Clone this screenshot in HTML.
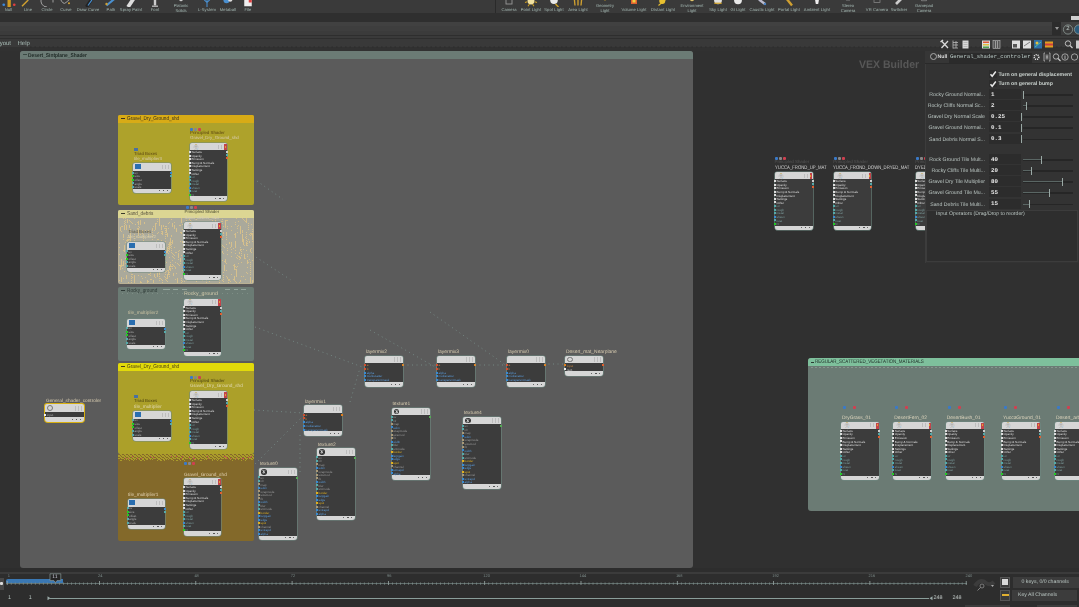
<!DOCTYPE html>
<html><head><meta charset="utf-8"><style>
html,body{margin:0;padding:0;width:1079px;height:607px;overflow:hidden;background:#303030;position:relative}
body{font-family:"Liberation Sans",sans-serif}
.t{position:absolute;white-space:nowrap;line-height:1.1;text-rendering:geometricPrecision}
.c{text-align:center}
</style></head><body>
<div id="root" style="position:absolute;left:0;top:0;width:1079px;height:607px;will-change:transform"><div style="position:absolute;left:0px;top:0px;width:1079px;height:13px;background:#3a3a3a;"></div><div style="position:absolute;left:0px;top:13px;width:1079px;height:9px;background:#2f2f2f;"></div><div style="position:absolute;left:0px;top:22px;width:1079px;height:4px;background:#414141;"></div><div style="position:absolute;left:0px;top:26px;width:1079px;height:5px;background:#3e3e3e;"></div><div style="position:absolute;left:0px;top:31px;width:1079px;height:4px;background:#3b3b3b;"></div><div style="position:absolute;left:0px;top:35px;width:1079px;height:1px;background:#2e2e2e;"></div><div style="position:absolute;left:0px;top:36px;width:1079px;height:2px;background:#3a3a3a;"></div><div style="position:absolute;left:0px;top:38px;width:1079px;height:1px;background:#2e2e2e;"></div><div style="position:absolute;left:0px;top:39px;width:1079px;height:8px;background:#393939;"></div><div style="position:absolute;left:0px;top:47px;width:1079px;height:4px;background:#313131;"></div><svg style="position:absolute;left:0;top:45.5px" width="1079" height="2"><line x1="30" y1="1" x2="1079" y2="1" stroke="#2c2c2c" stroke-width="1" stroke-dasharray="1.5 3"/></svg><svg style="position:absolute;left:1.5px;top:0" width="14" height="7" viewBox="-7 0 14 7"><g transform="translate(0,-0.5) scale(1.5)"><rect x="-1" y="-1" width="2.2" height="6.5" fill="#d09a20"/><circle cx="-3.5" cy="3.5" r="0.9" fill="#3a8ae0"/><circle cx="3.5" cy="3.5" r="0.9" fill="#e04040"/></g></svg><div class="t c" style="left:-21.5px;top:7px;width:60px;font-size:4.1px;line-height:5px;color:#a6bab4;letter-spacing:0.1px">Null</div><svg style="position:absolute;left:21px;top:0" width="14" height="7" viewBox="-7 0 14 7"><g transform="translate(0,-0.5) scale(1.5)"><path d="M-4 4.5 L0 0.5" stroke="#d0a030" stroke-width="1"/><path d="M0 0.5 L3 -1" stroke="#999" stroke-width="0.6"/></g></svg><div class="t c" style="left:-2px;top:7px;width:60px;font-size:4.1px;line-height:5px;color:#a6bab4;letter-spacing:0.1px">Line</div><svg style="position:absolute;left:40px;top:0" width="14" height="7" viewBox="-7 0 14 7"><g transform="translate(0,-0.5) scale(1.5)"><path d="M-3.5 -1 A4 4 0 0 0 0 5" stroke="#aaa" stroke-width="0.6" fill="none"/><path d="M4 -1 L4 2" stroke="#aaa" stroke-width="0.6"/></g></svg><div class="t c" style="left:17px;top:7px;width:60px;font-size:4.1px;line-height:5px;color:#a6bab4;letter-spacing:0.1px">Circle</div><svg style="position:absolute;left:59px;top:0" width="14" height="7" viewBox="-7 0 14 7"><g transform="translate(0,-0.5) scale(1.5)"><path d="M-4 -1 Q-2 4 0 2 T4 -1" stroke="#aaa" stroke-width="0.6" fill="none"/><circle cx="2" cy="2.5" r="0.7" fill="#d0a030"/></g></svg><div class="t c" style="left:36px;top:7px;width:60px;font-size:4.1px;line-height:5px;color:#a6bab4;letter-spacing:0.1px">Curve</div><svg style="position:absolute;left:81px;top:0" width="14" height="7" viewBox="-7 0 14 7"><g transform="translate(0,-0.5) scale(1.5)"><path d="M-1 5 L3 -1" stroke="#222" stroke-width="2.2"/><path d="M0 4 L3.5 -1" stroke="#4a90d0" stroke-width="0.8"/></g></svg><div class="t c" style="left:58px;top:7px;width:60px;font-size:4.1px;line-height:5px;color:#a6bab4;letter-spacing:0.1px">Draw Curve</div><svg style="position:absolute;left:104px;top:0" width="14" height="7" viewBox="-7 0 14 7"><g transform="translate(0,-0.5) scale(1.5)"><path d="M-3 4 L3 -1" stroke="#4a90d0" stroke-width="1.4"/><circle cx="-3" cy="3" r="0.8" fill="#d0a030"/></g></svg><div class="t c" style="left:81px;top:7px;width:60px;font-size:4.1px;line-height:5px;color:#a6bab4;letter-spacing:0.1px">Path</div><svg style="position:absolute;left:124px;top:0" width="14" height="7" viewBox="-7 0 14 7"><g transform="translate(0,-0.5) scale(1.5)"><path d="M-2 5 L2 -1" stroke="#ddd" stroke-width="2.5"/></g></svg><div class="t c" style="left:101px;top:7px;width:60px;font-size:4.1px;line-height:5px;color:#a6bab4;letter-spacing:0.1px">Spray Paint</div><svg style="position:absolute;left:148px;top:0" width="14" height="7" viewBox="-7 0 14 7"><g transform="translate(0,-0.5) scale(1.5)"><rect x="-0.8" y="-1" width="1.6" height="5" fill="#ccc"/><rect x="-2" y="4" width="4" height="1" fill="#aaa"/></g></svg><div class="t c" style="left:125px;top:7px;width:60px;font-size:4.1px;line-height:5px;color:#a6bab4;letter-spacing:0.1px">Font</div><svg style="position:absolute;left:174px;top:0" width="14" height="7" viewBox="-7 0 14 7"><g transform="translate(0,-0.5) scale(0.9)"><circle cx="0" cy="0" r="2" fill="#ccc"/></g></svg><div class="t c" style="left:151px;top:4.1px;width:60px;font-size:4.1px;line-height:4.4px;color:#a6bab4">Platonic<br>Solids</div><svg style="position:absolute;left:200px;top:0" width="14" height="7" viewBox="-7 0 14 7"><g transform="translate(0,-0.5) scale(1.5)"><path d="M0 5 L0 0 M-3 -1 L0 2 L3 -1" stroke="#4a90d0" stroke-width="0.7" fill="none"/></g></svg><div class="t c" style="left:177px;top:7px;width:60px;font-size:4.1px;line-height:5px;color:#a6bab4;letter-spacing:0.1px">L-System</div><svg style="position:absolute;left:221px;top:0" width="14" height="7" viewBox="-7 0 14 7"><g transform="translate(0,-0.5) scale(1.5)"><circle cx="-1" cy="0.5" r="2" fill="#4a90d0"/><circle cx="1.5" cy="0" r="1.5" fill="#ddd"/></g></svg><div class="t c" style="left:198px;top:7px;width:60px;font-size:4.1px;line-height:5px;color:#a6bab4;letter-spacing:0.1px">Metaball</div><svg style="position:absolute;left:241px;top:0" width="14" height="7" viewBox="-7 0 14 7"><g transform="translate(0,-0.5) scale(1.5)"><rect x="-2.5" y="-1" width="5" height="5.5" fill="#eee"/><rect x="0.5" y="-1" width="2" height="3" fill="#e04040"/></g></svg><div class="t c" style="left:218px;top:7px;width:60px;font-size:4.1px;line-height:5px;color:#a6bab4;letter-spacing:0.1px">File</div><svg style="position:absolute;left:502px;top:0" width="14" height="7" viewBox="-7 0 14 7"><g transform="translate(0,-0.5) scale(1.5)"><rect x="-2" y="-1" width="4" height="4" fill="none" stroke="#999" stroke-width="0.6"/></g></svg><div class="t c" style="left:479px;top:7px;width:60px;font-size:4.1px;line-height:5px;color:#a6bab4;letter-spacing:0.1px">Camera</div><svg style="position:absolute;left:524px;top:0" width="14" height="7" viewBox="-7 0 14 7"><g transform="translate(0,-0.5) scale(1.5)"><circle cx="0" cy="1" r="2.3" fill="#f0e0a0"/><path d="M-4 2 L-2.5 1.5 M4 2 L2.5 1.5 M-2 4.5 L-1 3 M2 4.5 L1 3" stroke="#d0a020" stroke-width="0.7"/></g></svg><div class="t c" style="left:501px;top:7px;width:60px;font-size:4.1px;line-height:5px;color:#a6bab4;letter-spacing:0.1px">Point Light</div><svg style="position:absolute;left:547px;top:0" width="14" height="7" viewBox="-7 0 14 7"><g transform="translate(0,-0.5) scale(1.5)"><circle cx="0" cy="0.5" r="2.5" fill="#e8e8e8"/><path d="M1 3 L3 5" stroke="#d0a020" stroke-width="0.9"/></g></svg><div class="t c" style="left:524px;top:7px;width:60px;font-size:4.1px;line-height:5px;color:#a6bab4;letter-spacing:0.1px">Spot Light</div><svg style="position:absolute;left:571px;top:0" width="14" height="7" viewBox="-7 0 14 7"><g transform="translate(0,-0.5) scale(1.5)"><path d="M-2.5 -1 L-2 4 M0 -1 L0 4 M2.5 -1 L2 4" stroke="#d0a030" stroke-width="0.9"/></g></svg><div class="t c" style="left:548px;top:7px;width:60px;font-size:4.1px;line-height:5px;color:#a6bab4;letter-spacing:0.1px">Area Light</div><svg style="position:absolute;left:598px;top:0" width="14" height="7" viewBox="-7 0 14 7"><g transform="translate(0,-0.5) scale(0.9)"><circle cx="0" cy="-0.5" r="1.5" fill="#e8b020"/></g></svg><div class="t c" style="left:575px;top:4.1px;width:60px;font-size:4.1px;line-height:4.4px;color:#a6bab4">Geometry<br>Light</div><svg style="position:absolute;left:627px;top:0" width="14" height="7" viewBox="-7 0 14 7"><g transform="translate(0,-0.5) scale(1.5)"><rect x="-2" y="-1" width="4" height="4" fill="#e06030"/><rect x="-1" y="0" width="2" height="2" fill="#f0d040"/></g></svg><div class="t c" style="left:604px;top:7px;width:60px;font-size:4.1px;line-height:5px;color:#a6bab4;letter-spacing:0.1px">Volume Light</div><svg style="position:absolute;left:656px;top:0" width="14" height="7" viewBox="-7 0 14 7"><g transform="translate(0,-0.5) scale(1.5)"><circle cx="-0.5" cy="1" r="2" fill="#e8c030"/><path d="M-3 4 L3 -1" stroke="#e8c030" stroke-width="0.7"/></g></svg><div class="t c" style="left:633px;top:7px;width:60px;font-size:4.1px;line-height:5px;color:#a6bab4;letter-spacing:0.1px">Distant Light</div><svg style="position:absolute;left:685px;top:0" width="14" height="7" viewBox="-7 0 14 7"><g transform="translate(0,-0.5) scale(0.9)"><circle cx="0" cy="-0.5" r="2.2" fill="#f0e0a0" stroke="#d0a020" stroke-width="0.5"/></g></svg><div class="t c" style="left:662px;top:4.1px;width:60px;font-size:4.1px;line-height:4.4px;color:#a6bab4">Environment<br>Light</div><svg style="position:absolute;left:711px;top:0" width="14" height="7" viewBox="-7 0 14 7"><g transform="translate(0,-0.5) scale(1.5)"><circle cx="0" cy="0.5" r="2.6" fill="#e0e0e0"/><path d="M-2.5 2.5 L2.5 2.5" stroke="#d0a020" stroke-width="0.8"/></g></svg><div class="t c" style="left:688px;top:7px;width:60px;font-size:4.1px;line-height:5px;color:#a6bab4;letter-spacing:0.1px">Sky Light</div><svg style="position:absolute;left:731px;top:0" width="14" height="7" viewBox="-7 0 14 7"><g transform="translate(0,-0.5) scale(1.5)"><circle cx="0" cy="0.5" r="2.6" fill="#e8e8e8"/></g></svg><div class="t c" style="left:708px;top:7px;width:60px;font-size:4.1px;line-height:5px;color:#a6bab4;letter-spacing:0.1px">GI Light</div><svg style="position:absolute;left:755px;top:0" width="14" height="7" viewBox="-7 0 14 7"><g transform="translate(0,-0.5) scale(1.5)"><path d="M-2 0 L2 3" stroke="#bbc" stroke-width="1.6"/><circle cx="2" cy="3" r="0.8" fill="#4a80c0"/></g></svg><div class="t c" style="left:732px;top:7px;width:60px;font-size:4.1px;line-height:5px;color:#a6bab4;letter-spacing:0.1px">Caustic Light</div><svg style="position:absolute;left:782px;top:0" width="14" height="7" viewBox="-7 0 14 7"><g transform="translate(0,-0.5) scale(1.5)"><path d="M-2 -1 L2 4" stroke="#d0a030" stroke-width="1.6"/></g></svg><div class="t c" style="left:759px;top:7px;width:60px;font-size:4.1px;line-height:5px;color:#a6bab4;letter-spacing:0.1px">Portal Light</div><svg style="position:absolute;left:810px;top:0" width="14" height="7" viewBox="-7 0 14 7"><g transform="translate(0,-0.5) scale(1.5)"><path d="M-1.5 -1 L1.5 -1 L0.8 3 L-0.8 3 Z" fill="#eee"/></g></svg><div class="t c" style="left:787px;top:7px;width:60px;font-size:4.1px;line-height:5px;color:#a6bab4;letter-spacing:0.1px">Ambient Light</div><svg style="position:absolute;left:841px;top:0" width="14" height="7" viewBox="-7 0 14 7"><g transform="translate(0,-0.5) scale(0.9)"><rect x="-2" y="-1" width="4" height="2" fill="none" stroke="#888" stroke-width="0.5"/></g></svg><div class="t c" style="left:818px;top:4.1px;width:60px;font-size:4.1px;line-height:4.4px;color:#a6bab4">Stereo<br>Camera</div><svg style="position:absolute;left:870px;top:0" width="14" height="7" viewBox="-7 0 14 7"><g transform="translate(0,-0.5) scale(1.5)"><rect x="-2" y="-1" width="4" height="3" fill="none" stroke="#888" stroke-width="0.5"/></g></svg><div class="t c" style="left:847px;top:7px;width:60px;font-size:4.1px;line-height:5px;color:#a6bab4;letter-spacing:0.1px">VR Camera</div><svg style="position:absolute;left:892px;top:0" width="14" height="7" viewBox="-7 0 14 7"><g transform="translate(0,-0.5) scale(1.5)"><path d="M-2 3 L2 -1" stroke="#ccc" stroke-width="1.8"/></g></svg><div class="t c" style="left:869px;top:7px;width:60px;font-size:4.1px;line-height:5px;color:#a6bab4;letter-spacing:0.1px">Switcher</div><svg style="position:absolute;left:917px;top:0" width="14" height="7" viewBox="-7 0 14 7"><g transform="translate(0,-0.5) scale(0.9)"><rect x="-2.5" y="-1" width="5" height="2.5" fill="none" stroke="#aaa" stroke-width="0.6"/></g></svg><div class="t c" style="left:894px;top:4.1px;width:60px;font-size:4.1px;line-height:4.4px;color:#a6bab4">Gamepad<br>Camera</div><div style="position:absolute;left:495px;top:0px;width:1px;height:13px;background:#2a2a2a;"></div><div style="position:absolute;left:1052px;top:22px;width:9px;height:13px;background:#2c2c2c;"></div><div style="position:absolute;left:1055px;top:27px;width:0;height:0;border-left:2px solid transparent;border-right:2px solid transparent;border-top:3px solid #999"></div><div class="t" style="left:1066.3px;top:26.2px;font-size:6px;color:#b8c4c0;">2</div><div style="position:absolute;left:1071px;top:16px;width:8px;height:4px;background:#cfcfcf;"></div><div class="t" style="left:-7px;top:40.5px;font-size:6px;color:#a9bdb7;">Layout</div><div class="t" style="left:17.5px;top:40.5px;font-size:6px;color:#a9bdb7;">Help</div><div style="position:absolute;left:0px;top:51px;width:1079px;height:517px;background:#303030;"></div><div style="position:absolute;left:20px;top:51px;width:673px;height:517px;background:#5b5b5b;border-radius:3px"></div><div style="position:absolute;left:20px;top:51px;width:673px;height:8px;background:#6b7b75;border-radius:3px 3px 0 0"></div><div style="position:absolute;left:22.5px;top:54.3px;width:4px;height:1px;background:#3a4a44;"></div><div class="t" style="left:28px;top:52.9px;font-size:5.6px;color:#1f2a26;transform:scaleX(0.87);transform-origin:0 0;font-weight:bold">Desert_Sintplane_Shader</div><div style="position:absolute;left:118px;top:115px;width:136.3px;height:90.3px;background:#aea22b;border-radius:2px;"></div><div style="position:absolute;left:118px;top:115px;width:136.3px;height:8px;background:#d8ab16;border-radius:2px 2px 0 0"></div><div style="position:absolute;left:120.5px;top:118.3px;width:4px;height:1px;background:#3a3020;"></div><div class="t" style="left:127px;top:116.2px;font-size:5.6px;color:#3a3020;transform:scaleX(0.84);transform-origin:0 0">Gravel_Dry_Ground_shd</div><div style="position:absolute;left:118px;top:210px;width:136.2px;height:74px;background:#b8b094;border-radius:2px"></div><svg style="position:absolute;left:119px;top:217px" width="134" height="66" shape-rendering="crispEdges"><rect width="134" height="66" fill="#aaa99b"/><rect x="115" y="59" width="1" height="4" fill="#d6c08c"/><rect x="130" y="24" width="1" height="2" fill="#d6c08c"/><rect x="131" y="60" width="1" height="6" fill="#d6c08c"/><rect x="47" y="12" width="1" height="4" fill="#d6c08c"/><rect x="77" y="18" width="1" height="1" fill="#d6c08c"/><rect x="10" y="50" width="1" height="4" fill="#d6c08c"/><rect x="40" y="1" width="1" height="8" fill="#d6c08c"/><rect x="16" y="7" width="1" height="1" fill="#d6c08c"/><rect x="48" y="30" width="1" height="5" fill="#d6c08c"/><rect x="7" y="59" width="1" height="3" fill="#d6c08c"/><rect x="112" y="25" width="1" height="5" fill="#d6c08c"/><rect x="59" y="37" width="1" height="4" fill="#d6c08c"/><rect x="1" y="10" width="1" height="4" fill="#d6c08c"/><rect x="71" y="52" width="1" height="5" fill="#d6c08c"/><rect x="21" y="32" width="1" height="3" fill="#d6c08c"/><rect x="58" y="65" width="1" height="3" fill="#d6c08c"/><rect x="7" y="8" width="1" height="5" fill="#d6c08c"/><rect x="27" y="51" width="1" height="1" fill="#d6c08c"/><rect x="74" y="49" width="1" height="1" fill="#d6c08c"/><rect x="4" y="0" width="1" height="2" fill="#d6c08c"/><rect x="53" y="6" width="1" height="4" fill="#d6c08c"/><rect x="96" y="50" width="1" height="4" fill="#d6c08c"/><rect x="18" y="25" width="1" height="8" fill="#d6c08c"/><rect x="69" y="43" width="1" height="1" fill="#d6c08c"/><rect x="79" y="42" width="1" height="1" fill="#d6c08c"/><rect x="104" y="15" width="1" height="2" fill="#d6c08c"/><rect x="63" y="12" width="1" height="1" fill="#d6c08c"/><rect x="15" y="59" width="1" height="8" fill="#d6c08c"/><rect x="124" y="22" width="1" height="6" fill="#d6c08c"/><rect x="48" y="57" width="1" height="5" fill="#d6c08c"/><rect x="48" y="16" width="1" height="4" fill="#d6c08c"/><rect x="98" y="14" width="1" height="4" fill="#d6c08c"/><rect x="107" y="27" width="1" height="1" fill="#d6c08c"/><rect x="69" y="38" width="1" height="1" fill="#d6c08c"/><rect x="53" y="23" width="1" height="4" fill="#d6c08c"/><rect x="25" y="5" width="1" height="2" fill="#d6c08c"/><rect x="54" y="56" width="1" height="3" fill="#d6c08c"/><rect x="2" y="42" width="1" height="8" fill="#d6c08c"/><rect x="75" y="49" width="1" height="1" fill="#d6c08c"/><rect x="19" y="11" width="1" height="2" fill="#d6c08c"/><rect x="62" y="1" width="1" height="5" fill="#d6c08c"/><rect x="94" y="47" width="1" height="5" fill="#d6c08c"/><rect x="116" y="16" width="1" height="5" fill="#d6c08c"/><rect x="123" y="17" width="1" height="8" fill="#d6c08c"/><rect x="98" y="23" width="1" height="6" fill="#d6c08c"/><rect x="39" y="39" width="1" height="2" fill="#d6c08c"/><rect x="63" y="24" width="1" height="2" fill="#d6c08c"/><rect x="50" y="49" width="1" height="4" fill="#d6c08c"/><rect x="20" y="53" width="1" height="1" fill="#d6c08c"/><rect x="26" y="13" width="1" height="1" fill="#d6c08c"/><rect x="131" y="32" width="1" height="2" fill="#d6c08c"/><rect x="100" y="32" width="1" height="4" fill="#d6c08c"/><rect x="125" y="37" width="1" height="5" fill="#d6c08c"/><rect x="44" y="8" width="1" height="2" fill="#d6c08c"/><rect x="58" y="61" width="1" height="5" fill="#d6c08c"/><rect x="18" y="35" width="1" height="2" fill="#d6c08c"/><rect x="52" y="2" width="1" height="1" fill="#d6c08c"/><rect x="68" y="52" width="1" height="4" fill="#d6c08c"/><rect x="63" y="7" width="1" height="1" fill="#d6c08c"/><rect x="45" y="36" width="1" height="3" fill="#d6c08c"/><rect x="33" y="11" width="1" height="3" fill="#d6c08c"/><rect x="35" y="57" width="1" height="3" fill="#d6c08c"/><rect x="133" y="17" width="1" height="5" fill="#d6c08c"/><rect x="8" y="2" width="1" height="4" fill="#d6c08c"/><rect x="91" y="39" width="1" height="1" fill="#d6c08c"/><rect x="5" y="9" width="1" height="4" fill="#d6c08c"/><rect x="17" y="39" width="1" height="3" fill="#d6c08c"/><rect x="34" y="9" width="1" height="1" fill="#d6c08c"/><rect x="115" y="47" width="1" height="6" fill="#d6c08c"/><rect x="11" y="16" width="1" height="8" fill="#d6c08c"/><rect x="87" y="45" width="1" height="1" fill="#d6c08c"/><rect x="121" y="9" width="1" height="8" fill="#d6c08c"/><rect x="106" y="3" width="1" height="8" fill="#d6c08c"/><rect x="127" y="1" width="1" height="5" fill="#d6c08c"/><rect x="97" y="48" width="1" height="5" fill="#d6c08c"/><rect x="3" y="9" width="1" height="1" fill="#d6c08c"/><rect x="23" y="14" width="1" height="3" fill="#d6c08c"/><rect x="106" y="42" width="1" height="4" fill="#d6c08c"/><rect x="117" y="56" width="1" height="4" fill="#d6c08c"/><rect x="21" y="65" width="1" height="1" fill="#d6c08c"/><rect x="79" y="11" width="1" height="4" fill="#d6c08c"/><rect x="5" y="29" width="1" height="6" fill="#d6c08c"/><rect x="28" y="63" width="1" height="8" fill="#d6c08c"/><rect x="124" y="32" width="1" height="1" fill="#d6c08c"/><rect x="94" y="38" width="1" height="2" fill="#d6c08c"/><rect x="51" y="21" width="1" height="8" fill="#d6c08c"/><rect x="87" y="56" width="1" height="4" fill="#d6c08c"/><rect x="61" y="41" width="1" height="4" fill="#d6c08c"/><rect x="64" y="25" width="1" height="6" fill="#d6c08c"/><rect x="110" y="25" width="1" height="2" fill="#d6c08c"/><rect x="98" y="28" width="1" height="5" fill="#d6c08c"/><rect x="81" y="26" width="1" height="2" fill="#d6c08c"/><rect x="34" y="63" width="1" height="3" fill="#d6c08c"/><rect x="10" y="8" width="1" height="3" fill="#d6c08c"/><rect x="43" y="14" width="1" height="4" fill="#d6c08c"/><rect x="120" y="35" width="1" height="2" fill="#d6c08c"/><rect x="105" y="48" width="1" height="6" fill="#d6c08c"/><rect x="133" y="63" width="1" height="6" fill="#d6c08c"/><rect x="80" y="57" width="1" height="3" fill="#d6c08c"/><rect x="19" y="4" width="1" height="3" fill="#d6c08c"/><rect x="10" y="35" width="1" height="5" fill="#d6c08c"/><rect x="90" y="39" width="1" height="6" fill="#d6c08c"/><rect x="4" y="17" width="1" height="4" fill="#d6c08c"/><rect x="116" y="24" width="1" height="1" fill="#d6c08c"/><rect x="68" y="30" width="1" height="8" fill="#d6c08c"/><rect x="36" y="6" width="1" height="6" fill="#d6c08c"/><rect x="29" y="57" width="1" height="1" fill="#d6c08c"/><rect x="94" y="9" width="1" height="6" fill="#d6c08c"/><rect x="50" y="25" width="1" height="8" fill="#d6c08c"/><rect x="121" y="32" width="1" height="2" fill="#d6c08c"/><rect x="2" y="60" width="1" height="5" fill="#d6c08c"/><rect x="9" y="22" width="1" height="2" fill="#d6c08c"/><rect x="69" y="44" width="1" height="5" fill="#d6c08c"/><rect x="133" y="64" width="1" height="5" fill="#d6c08c"/><rect x="40" y="50" width="1" height="8" fill="#d6c08c"/><rect x="57" y="11" width="1" height="4" fill="#d6c08c"/><rect x="99" y="16" width="1" height="4" fill="#d6c08c"/><rect x="116" y="25" width="1" height="6" fill="#d6c08c"/><rect x="1" y="48" width="1" height="5" fill="#d6c08c"/><rect x="128" y="43" width="1" height="4" fill="#d6c08c"/><rect x="83" y="26" width="1" height="1" fill="#d6c08c"/><rect x="31" y="27" width="1" height="2" fill="#d6c08c"/><rect x="99" y="11" width="1" height="3" fill="#d6c08c"/><rect x="82" y="33" width="1" height="6" fill="#d6c08c"/><rect x="4" y="44" width="1" height="5" fill="#d6c08c"/><rect x="21" y="4" width="1" height="4" fill="#d6c08c"/><rect x="87" y="53" width="1" height="8" fill="#d6c08c"/><rect x="70" y="62" width="1" height="1" fill="#d6c08c"/><rect x="55" y="8" width="1" height="4" fill="#d6c08c"/><rect x="8" y="22" width="1" height="5" fill="#d6c08c"/><rect x="85" y="17" width="1" height="4" fill="#d6c08c"/><rect x="38" y="56" width="1" height="4" fill="#d6c08c"/><rect x="22" y="28" width="1" height="4" fill="#d6c08c"/><rect x="74" y="21" width="1" height="5" fill="#d6c08c"/><rect x="131" y="32" width="1" height="3" fill="#d6c08c"/><rect x="97" y="26" width="1" height="3" fill="#d6c08c"/><rect x="36" y="34" width="1" height="5" fill="#d6c08c"/><rect x="127" y="25" width="1" height="4" fill="#d6c08c"/><rect x="29" y="64" width="1" height="1" fill="#d6c08c"/><rect x="96" y="3" width="1" height="5" fill="#d6c08c"/><rect x="11" y="51" width="1" height="5" fill="#d6c08c"/><rect x="31" y="62" width="1" height="1" fill="#d6c08c"/><rect x="42" y="8" width="1" height="5" fill="#d6c08c"/><rect x="117" y="52" width="1" height="8" fill="#d6c08c"/><rect x="103" y="34" width="1" height="2" fill="#d6c08c"/><rect x="121" y="63" width="1" height="2" fill="#d6c08c"/><rect x="86" y="55" width="1" height="8" fill="#d6c08c"/><rect x="121" y="40" width="1" height="1" fill="#d6c08c"/><rect x="49" y="53" width="1" height="5" fill="#d6c08c"/><rect x="7" y="33" width="1" height="2" fill="#d6c08c"/><rect x="5" y="4" width="1" height="1" fill="#d6c08c"/><rect x="5" y="6" width="1" height="1" fill="#d6c08c"/><rect x="5" y="8" width="1" height="1" fill="#d6c08c"/><rect x="5" y="10" width="1" height="1" fill="#d6c08c"/><rect x="39" y="29" width="1" height="1" fill="#d6c08c"/><rect x="39" y="31" width="1" height="1" fill="#d6c08c"/><rect x="39" y="33" width="1" height="1" fill="#d6c08c"/><rect x="72" y="41" width="1" height="1" fill="#d6c08c"/><rect x="72" y="43" width="1" height="1" fill="#d6c08c"/><rect x="72" y="45" width="1" height="1" fill="#d6c08c"/><rect x="72" y="47" width="1" height="1" fill="#d6c08c"/><rect x="72" y="49" width="1" height="1" fill="#d6c08c"/><rect x="62" y="63" width="1" height="1" fill="#d6c08c"/><rect x="62" y="65" width="1" height="1" fill="#d6c08c"/><rect x="62" y="67" width="1" height="1" fill="#d6c08c"/><rect x="127" y="15" width="1" height="1" fill="#d6c08c"/><rect x="127" y="17" width="1" height="1" fill="#d6c08c"/><rect x="127" y="19" width="1" height="1" fill="#d6c08c"/><rect x="127" y="21" width="1" height="1" fill="#d6c08c"/><rect x="127" y="23" width="1" height="1" fill="#d6c08c"/><rect x="50" y="55" width="1" height="1" fill="#d6c08c"/><rect x="50" y="57" width="1" height="1" fill="#d6c08c"/><rect x="50" y="59" width="1" height="1" fill="#d6c08c"/><rect x="96" y="52" width="1" height="1" fill="#d6c08c"/><rect x="96" y="54" width="1" height="1" fill="#d6c08c"/><rect x="96" y="56" width="1" height="1" fill="#d6c08c"/><rect x="96" y="58" width="1" height="1" fill="#d6c08c"/><rect x="52" y="27" width="1" height="1" fill="#d6c08c"/><rect x="52" y="29" width="1" height="1" fill="#d6c08c"/><rect x="52" y="31" width="1" height="1" fill="#d6c08c"/><rect x="52" y="33" width="1" height="1" fill="#d6c08c"/><rect x="34" y="29" width="1" height="1" fill="#d6c08c"/><rect x="34" y="31" width="1" height="1" fill="#d6c08c"/><rect x="34" y="33" width="1" height="1" fill="#d6c08c"/><rect x="34" y="35" width="1" height="1" fill="#d6c08c"/><rect x="34" y="37" width="1" height="1" fill="#d6c08c"/><rect x="46" y="40" width="1" height="1" fill="#d6c08c"/><rect x="46" y="42" width="1" height="1" fill="#d6c08c"/><rect x="46" y="44" width="1" height="1" fill="#d6c08c"/><rect x="46" y="46" width="1" height="1" fill="#d6c08c"/><rect x="46" y="48" width="1" height="1" fill="#d6c08c"/><rect x="49" y="27" width="1" height="1" fill="#d6c08c"/><rect x="49" y="29" width="1" height="1" fill="#d6c08c"/><rect x="49" y="31" width="1" height="1" fill="#d6c08c"/><rect x="49" y="33" width="1" height="1" fill="#d6c08c"/><rect x="24" y="17" width="1" height="1" fill="#d6c08c"/><rect x="24" y="19" width="1" height="1" fill="#d6c08c"/><rect x="24" y="21" width="1" height="1" fill="#d6c08c"/><rect x="24" y="23" width="1" height="1" fill="#d6c08c"/><rect x="33" y="11" width="1" height="1" fill="#d6c08c"/><rect x="33" y="13" width="1" height="1" fill="#d6c08c"/><rect x="33" y="15" width="1" height="1" fill="#d6c08c"/><rect x="33" y="17" width="1" height="1" fill="#d6c08c"/><rect x="33" y="19" width="1" height="1" fill="#d6c08c"/><rect x="99" y="12" width="1" height="1" fill="#d6c08c"/><rect x="99" y="14" width="1" height="1" fill="#d6c08c"/><rect x="99" y="16" width="1" height="1" fill="#d6c08c"/><rect x="99" y="18" width="1" height="1" fill="#d6c08c"/><rect x="99" y="20" width="1" height="1" fill="#d6c08c"/><rect x="99" y="22" width="1" height="1" fill="#d6c08c"/><rect x="99" y="24" width="1" height="1" fill="#d6c08c"/><rect x="107" y="16" width="1" height="1" fill="#d6c08c"/><rect x="107" y="18" width="1" height="1" fill="#d6c08c"/><rect x="107" y="20" width="1" height="1" fill="#d6c08c"/><rect x="107" y="22" width="1" height="1" fill="#d6c08c"/><rect x="103" y="2" width="1" height="1" fill="#d6c08c"/><rect x="103" y="4" width="1" height="1" fill="#d6c08c"/><rect x="103" y="6" width="1" height="1" fill="#d6c08c"/><rect x="51" y="45" width="1" height="1" fill="#d6c08c"/><rect x="51" y="47" width="1" height="1" fill="#d6c08c"/><rect x="51" y="49" width="1" height="1" fill="#d6c08c"/><rect x="51" y="51" width="1" height="1" fill="#d6c08c"/><rect x="51" y="53" width="1" height="1" fill="#d6c08c"/><rect x="29" y="64" width="1" height="1" fill="#d6c08c"/><rect x="29" y="66" width="1" height="1" fill="#d6c08c"/><rect x="29" y="68" width="1" height="1" fill="#d6c08c"/><rect x="29" y="70" width="1" height="1" fill="#d6c08c"/><rect x="29" y="72" width="1" height="1" fill="#d6c08c"/><rect x="128" y="24" width="1" height="1" fill="#d6c08c"/><rect x="128" y="26" width="1" height="1" fill="#d6c08c"/><rect x="128" y="28" width="1" height="1" fill="#d6c08c"/><rect x="123" y="13" width="1" height="1" fill="#d6c08c"/><rect x="123" y="15" width="1" height="1" fill="#d6c08c"/><rect x="123" y="17" width="1" height="1" fill="#d6c08c"/><rect x="9" y="65" width="1" height="1" fill="#d6c08c"/><rect x="9" y="67" width="1" height="1" fill="#d6c08c"/><rect x="9" y="69" width="1" height="1" fill="#d6c08c"/><rect x="9" y="71" width="1" height="1" fill="#d6c08c"/><rect x="9" y="73" width="1" height="1" fill="#d6c08c"/><rect x="9" y="75" width="1" height="1" fill="#d6c08c"/><rect x="9" y="77" width="1" height="1" fill="#d6c08c"/><rect x="37" y="24" width="1" height="1" fill="#d6c08c"/><rect x="37" y="26" width="1" height="1" fill="#d6c08c"/><rect x="37" y="28" width="1" height="1" fill="#d6c08c"/><rect x="37" y="30" width="1" height="1" fill="#d6c08c"/><rect x="29" y="26" width="1" height="1" fill="#d6c08c"/><rect x="29" y="28" width="1" height="1" fill="#d6c08c"/><rect x="29" y="30" width="1" height="1" fill="#d6c08c"/><rect x="29" y="32" width="1" height="1" fill="#d6c08c"/><rect x="40" y="36" width="1" height="1" fill="#d6c08c"/><rect x="40" y="38" width="1" height="1" fill="#d6c08c"/><rect x="40" y="40" width="1" height="1" fill="#d6c08c"/><rect x="15" y="17" width="1" height="1" fill="#d6c08c"/><rect x="15" y="19" width="1" height="1" fill="#d6c08c"/><rect x="15" y="21" width="1" height="1" fill="#d6c08c"/><rect x="15" y="23" width="1" height="1" fill="#d6c08c"/><rect x="15" y="25" width="1" height="1" fill="#d6c08c"/><rect x="15" y="27" width="1" height="1" fill="#d6c08c"/><rect x="15" y="29" width="1" height="1" fill="#d6c08c"/><rect x="19" y="12" width="1" height="1" fill="#d6c08c"/><rect x="19" y="14" width="1" height="1" fill="#d6c08c"/><rect x="19" y="16" width="1" height="1" fill="#d6c08c"/><rect x="19" y="18" width="1" height="1" fill="#d6c08c"/><rect x="19" y="20" width="1" height="1" fill="#d6c08c"/><rect x="100" y="59" width="1" height="1" fill="#d6c08c"/><rect x="100" y="61" width="1" height="1" fill="#d6c08c"/><rect x="100" y="63" width="1" height="1" fill="#d6c08c"/><rect x="100" y="65" width="1" height="1" fill="#d6c08c"/><rect x="100" y="67" width="1" height="1" fill="#d6c08c"/><rect x="100" y="69" width="1" height="1" fill="#d6c08c"/><rect x="100" y="71" width="1" height="1" fill="#d6c08c"/><rect x="131" y="45" width="1" height="1" fill="#d6c08c"/><rect x="131" y="47" width="1" height="1" fill="#d6c08c"/><rect x="131" y="49" width="1" height="1" fill="#d6c08c"/><rect x="131" y="51" width="1" height="1" fill="#d6c08c"/><rect x="131" y="53" width="1" height="1" fill="#d6c08c"/><rect x="131" y="55" width="1" height="1" fill="#d6c08c"/><rect x="131" y="57" width="1" height="1" fill="#d6c08c"/><rect x="53" y="47" width="1" height="1" fill="#d6c08c"/><rect x="53" y="49" width="1" height="1" fill="#d6c08c"/><rect x="53" y="51" width="1" height="1" fill="#d6c08c"/><rect x="10" y="25" width="1" height="1" fill="#d6c08c"/><rect x="10" y="27" width="1" height="1" fill="#d6c08c"/><rect x="10" y="29" width="1" height="1" fill="#d6c08c"/><rect x="10" y="31" width="1" height="1" fill="#d6c08c"/><rect x="104" y="58" width="1" height="1" fill="#d6c08c"/><rect x="104" y="60" width="1" height="1" fill="#d6c08c"/><rect x="104" y="62" width="1" height="1" fill="#d6c08c"/><rect x="104" y="64" width="1" height="1" fill="#d6c08c"/><rect x="104" y="66" width="1" height="1" fill="#d6c08c"/><rect x="94" y="51" width="1" height="1" fill="#d6c08c"/><rect x="94" y="53" width="1" height="1" fill="#d6c08c"/><rect x="94" y="55" width="1" height="1" fill="#d6c08c"/><rect x="94" y="57" width="1" height="1" fill="#d6c08c"/><rect x="42" y="12" width="1" height="1" fill="#d6c08c"/><rect x="42" y="14" width="1" height="1" fill="#d6c08c"/><rect x="42" y="16" width="1" height="1" fill="#d6c08c"/><rect x="82" y="10" width="1" height="1" fill="#d6c08c"/><rect x="82" y="12" width="1" height="1" fill="#d6c08c"/><rect x="82" y="14" width="1" height="1" fill="#d6c08c"/><rect x="82" y="16" width="1" height="1" fill="#d6c08c"/><rect x="82" y="18" width="1" height="1" fill="#d6c08c"/><rect x="82" y="20" width="1" height="1" fill="#d6c08c"/><rect x="82" y="22" width="1" height="1" fill="#d6c08c"/><rect x="48" y="64" width="1" height="1" fill="#d6c08c"/><rect x="48" y="66" width="1" height="1" fill="#d6c08c"/><rect x="48" y="68" width="1" height="1" fill="#d6c08c"/><rect x="48" y="70" width="1" height="1" fill="#d6c08c"/><rect x="48" y="72" width="1" height="1" fill="#d6c08c"/><rect x="66" y="35" width="1" height="1" fill="#d6c08c"/><rect x="66" y="37" width="1" height="1" fill="#d6c08c"/><rect x="66" y="39" width="1" height="1" fill="#d6c08c"/><rect x="40" y="51" width="1" height="1" fill="#d6c08c"/><rect x="40" y="53" width="1" height="1" fill="#d6c08c"/><rect x="40" y="55" width="1" height="1" fill="#d6c08c"/><rect x="40" y="57" width="1" height="1" fill="#d6c08c"/><rect x="84" y="47" width="1" height="1" fill="#d6c08c"/><rect x="84" y="49" width="1" height="1" fill="#d6c08c"/><rect x="84" y="51" width="1" height="1" fill="#d6c08c"/><rect x="84" y="53" width="1" height="1" fill="#d6c08c"/><rect x="84" y="55" width="1" height="1" fill="#d6c08c"/><rect x="84" y="57" width="1" height="1" fill="#d6c08c"/><rect x="84" y="59" width="1" height="1" fill="#d6c08c"/><rect x="46" y="51" width="1" height="1" fill="#d6c08c"/><rect x="46" y="53" width="1" height="1" fill="#d6c08c"/><rect x="46" y="55" width="1" height="1" fill="#d6c08c"/><rect x="46" y="57" width="1" height="1" fill="#d6c08c"/><rect x="47" y="9" width="1" height="1" fill="#d6c08c"/><rect x="47" y="11" width="1" height="1" fill="#d6c08c"/><rect x="47" y="13" width="1" height="1" fill="#d6c08c"/><rect x="47" y="15" width="1" height="1" fill="#d6c08c"/><rect x="47" y="17" width="1" height="1" fill="#d6c08c"/><rect x="77" y="60" width="1" height="1" fill="#d6c08c"/><rect x="77" y="62" width="1" height="1" fill="#d6c08c"/><rect x="77" y="64" width="1" height="1" fill="#d6c08c"/><rect x="2" y="45" width="1" height="1" fill="#d6c08c"/><rect x="2" y="47" width="1" height="1" fill="#d6c08c"/><rect x="2" y="49" width="1" height="1" fill="#d6c08c"/><rect x="59" y="34" width="1" height="1" fill="#d6c08c"/><rect x="59" y="36" width="1" height="1" fill="#d6c08c"/><rect x="59" y="38" width="1" height="1" fill="#d6c08c"/><rect x="59" y="40" width="1" height="1" fill="#d6c08c"/><rect x="59" y="42" width="1" height="1" fill="#d6c08c"/><rect x="86" y="27" width="1" height="1" fill="#d6c08c"/><rect x="86" y="29" width="1" height="1" fill="#d6c08c"/><rect x="86" y="31" width="1" height="1" fill="#d6c08c"/><rect x="86" y="33" width="1" height="1" fill="#d6c08c"/><rect x="86" y="35" width="1" height="1" fill="#d6c08c"/><rect x="86" y="37" width="1" height="1" fill="#d6c08c"/><rect x="86" y="39" width="1" height="1" fill="#d6c08c"/><rect x="46" y="9" width="1" height="1" fill="#d6c08c"/><rect x="46" y="11" width="1" height="1" fill="#d6c08c"/><rect x="46" y="13" width="1" height="1" fill="#d6c08c"/><rect x="46" y="15" width="1" height="1" fill="#d6c08c"/><rect x="46" y="17" width="1" height="1" fill="#d6c08c"/><rect x="46" y="19" width="1" height="1" fill="#d6c08c"/><rect x="46" y="21" width="1" height="1" fill="#d6c08c"/><rect x="131" y="63" width="1" height="1" fill="#d6c08c"/><rect x="131" y="65" width="1" height="1" fill="#d6c08c"/><rect x="131" y="67" width="1" height="1" fill="#d6c08c"/><rect x="131" y="69" width="1" height="1" fill="#d6c08c"/><rect x="30" y="50" width="1" height="1" fill="#d6c08c"/><rect x="30" y="52" width="1" height="1" fill="#d6c08c"/><rect x="30" y="54" width="1" height="1" fill="#d6c08c"/><rect x="29" y="13" width="1" height="1" fill="#d6c08c"/><rect x="29" y="15" width="1" height="1" fill="#d6c08c"/><rect x="29" y="17" width="1" height="1" fill="#d6c08c"/><rect x="29" y="19" width="1" height="1" fill="#d6c08c"/><rect x="65" y="56" width="1" height="1" fill="#d6c08c"/><rect x="65" y="58" width="1" height="1" fill="#d6c08c"/><rect x="65" y="60" width="1" height="1" fill="#d6c08c"/><rect x="65" y="62" width="1" height="1" fill="#d6c08c"/><rect x="65" y="64" width="1" height="1" fill="#d6c08c"/><rect x="65" y="66" width="1" height="1" fill="#d6c08c"/><rect x="65" y="68" width="1" height="1" fill="#d6c08c"/><rect x="129" y="6" width="1" height="1" fill="#d6c08c"/><rect x="129" y="8" width="1" height="1" fill="#d6c08c"/><rect x="129" y="10" width="1" height="1" fill="#d6c08c"/><rect x="129" y="12" width="1" height="1" fill="#d6c08c"/><rect x="96" y="1" width="1" height="1" fill="#d6c08c"/><rect x="96" y="3" width="1" height="1" fill="#d6c08c"/><rect x="96" y="5" width="1" height="1" fill="#d6c08c"/><rect x="66" y="32" width="1" height="1" fill="#d6c08c"/><rect x="66" y="34" width="1" height="1" fill="#d6c08c"/><rect x="66" y="36" width="1" height="1" fill="#d6c08c"/><rect x="66" y="38" width="1" height="1" fill="#d6c08c"/><rect x="66" y="40" width="1" height="1" fill="#d6c08c"/><rect x="87" y="65" width="1" height="1" fill="#d6c08c"/><rect x="87" y="67" width="1" height="1" fill="#d6c08c"/><rect x="87" y="69" width="1" height="1" fill="#d6c08c"/><rect x="87" y="71" width="1" height="1" fill="#d6c08c"/><rect x="87" y="73" width="1" height="1" fill="#d6c08c"/><rect x="87" y="75" width="1" height="1" fill="#d6c08c"/><rect x="87" y="77" width="1" height="1" fill="#d6c08c"/><rect x="133" y="12" width="1" height="1" fill="#d6c08c"/><rect x="133" y="14" width="1" height="1" fill="#d6c08c"/><rect x="133" y="16" width="1" height="1" fill="#d6c08c"/><rect x="133" y="18" width="1" height="1" fill="#d6c08c"/><rect x="133" y="20" width="1" height="1" fill="#d6c08c"/><rect x="133" y="22" width="1" height="1" fill="#d6c08c"/><rect x="133" y="24" width="1" height="1" fill="#d6c08c"/><rect x="19" y="5" width="1" height="1" fill="#d6c08c"/><rect x="19" y="7" width="1" height="1" fill="#d6c08c"/><rect x="19" y="9" width="1" height="1" fill="#d6c08c"/><rect x="19" y="11" width="1" height="1" fill="#d6c08c"/><rect x="19" y="13" width="1" height="1" fill="#d6c08c"/><rect x="19" y="15" width="1" height="1" fill="#d6c08c"/><rect x="19" y="17" width="1" height="1" fill="#d6c08c"/><rect x="40" y="49" width="1" height="1" fill="#d6c08c"/><rect x="40" y="51" width="1" height="1" fill="#d6c08c"/><rect x="40" y="53" width="1" height="1" fill="#d6c08c"/><rect x="40" y="55" width="1" height="1" fill="#d6c08c"/><rect x="40" y="57" width="1" height="1" fill="#d6c08c"/><rect x="40" y="59" width="1" height="1" fill="#d6c08c"/><rect x="40" y="61" width="1" height="1" fill="#d6c08c"/><rect x="43" y="63" width="1" height="1" fill="#d6c08c"/><rect x="43" y="65" width="1" height="1" fill="#d6c08c"/><rect x="43" y="67" width="1" height="1" fill="#d6c08c"/><rect x="109" y="63" width="1" height="1" fill="#d6c08c"/><rect x="109" y="65" width="1" height="1" fill="#d6c08c"/><rect x="109" y="67" width="1" height="1" fill="#d6c08c"/><rect x="109" y="69" width="1" height="1" fill="#d6c08c"/><rect x="109" y="71" width="1" height="1" fill="#d6c08c"/><rect x="109" y="73" width="1" height="1" fill="#d6c08c"/><rect x="109" y="75" width="1" height="1" fill="#d6c08c"/><rect x="72" y="51" width="1" height="1" fill="#d6c08c"/><rect x="72" y="53" width="1" height="1" fill="#d6c08c"/><rect x="72" y="55" width="1" height="1" fill="#d6c08c"/><rect x="72" y="57" width="1" height="1" fill="#d6c08c"/><rect x="72" y="59" width="1" height="1" fill="#d6c08c"/><rect x="93" y="36" width="1" height="1" fill="#d6c08c"/><rect x="93" y="38" width="1" height="1" fill="#d6c08c"/><rect x="93" y="40" width="1" height="1" fill="#d6c08c"/><rect x="93" y="42" width="1" height="1" fill="#d6c08c"/><rect x="93" y="44" width="1" height="1" fill="#d6c08c"/><rect x="93" y="46" width="1" height="1" fill="#d6c08c"/><rect x="93" y="48" width="1" height="1" fill="#d6c08c"/><rect x="69" y="36" width="1" height="1" fill="#d6c08c"/><rect x="69" y="38" width="1" height="1" fill="#d6c08c"/><rect x="69" y="40" width="1" height="1" fill="#d6c08c"/><rect x="69" y="42" width="1" height="1" fill="#d6c08c"/><rect x="69" y="44" width="1" height="1" fill="#d6c08c"/><rect x="6" y="1" width="1" height="1" fill="#d6c08c"/><rect x="6" y="3" width="1" height="1" fill="#d6c08c"/><rect x="6" y="5" width="1" height="1" fill="#d6c08c"/><rect x="6" y="7" width="1" height="1" fill="#d6c08c"/><rect x="10" y="20" width="1" height="1" fill="#d6c08c"/><rect x="10" y="22" width="1" height="1" fill="#d6c08c"/><rect x="10" y="24" width="1" height="1" fill="#d6c08c"/><rect x="10" y="26" width="1" height="1" fill="#d6c08c"/><rect x="10" y="28" width="1" height="1" fill="#d6c08c"/><rect x="10" y="30" width="1" height="1" fill="#d6c08c"/><rect x="10" y="32" width="1" height="1" fill="#d6c08c"/><rect x="99" y="6" width="1" height="1" fill="#d6c08c"/><rect x="99" y="8" width="1" height="1" fill="#d6c08c"/><rect x="99" y="10" width="1" height="1" fill="#d6c08c"/><rect x="99" y="12" width="1" height="1" fill="#d6c08c"/><rect x="99" y="14" width="1" height="1" fill="#d6c08c"/><rect x="101" y="6" width="1" height="1" fill="#d6c08c"/><rect x="101" y="8" width="1" height="1" fill="#d6c08c"/><rect x="101" y="10" width="1" height="1" fill="#d6c08c"/><rect x="101" y="12" width="1" height="1" fill="#d6c08c"/><rect x="101" y="14" width="1" height="1" fill="#d6c08c"/><rect x="18" y="28" width="1" height="1" fill="#d6c08c"/><rect x="18" y="30" width="1" height="1" fill="#d6c08c"/><rect x="18" y="32" width="1" height="1" fill="#d6c08c"/><rect x="18" y="34" width="1" height="1" fill="#d6c08c"/><rect x="18" y="36" width="1" height="1" fill="#d6c08c"/><rect x="18" y="38" width="1" height="1" fill="#d6c08c"/><rect x="18" y="40" width="1" height="1" fill="#d6c08c"/><rect x="122" y="32" width="1" height="1" fill="#d6c08c"/><rect x="122" y="34" width="1" height="1" fill="#d6c08c"/><rect x="122" y="36" width="1" height="1" fill="#d6c08c"/><rect x="122" y="38" width="1" height="1" fill="#d6c08c"/><rect x="11" y="12" width="1" height="1" fill="#d6c08c"/><rect x="11" y="14" width="1" height="1" fill="#d6c08c"/><rect x="11" y="16" width="1" height="1" fill="#d6c08c"/><rect x="11" y="18" width="1" height="1" fill="#d6c08c"/><rect x="11" y="20" width="1" height="1" fill="#d6c08c"/><rect x="11" y="22" width="1" height="1" fill="#d6c08c"/><rect x="11" y="24" width="1" height="1" fill="#d6c08c"/><rect x="36" y="31" width="1" height="1" fill="#d6c08c"/><rect x="36" y="33" width="1" height="1" fill="#d6c08c"/><rect x="36" y="35" width="1" height="1" fill="#d6c08c"/><rect x="12" y="53" width="1" height="1" fill="#d6c08c"/><rect x="12" y="55" width="1" height="1" fill="#d6c08c"/><rect x="12" y="57" width="1" height="1" fill="#d6c08c"/><rect x="12" y="59" width="1" height="1" fill="#d6c08c"/><rect x="12" y="61" width="1" height="1" fill="#d6c08c"/><rect x="12" y="63" width="1" height="1" fill="#d6c08c"/><rect x="12" y="65" width="1" height="1" fill="#d6c08c"/><rect x="30" y="26" width="1" height="1" fill="#d4be8a"/><rect x="13" y="45" width="1" height="1" fill="#d4be8a"/><rect x="39" y="15" width="1" height="1" fill="#d4be8a"/><rect x="93" y="56" width="1" height="1" fill="#d4be8a"/><rect x="35" y="53" width="1" height="1" fill="#d4be8a"/><rect x="116" y="33" width="1" height="1" fill="#d4be8a"/><rect x="107" y="46" width="1" height="1" fill="#d4be8a"/><rect x="35" y="37" width="1" height="1" fill="#d4be8a"/><rect x="32" y="30" width="1" height="1" fill="#d4be8a"/><rect x="123" y="14" width="1" height="1" fill="#d4be8a"/><rect x="128" y="39" width="1" height="1" fill="#d4be8a"/><rect x="129" y="45" width="1" height="1" fill="#d4be8a"/><rect x="70" y="34" width="1" height="1" fill="#d4be8a"/><rect x="48" y="35" width="1" height="1" fill="#d4be8a"/><rect x="61" y="24" width="1" height="1" fill="#d4be8a"/><rect x="63" y="64" width="1" height="1" fill="#d4be8a"/><rect x="50" y="5" width="1" height="1" fill="#d4be8a"/><rect x="15" y="1" width="1" height="1" fill="#d4be8a"/><rect x="69" y="33" width="1" height="1" fill="#d4be8a"/><rect x="108" y="3" width="1" height="1" fill="#d4be8a"/><rect x="9" y="13" width="1" height="1" fill="#d4be8a"/><rect x="56" y="35" width="1" height="1" fill="#d4be8a"/><rect x="18" y="11" width="1" height="1" fill="#d4be8a"/><rect x="41" y="30" width="1" height="1" fill="#d4be8a"/><rect x="95" y="61" width="1" height="1" fill="#d4be8a"/><rect x="122" y="45" width="1" height="1" fill="#d4be8a"/><rect x="53" y="43" width="1" height="1" fill="#d4be8a"/><rect x="87" y="63" width="1" height="1" fill="#d4be8a"/><rect x="34" y="9" width="1" height="1" fill="#d4be8a"/><rect x="30" y="57" width="1" height="1" fill="#d4be8a"/><rect x="54" y="56" width="1" height="1" fill="#d4be8a"/><rect x="108" y="33" width="1" height="1" fill="#d4be8a"/><rect x="99" y="19" width="1" height="1" fill="#d4be8a"/><rect x="94" y="19" width="1" height="1" fill="#d4be8a"/><rect x="83" y="37" width="1" height="1" fill="#d4be8a"/><rect x="47" y="54" width="1" height="1" fill="#d4be8a"/><rect x="94" y="12" width="1" height="1" fill="#d4be8a"/><rect x="118" y="41" width="1" height="1" fill="#d4be8a"/><rect x="20" y="10" width="1" height="1" fill="#d4be8a"/><rect x="110" y="62" width="1" height="1" fill="#d4be8a"/><rect x="118" y="38" width="1" height="1" fill="#d4be8a"/><rect x="2" y="9" width="1" height="1" fill="#d4be8a"/><rect x="79" y="27" width="1" height="1" fill="#d4be8a"/><rect x="20" y="38" width="1" height="1" fill="#d4be8a"/><rect x="126" y="41" width="1" height="1" fill="#d4be8a"/><rect x="72" y="18" width="1" height="1" fill="#d4be8a"/><rect x="56" y="45" width="1" height="1" fill="#d4be8a"/><rect x="83" y="46" width="1" height="1" fill="#d4be8a"/><rect x="30" y="41" width="1" height="1" fill="#d4be8a"/><rect x="112" y="35" width="1" height="1" fill="#d4be8a"/><rect x="112" y="39" width="1" height="1" fill="#d4be8a"/><rect x="117" y="40" width="1" height="1" fill="#d4be8a"/><rect x="56" y="51" width="1" height="1" fill="#d4be8a"/><rect x="132" y="31" width="1" height="1" fill="#d4be8a"/><rect x="21" y="46" width="1" height="1" fill="#d4be8a"/><rect x="93" y="3" width="1" height="1" fill="#d4be8a"/><rect x="93" y="50" width="1" height="1" fill="#d4be8a"/><rect x="99" y="24" width="1" height="1" fill="#d4be8a"/><rect x="94" y="49" width="1" height="1" fill="#d4be8a"/><rect x="39" y="22" width="1" height="1" fill="#d4be8a"/><rect x="45" y="11" width="1" height="1" fill="#d4be8a"/><rect x="116" y="36" width="1" height="1" fill="#d4be8a"/><rect x="5" y="28" width="1" height="1" fill="#d4be8a"/><rect x="132" y="7" width="1" height="1" fill="#d4be8a"/><rect x="40" y="37" width="1" height="1" fill="#d4be8a"/><rect x="5" y="54" width="1" height="1" fill="#d4be8a"/><rect x="16" y="39" width="1" height="1" fill="#d4be8a"/><rect x="21" y="42" width="1" height="1" fill="#d4be8a"/><rect x="20" y="35" width="1" height="1" fill="#d4be8a"/><rect x="26" y="40" width="1" height="1" fill="#d4be8a"/><rect x="21" y="3" width="1" height="1" fill="#d4be8a"/><rect x="36" y="12" width="1" height="1" fill="#d4be8a"/><rect x="108" y="31" width="1" height="1" fill="#d4be8a"/><rect x="56" y="62" width="1" height="1" fill="#d4be8a"/><rect x="133" y="43" width="1" height="1" fill="#d4be8a"/><rect x="117" y="50" width="1" height="1" fill="#d4be8a"/><rect x="89" y="43" width="1" height="1" fill="#d4be8a"/><rect x="85" y="17" width="1" height="1" fill="#d4be8a"/><rect x="126" y="62" width="1" height="1" fill="#d4be8a"/><rect x="18" y="5" width="1" height="1" fill="#d4be8a"/><rect x="105" y="44" width="1" height="1" fill="#d4be8a"/><rect x="0" y="48" width="1" height="1" fill="#d4be8a"/><rect x="22" y="59" width="1" height="1" fill="#d4be8a"/><rect x="6" y="46" width="1" height="1" fill="#d4be8a"/><rect x="2" y="14" width="1" height="1" fill="#d4be8a"/><rect x="107" y="53" width="1" height="1" fill="#d4be8a"/><rect x="37" y="31" width="1" height="1" fill="#d4be8a"/><rect x="41" y="48" width="1" height="1" fill="#d4be8a"/><rect x="42" y="41" width="1" height="1" fill="#d4be8a"/><rect x="52" y="49" width="1" height="1" fill="#d4be8a"/><rect x="108" y="37" width="1" height="1" fill="#d4be8a"/><rect x="70" y="7" width="1" height="1" fill="#d4be8a"/><rect x="120" y="39" width="1" height="1" fill="#d4be8a"/><rect x="29" y="38" width="1" height="1" fill="#d4be8a"/><rect x="39" y="22" width="1" height="1" fill="#d4be8a"/><rect x="15" y="58" width="1" height="1" fill="#d4be8a"/><rect x="4" y="61" width="1" height="1" fill="#d4be8a"/><rect x="9" y="40" width="1" height="1" fill="#d4be8a"/><rect x="27" y="25" width="1" height="1" fill="#d4be8a"/><rect x="47" y="45" width="1" height="1" fill="#d4be8a"/><rect x="55" y="30" width="1" height="1" fill="#d4be8a"/><rect x="120" y="65" width="1" height="1" fill="#d4be8a"/><rect x="57" y="56" width="1" height="1" fill="#d4be8a"/><rect x="47" y="35" width="1" height="1" fill="#d4be8a"/><rect x="103" y="22" width="1" height="1" fill="#d4be8a"/><rect x="79" y="61" width="1" height="1" fill="#d4be8a"/><rect x="66" y="62" width="1" height="1" fill="#d4be8a"/><rect x="103" y="43" width="1" height="1" fill="#d4be8a"/><rect x="23" y="61" width="1" height="1" fill="#d4be8a"/><rect x="56" y="51" width="1" height="1" fill="#d4be8a"/><rect x="12" y="27" width="1" height="1" fill="#d4be8a"/><rect x="34" y="49" width="1" height="1" fill="#d4be8a"/><rect x="132" y="35" width="1" height="1" fill="#d4be8a"/><rect x="14" y="30" width="1" height="1" fill="#d4be8a"/><rect x="2" y="60" width="1" height="1" fill="#d4be8a"/><rect x="95" y="57" width="1" height="1" fill="#d4be8a"/><rect x="63" y="53" width="1" height="1" fill="#d4be8a"/><rect x="40" y="53" width="1" height="1" fill="#d4be8a"/><rect x="40" y="41" width="1" height="1" fill="#d4be8a"/><rect x="37" y="33" width="1" height="1" fill="#d4be8a"/><rect x="132" y="16" width="1" height="1" fill="#d4be8a"/><rect x="68" y="6" width="1" height="1" fill="#d4be8a"/><rect x="38" y="22" width="1" height="1" fill="#d4be8a"/><rect x="0" y="26" width="1" height="1" fill="#d4be8a"/><rect x="38" y="16" width="1" height="1" fill="#d4be8a"/><rect x="21" y="45" width="1" height="1" fill="#d4be8a"/><rect x="69" y="12" width="1" height="1" fill="#d4be8a"/><rect x="122" y="59" width="1" height="1" fill="#d4be8a"/><rect x="21" y="64" width="1" height="1" fill="#d4be8a"/><rect x="77" y="2" width="1" height="1" fill="#d4be8a"/><rect x="48" y="53" width="1" height="1" fill="#d4be8a"/><rect x="49" y="11" width="1" height="1" fill="#d4be8a"/><rect x="112" y="26" width="1" height="1" fill="#d4be8a"/><rect x="9" y="52" width="1" height="1" fill="#d4be8a"/><rect x="126" y="20" width="1" height="1" fill="#d4be8a"/><rect x="79" y="40" width="1" height="1" fill="#d4be8a"/><rect x="79" y="51" width="1" height="1" fill="#d4be8a"/><rect x="19" y="39" width="1" height="1" fill="#d4be8a"/><rect x="119" y="8" width="1" height="1" fill="#d4be8a"/><rect x="92" y="9" width="1" height="1" fill="#d4be8a"/><rect x="35" y="13" width="1" height="1" fill="#d4be8a"/><rect x="100" y="59" width="1" height="1" fill="#d4be8a"/><rect x="31" y="56" width="1" height="1" fill="#d4be8a"/><rect x="3" y="48" width="1" height="1" fill="#d4be8a"/><rect x="121" y="30" width="1" height="1" fill="#d4be8a"/><rect x="75" y="14" width="1" height="1" fill="#d4be8a"/><rect x="117" y="1" width="1" height="1" fill="#d4be8a"/><rect x="52" y="19" width="1" height="1" fill="#d4be8a"/><rect x="74" y="48" width="1" height="1" fill="#d4be8a"/><rect x="76" y="43" width="1" height="1" fill="#d4be8a"/><rect x="100" y="11" width="1" height="1" fill="#d4be8a"/><rect x="65" y="24" width="1" height="1" fill="#d4be8a"/><rect x="51" y="48" width="1" height="1" fill="#d4be8a"/><rect x="28" y="42" width="1" height="1" fill="#d4be8a"/><rect x="79" y="35" width="1" height="1" fill="#d4be8a"/><rect x="120" y="42" width="1" height="1" fill="#d4be8a"/><rect x="114" y="48" width="1" height="1" fill="#d4be8a"/><rect x="23" y="13" width="1" height="1" fill="#d4be8a"/><rect x="36" y="12" width="1" height="1" fill="#d4be8a"/><rect x="33" y="22" width="1" height="1" fill="#d4be8a"/><rect x="46" y="24" width="1" height="1" fill="#d4be8a"/><rect x="102" y="4" width="1" height="1" fill="#d4be8a"/><rect x="118" y="11" width="1" height="1" fill="#d4be8a"/><rect x="25" y="29" width="1" height="1" fill="#d4be8a"/><rect x="8" y="20" width="1" height="1" fill="#d4be8a"/><rect x="31" y="55" width="1" height="1" fill="#d4be8a"/><rect x="104" y="9" width="1" height="1" fill="#d4be8a"/><rect x="87" y="54" width="1" height="1" fill="#d4be8a"/><rect x="130" y="17" width="1" height="1" fill="#d4be8a"/><rect x="52" y="18" width="1" height="1" fill="#d4be8a"/><rect x="98" y="61" width="1" height="1" fill="#d4be8a"/><rect x="84" y="52" width="1" height="1" fill="#d4be8a"/><rect x="3" y="51" width="1" height="1" fill="#d4be8a"/><rect x="81" y="31" width="1" height="1" fill="#d4be8a"/><rect x="4" y="33" width="1" height="1" fill="#d4be8a"/><rect x="84" y="24" width="1" height="1" fill="#d4be8a"/><rect x="87" y="39" width="1" height="1" fill="#d4be8a"/><rect x="112" y="13" width="1" height="1" fill="#d4be8a"/><rect x="96" y="26" width="1" height="1" fill="#d4be8a"/><rect x="130" y="42" width="1" height="1" fill="#d4be8a"/><rect x="75" y="13" width="1" height="1" fill="#d4be8a"/><rect x="40" y="32" width="1" height="1" fill="#d4be8a"/><rect x="76" y="29" width="1" height="1" fill="#d4be8a"/><rect x="90" y="64" width="1" height="1" fill="#d4be8a"/><rect x="131" y="18" width="1" height="1" fill="#d4be8a"/><rect x="50" y="25" width="1" height="1" fill="#d4be8a"/><rect x="6" y="25" width="1" height="1" fill="#d4be8a"/><rect x="21" y="17" width="1" height="1" fill="#d4be8a"/><rect x="62" y="61" width="1" height="1" fill="#d4be8a"/><rect x="106" y="42" width="1" height="1" fill="#d4be8a"/><rect x="84" y="11" width="1" height="1" fill="#d4be8a"/><rect x="92" y="34" width="1" height="1" fill="#d4be8a"/><rect x="118" y="15" width="1" height="1" fill="#d4be8a"/><rect x="115" y="17" width="1" height="1" fill="#d4be8a"/><rect x="61" y="8" width="1" height="1" fill="#d4be8a"/><rect x="67" y="21" width="1" height="1" fill="#d4be8a"/><rect x="85" y="18" width="1" height="1" fill="#d4be8a"/><rect x="31" y="0" width="1" height="1" fill="#d4be8a"/><rect x="73" y="46" width="1" height="1" fill="#d4be8a"/><rect x="61" y="46" width="1" height="1" fill="#d4be8a"/><rect x="42" y="23" width="1" height="1" fill="#d4be8a"/><rect x="19" y="58" width="1" height="1" fill="#d4be8a"/><rect x="8" y="51" width="1" height="1" fill="#d4be8a"/><rect x="46" y="17" width="1" height="1" fill="#d4be8a"/><rect x="78" y="48" width="1" height="1" fill="#d4be8a"/><rect x="4" y="20" width="1" height="1" fill="#d4be8a"/><rect x="51" y="52" width="1" height="1" fill="#d4be8a"/><rect x="119" y="4" width="1" height="1" fill="#d4be8a"/><rect x="36" y="49" width="1" height="1" fill="#d4be8a"/><rect x="30" y="51" width="1" height="1" fill="#d4be8a"/><rect x="44" y="43" width="1" height="1" fill="#d4be8a"/><rect x="133" y="16" width="1" height="1" fill="#d4be8a"/><rect x="67" y="31" width="1" height="1" fill="#d4be8a"/><rect x="85" y="6" width="1" height="1" fill="#d4be8a"/><rect x="9" y="18" width="1" height="1" fill="#d4be8a"/><rect x="103" y="63" width="1" height="1" fill="#d4be8a"/><rect x="26" y="60" width="1" height="1" fill="#d4be8a"/><rect x="88" y="52" width="1" height="1" fill="#d4be8a"/><rect x="104" y="36" width="1" height="1" fill="#d4be8a"/><rect x="124" y="59" width="1" height="1" fill="#d4be8a"/><rect x="104" y="55" width="1" height="1" fill="#d4be8a"/><rect x="30" y="14" width="1" height="1" fill="#d4be8a"/><rect x="84" y="55" width="1" height="1" fill="#d4be8a"/><rect x="107" y="3" width="1" height="1" fill="#d4be8a"/><rect x="82" y="6" width="1" height="1" fill="#d4be8a"/><rect x="75" y="55" width="1" height="1" fill="#d4be8a"/><rect x="96" y="41" width="1" height="1" fill="#d4be8a"/><rect x="78" y="8" width="1" height="1" fill="#d4be8a"/><rect x="62" y="15" width="1" height="1" fill="#d4be8a"/><rect x="114" y="31" width="1" height="1" fill="#d4be8a"/><rect x="128" y="50" width="1" height="1" fill="#d4be8a"/><rect x="13" y="60" width="1" height="1" fill="#d4be8a"/><rect x="26" y="30" width="1" height="1" fill="#d4be8a"/><rect x="78" y="50" width="1" height="1" fill="#d4be8a"/><rect x="60" y="8" width="1" height="1" fill="#d4be8a"/><rect x="94" y="53" width="1" height="1" fill="#d4be8a"/><rect x="42" y="28" width="1" height="1" fill="#d4be8a"/><rect x="107" y="15" width="1" height="1" fill="#d4be8a"/><rect x="18" y="12" width="1" height="1" fill="#d4be8a"/><rect x="133" y="16" width="1" height="1" fill="#d4be8a"/><rect x="31" y="58" width="1" height="1" fill="#d4be8a"/><rect x="0" y="37" width="1" height="1" fill="#d4be8a"/><rect x="62" y="38" width="1" height="1" fill="#d4be8a"/><rect x="6" y="41" width="1" height="1" fill="#d4be8a"/><rect x="44" y="8" width="1" height="1" fill="#d4be8a"/><rect x="112" y="57" width="1" height="1" fill="#d4be8a"/><rect x="101" y="18" width="1" height="1" fill="#d4be8a"/><rect x="91" y="29" width="1" height="1" fill="#d4be8a"/><rect x="11" y="39" width="1" height="1" fill="#d4be8a"/><rect x="7" y="58" width="1" height="1" fill="#d4be8a"/><rect x="80" y="39" width="1" height="1" fill="#d4be8a"/><rect x="83" y="63" width="1" height="1" fill="#d4be8a"/><rect x="36" y="60" width="1" height="1" fill="#d4be8a"/><rect x="52" y="25" width="1" height="1" fill="#d4be8a"/><rect x="75" y="7" width="1" height="1" fill="#d4be8a"/><rect x="50" y="40" width="1" height="1" fill="#d4be8a"/><rect x="90" y="60" width="1" height="1" fill="#d4be8a"/><rect x="4" y="22" width="1" height="1" fill="#d4be8a"/><rect x="51" y="30" width="1" height="1" fill="#d4be8a"/><rect x="49" y="6" width="1" height="1" fill="#d4be8a"/><rect x="27" y="39" width="1" height="1" fill="#d4be8a"/><rect x="80" y="35" width="1" height="1" fill="#d4be8a"/><rect x="107" y="17" width="1" height="1" fill="#d4be8a"/><rect x="85" y="56" width="1" height="1" fill="#d4be8a"/><rect x="106" y="10" width="1" height="1" fill="#d4be8a"/><rect x="43" y="28" width="1" height="1" fill="#d4be8a"/><rect x="78" y="15" width="1" height="1" fill="#d4be8a"/><rect x="50" y="34" width="1" height="1" fill="#d4be8a"/><rect x="46" y="30" width="1" height="1" fill="#d4be8a"/><rect x="128" y="37" width="1" height="1" fill="#d4be8a"/><rect x="69" y="47" width="1" height="1" fill="#d4be8a"/><rect x="29" y="29" width="1" height="1" fill="#d4be8a"/><rect x="77" y="23" width="1" height="1" fill="#d4be8a"/><rect x="57" y="35" width="1" height="1" fill="#d4be8a"/><rect x="33" y="11" width="1" height="1" fill="#d4be8a"/><rect x="118" y="9" width="1" height="1" fill="#d4be8a"/><rect x="112" y="9" width="1" height="1" fill="#d4be8a"/><rect x="11" y="0" width="1" height="1" fill="#d4be8a"/><rect x="72" y="32" width="1" height="1" fill="#d4be8a"/><rect x="108" y="11" width="1" height="1" fill="#d4be8a"/><rect x="42" y="36" width="1" height="1" fill="#d4be8a"/><rect x="48" y="31" width="1" height="1" fill="#d4be8a"/><rect x="45" y="35" width="1" height="1" fill="#d4be8a"/><rect x="7" y="23" width="1" height="1" fill="#d4be8a"/><rect x="38" y="4" width="1" height="1" fill="#d4be8a"/><rect x="118" y="49" width="1" height="1" fill="#d4be8a"/><rect x="0" y="63" width="1" height="1" fill="#d4be8a"/><rect x="15" y="23" width="1" height="1" fill="#d4be8a"/><rect x="16" y="46" width="1" height="1" fill="#d4be8a"/><rect x="82" y="61" width="1" height="1" fill="#d4be8a"/><rect x="8" y="37" width="1" height="1" fill="#d4be8a"/><rect x="129" y="22" width="1" height="1" fill="#d4be8a"/><rect x="42" y="14" width="1" height="1" fill="#d4be8a"/><rect x="111" y="30" width="1" height="1" fill="#d4be8a"/><rect x="112" y="32" width="1" height="1" fill="#d4be8a"/><rect x="60" y="33" width="1" height="1" fill="#d4be8a"/><rect x="125" y="28" width="1" height="1" fill="#d4be8a"/><rect x="127" y="33" width="1" height="1" fill="#d4be8a"/><rect x="9" y="25" width="1" height="1" fill="#d4be8a"/><rect x="13" y="57" width="1" height="1" fill="#d4be8a"/><rect x="46" y="41" width="1" height="1" fill="#d4be8a"/><rect x="38" y="2" width="1" height="1" fill="#d4be8a"/><rect x="127" y="55" width="1" height="1" fill="#d4be8a"/><rect x="128" y="56" width="1" height="1" fill="#d4be8a"/><rect x="67" y="3" width="1" height="1" fill="#d4be8a"/><rect x="18" y="14" width="1" height="1" fill="#d4be8a"/><rect x="45" y="30" width="1" height="1" fill="#d4be8a"/><rect x="37" y="6" width="1" height="1" fill="#d4be8a"/><rect x="79" y="54" width="1" height="1" fill="#d4be8a"/><rect x="10" y="40" width="1" height="1" fill="#d4be8a"/><rect x="67" y="63" width="1" height="1" fill="#d4be8a"/><rect x="22" y="65" width="1" height="1" fill="#d4be8a"/><rect x="43" y="48" width="1" height="1" fill="#d4be8a"/><rect x="65" y="31" width="1" height="1" fill="#d4be8a"/><rect x="40" y="63" width="1" height="1" fill="#d4be8a"/><rect x="116" y="7" width="1" height="1" fill="#d4be8a"/><rect x="80" y="52" width="1" height="1" fill="#d4be8a"/><rect x="119" y="46" width="1" height="1" fill="#d4be8a"/><rect x="55" y="5" width="1" height="1" fill="#d4be8a"/><rect x="32" y="62" width="1" height="1" fill="#d4be8a"/><rect x="34" y="18" width="1" height="1" fill="#d4be8a"/><rect x="116" y="5" width="1" height="1" fill="#d4be8a"/><rect x="0" y="30" width="1" height="1" fill="#d4be8a"/><rect x="104" y="18" width="1" height="1" fill="#d4be8a"/><rect x="23" y="50" width="1" height="1" fill="#d4be8a"/><rect x="76" y="60" width="1" height="1" fill="#d4be8a"/><rect x="108" y="9" width="1" height="1" fill="#d4be8a"/><rect x="8" y="29" width="1" height="1" fill="#d4be8a"/><rect x="75" y="32" width="1" height="1" fill="#d4be8a"/><rect x="30" y="30" width="1" height="1" fill="#d4be8a"/><rect x="107" y="59" width="1" height="1" fill="#d4be8a"/><rect x="108" y="60" width="1" height="1" fill="#d4be8a"/><rect x="58" y="46" width="1" height="1" fill="#d4be8a"/><rect x="59" y="47" width="1" height="1" fill="#d4be8a"/><rect x="60" y="48" width="1" height="1" fill="#d4be8a"/><rect x="86" y="27" width="1" height="1" fill="#d4be8a"/><rect x="87" y="28" width="1" height="1" fill="#d4be8a"/><rect x="41" y="51" width="1" height="1" fill="#d4be8a"/><rect x="42" y="52" width="1" height="1" fill="#d4be8a"/><rect x="43" y="53" width="1" height="1" fill="#d4be8a"/><rect x="44" y="54" width="1" height="1" fill="#d4be8a"/><rect x="14" y="43" width="1" height="1" fill="#d4be8a"/><rect x="15" y="44" width="1" height="1" fill="#d4be8a"/><rect x="16" y="45" width="1" height="1" fill="#d4be8a"/><rect x="17" y="46" width="1" height="1" fill="#d4be8a"/><rect x="45" y="59" width="1" height="1" fill="#d4be8a"/><rect x="46" y="60" width="1" height="1" fill="#d4be8a"/><rect x="47" y="61" width="1" height="1" fill="#d4be8a"/><rect x="54" y="48" width="1" height="1" fill="#d4be8a"/><rect x="55" y="49" width="1" height="1" fill="#d4be8a"/><rect x="56" y="50" width="1" height="1" fill="#d4be8a"/><rect x="12" y="27" width="1" height="1" fill="#d4be8a"/><rect x="13" y="28" width="1" height="1" fill="#d4be8a"/><rect x="14" y="29" width="1" height="1" fill="#d4be8a"/><rect x="88" y="31" width="1" height="1" fill="#d4be8a"/><rect x="89" y="32" width="1" height="1" fill="#d4be8a"/><rect x="41" y="61" width="1" height="1" fill="#d4be8a"/><rect x="42" y="62" width="1" height="1" fill="#d4be8a"/><rect x="102" y="27" width="1" height="1" fill="#d4be8a"/><rect x="103" y="28" width="1" height="1" fill="#d4be8a"/><rect x="104" y="29" width="1" height="1" fill="#d4be8a"/><rect x="105" y="30" width="1" height="1" fill="#d4be8a"/><rect x="119" y="39" width="1" height="1" fill="#d4be8a"/><rect x="120" y="40" width="1" height="1" fill="#d4be8a"/><rect x="121" y="41" width="1" height="1" fill="#d4be8a"/><rect x="114" y="62" width="1" height="1" fill="#d4be8a"/><rect x="115" y="63" width="1" height="1" fill="#d4be8a"/><rect x="116" y="64" width="1" height="1" fill="#d4be8a"/><rect x="117" y="65" width="1" height="1" fill="#d4be8a"/><rect x="46" y="62" width="1" height="1" fill="#d4be8a"/><rect x="47" y="63" width="1" height="1" fill="#d4be8a"/><rect x="98" y="53" width="1" height="1" fill="#d4be8a"/><rect x="99" y="54" width="1" height="1" fill="#d4be8a"/><rect x="12" y="35" width="1" height="1" fill="#d4be8a"/><rect x="13" y="36" width="1" height="1" fill="#d4be8a"/><rect x="14" y="37" width="1" height="1" fill="#d4be8a"/><rect x="70" y="2" width="1" height="1" fill="#d4be8a"/><rect x="71" y="3" width="1" height="1" fill="#d4be8a"/><rect x="72" y="4" width="1" height="1" fill="#d4be8a"/><rect x="73" y="5" width="1" height="1" fill="#d4be8a"/><rect x="46" y="33" width="1" height="1" fill="#d4be8a"/><rect x="47" y="34" width="1" height="1" fill="#d4be8a"/><rect x="48" y="35" width="1" height="1" fill="#d4be8a"/><rect x="49" y="36" width="1" height="1" fill="#d4be8a"/><rect x="100" y="27" width="1" height="1" fill="#d4be8a"/><rect x="101" y="28" width="1" height="1" fill="#d4be8a"/><rect x="102" y="29" width="1" height="1" fill="#d4be8a"/><rect x="26" y="46" width="1" height="1" fill="#d4be8a"/><rect x="27" y="47" width="1" height="1" fill="#d4be8a"/><rect x="39" y="46" width="1" height="1" fill="#d4be8a"/><rect x="40" y="47" width="1" height="1" fill="#d4be8a"/><rect x="61" y="15" width="1" height="1" fill="#d4be8a"/><rect x="62" y="16" width="1" height="1" fill="#d4be8a"/><rect x="82" y="49" width="1" height="1" fill="#d4be8a"/><rect x="83" y="50" width="1" height="1" fill="#d4be8a"/><rect x="84" y="51" width="1" height="1" fill="#d4be8a"/><rect x="21" y="48" width="1" height="1" fill="#d4be8a"/><rect x="22" y="49" width="1" height="1" fill="#d4be8a"/><rect x="23" y="50" width="1" height="1" fill="#d4be8a"/><rect x="65" y="7" width="1" height="1" fill="#d4be8a"/><rect x="66" y="8" width="1" height="1" fill="#d4be8a"/><rect x="67" y="9" width="1" height="1" fill="#d4be8a"/><rect x="100" y="30" width="1" height="1" fill="#d4be8a"/><rect x="101" y="31" width="1" height="1" fill="#d4be8a"/><rect x="102" y="32" width="1" height="1" fill="#d4be8a"/><rect x="10" y="24" width="1" height="1" fill="#d4be8a"/><rect x="11" y="25" width="1" height="1" fill="#d4be8a"/><rect x="131" y="16" width="1" height="1" fill="#d4be8a"/><rect x="132" y="17" width="1" height="1" fill="#d4be8a"/><rect x="53" y="39" width="1" height="1" fill="#d4be8a"/><rect x="54" y="40" width="1" height="1" fill="#d4be8a"/><rect x="55" y="41" width="1" height="1" fill="#d4be8a"/><rect x="108" y="61" width="1" height="1" fill="#d4be8a"/><rect x="109" y="62" width="1" height="1" fill="#d4be8a"/><rect x="110" y="63" width="1" height="1" fill="#d4be8a"/><rect x="111" y="64" width="1" height="1" fill="#d4be8a"/><rect x="34" y="33" width="1" height="1" fill="#d4be8a"/><rect x="35" y="34" width="1" height="1" fill="#d4be8a"/><rect x="36" y="35" width="1" height="1" fill="#d4be8a"/><rect x="115" y="48" width="1" height="1" fill="#d4be8a"/><rect x="116" y="49" width="1" height="1" fill="#d4be8a"/><rect x="52" y="35" width="1" height="1" fill="#d4be8a"/><rect x="53" y="36" width="1" height="1" fill="#d4be8a"/><rect x="54" y="37" width="1" height="1" fill="#d4be8a"/><rect x="55" y="38" width="1" height="1" fill="#d4be8a"/><rect x="115" y="51" width="1" height="1" fill="#d4be8a"/><rect x="116" y="52" width="1" height="1" fill="#d4be8a"/><rect x="98" y="45" width="1" height="1" fill="#d4be8a"/><rect x="99" y="46" width="1" height="1" fill="#d4be8a"/><rect x="26" y="37" width="1" height="1" fill="#d4be8a"/><rect x="27" y="38" width="1" height="1" fill="#d4be8a"/><rect x="28" y="39" width="1" height="1" fill="#d4be8a"/><rect x="88" y="27" width="1" height="1" fill="#d4be8a"/><rect x="89" y="28" width="1" height="1" fill="#d4be8a"/><rect x="10" y="3" width="1" height="1" fill="#d4be8a"/><rect x="11" y="4" width="1" height="1" fill="#d4be8a"/><rect x="12" y="5" width="1" height="1" fill="#d4be8a"/><rect x="13" y="6" width="1" height="1" fill="#d4be8a"/><rect x="123" y="1" width="1" height="1" fill="#d4be8a"/><rect x="124" y="2" width="1" height="1" fill="#d4be8a"/><rect x="125" y="3" width="1" height="1" fill="#d4be8a"/><rect x="126" y="4" width="1" height="1" fill="#d4be8a"/><rect x="76" y="8" width="1" height="1" fill="#d4be8a"/><rect x="77" y="9" width="1" height="1" fill="#d4be8a"/></svg><div style="position:absolute;left:118px;top:210px;width:136px;height:7.5px;background:#dcd693;border-radius:2px 2px 0 0"></div><div style="position:absolute;left:120.5px;top:213.3px;width:4px;height:1px;background:#3a3a2a;"></div><div class="t" style="left:127px;top:211.2px;font-size:5.6px;color:#5a5440;transform:scaleX(0.84);transform-origin:0 0">Sand_debris</div><div style="position:absolute;left:118px;top:286.7px;width:136.2px;height:74px;background:#6b7b74;border-radius:2px"></div><div style="position:absolute;left:163px;top:289.3px;width:7px;height:0.9px;background:#94a49c;"></div><div style="position:absolute;left:173px;top:289.3px;width:5px;height:0.9px;background:#94a49c;"></div><div style="position:absolute;left:182px;top:289.3px;width:5px;height:0.9px;background:#94a49c;"></div><div style="position:absolute;left:225px;top:289.3px;width:5px;height:0.9px;background:#94a49c;"></div><div style="position:absolute;left:234px;top:289.3px;width:4px;height:0.9px;background:#94a49c;"></div><div style="position:absolute;left:241px;top:289.3px;width:5px;height:0.9px;background:#94a49c;"></div><div style="position:absolute;left:122px;top:293px;width:1px;height:1px;background:#7e8e86;"></div><div style="position:absolute;left:127px;top:293px;width:1px;height:1px;background:#7e8e86;"></div><div style="position:absolute;left:132px;top:293px;width:1px;height:1px;background:#7e8e86;"></div><div style="position:absolute;left:137px;top:293px;width:1px;height:1px;background:#7e8e86;"></div><div style="position:absolute;left:142px;top:293px;width:1px;height:1px;background:#7e8e86;"></div><div style="position:absolute;left:147px;top:293px;width:1px;height:1px;background:#7e8e86;"></div><div style="position:absolute;left:152px;top:293px;width:1px;height:1px;background:#7e8e86;"></div><div style="position:absolute;left:157px;top:293px;width:1px;height:1px;background:#7e8e86;"></div><div style="position:absolute;left:162px;top:293px;width:1px;height:1px;background:#7e8e86;"></div><div style="position:absolute;left:167px;top:293px;width:1px;height:1px;background:#7e8e86;"></div><div style="position:absolute;left:172px;top:293px;width:1px;height:1px;background:#7e8e86;"></div><div style="position:absolute;left:177px;top:293px;width:1px;height:1px;background:#7e8e86;"></div><div style="position:absolute;left:182px;top:293px;width:1px;height:1px;background:#7e8e86;"></div><div style="position:absolute;left:187px;top:293px;width:1px;height:1px;background:#7e8e86;"></div><div style="position:absolute;left:192px;top:293px;width:1px;height:1px;background:#7e8e86;"></div><div style="position:absolute;left:197px;top:293px;width:1px;height:1px;background:#7e8e86;"></div><div style="position:absolute;left:202px;top:293px;width:1px;height:1px;background:#7e8e86;"></div><div style="position:absolute;left:207px;top:293px;width:1px;height:1px;background:#7e8e86;"></div><div style="position:absolute;left:212px;top:293px;width:1px;height:1px;background:#7e8e86;"></div><div style="position:absolute;left:217px;top:293px;width:1px;height:1px;background:#7e8e86;"></div><div style="position:absolute;left:222px;top:293px;width:1px;height:1px;background:#7e8e86;"></div><div style="position:absolute;left:227px;top:293px;width:1px;height:1px;background:#7e8e86;"></div><div style="position:absolute;left:232px;top:293px;width:1px;height:1px;background:#7e8e86;"></div><div style="position:absolute;left:237px;top:293px;width:1px;height:1px;background:#7e8e86;"></div><div style="position:absolute;left:242px;top:293px;width:1px;height:1px;background:#7e8e86;"></div><div style="position:absolute;left:247px;top:293px;width:1px;height:1px;background:#7e8e86;"></div><div class="t" style="left:127px;top:287.9px;font-size:5.6px;color:#2f3a36;transform:scaleX(0.84);transform-origin:0 0">Rocky_ground</div><div style="position:absolute;left:120.5px;top:290px;width:4px;height:1px;background:#2f3a36;"></div><div style="position:absolute;left:118px;top:363px;width:136.2px;height:91px;background:#aca029;border-radius:2px;"></div><div style="position:absolute;left:118px;top:363px;width:136.2px;height:8px;background:#e2da0a;border-radius:2px 2px 0 0"></div><div style="position:absolute;left:120.5px;top:366.3px;width:4px;height:1px;background:#4a3e14;"></div><div class="t" style="left:127px;top:364.2px;font-size:5.6px;color:#4a3e14;transform:scaleX(0.84);transform-origin:0 0">Gravel_Dry_Ground_shd</div><div style="position:absolute;left:118px;top:454px;width:136px;height:87px;background:#83692a;border-radius:0 0 2px 2px"></div><svg style="position:absolute;left:118px;top:453.5px" width="136" height="7" shape-rendering="crispEdges"><rect width="136" height="7" fill="#aa9c2a"/><rect x="0" y="0" width="1" height="1" fill="#84692a"/><rect x="0" y="3" width="1" height="1" fill="#84692a"/><rect x="0" y="5" width="1" height="1" fill="#84692a"/><rect x="0" y="6" width="1" height="1" fill="#84692a"/><rect x="1" y="0" width="1" height="1" fill="#84692a"/><rect x="1" y="3" width="1" height="1" fill="#84692a"/><rect x="1" y="5" width="1" height="1" fill="#84692a"/><rect x="1" y="6" width="1" height="1" fill="#84692a"/><rect x="2" y="1" width="1" height="1" fill="#84692a"/><rect x="2" y="4" width="1" height="1" fill="#84692a"/><rect x="2" y="5" width="1" height="1" fill="#84692a"/><rect x="3" y="2" width="1" height="1" fill="#84692a"/><rect x="3" y="5" width="1" height="1" fill="#84692a"/><rect x="4" y="0" width="1" height="1" fill="#84692a"/><rect x="4" y="3" width="1" height="1" fill="#84692a"/><rect x="4" y="5" width="1" height="1" fill="#84692a"/><rect x="4" y="6" width="1" height="1" fill="#84692a"/><rect x="5" y="0" width="1" height="1" fill="#84692a"/><rect x="5" y="3" width="1" height="1" fill="#84692a"/><rect x="5" y="5" width="1" height="1" fill="#84692a"/><rect x="5" y="6" width="1" height="1" fill="#84692a"/><rect x="6" y="1" width="1" height="1" fill="#84692a"/><rect x="6" y="4" width="1" height="1" fill="#84692a"/><rect x="6" y="6" width="1" height="1" fill="#84692a"/><rect x="7" y="2" width="1" height="1" fill="#84692a"/><rect x="7" y="5" width="1" height="1" fill="#84692a"/><rect x="7" y="6" width="1" height="1" fill="#84692a"/><rect x="8" y="0" width="1" height="1" fill="#84692a"/><rect x="8" y="3" width="1" height="1" fill="#84692a"/><rect x="8" y="6" width="1" height="1" fill="#84692a"/><rect x="9" y="0" width="1" height="1" fill="#84692a"/><rect x="9" y="3" width="1" height="1" fill="#84692a"/><rect x="9" y="5" width="1" height="1" fill="#84692a"/><rect x="9" y="6" width="1" height="1" fill="#84692a"/><rect x="10" y="1" width="1" height="1" fill="#84692a"/><rect x="10" y="4" width="1" height="1" fill="#84692a"/><rect x="10" y="6" width="1" height="1" fill="#84692a"/><rect x="11" y="2" width="1" height="1" fill="#84692a"/><rect x="11" y="5" width="1" height="1" fill="#84692a"/><rect x="12" y="0" width="1" height="1" fill="#84692a"/><rect x="12" y="3" width="1" height="1" fill="#84692a"/><rect x="12" y="5" width="1" height="1" fill="#84692a"/><rect x="12" y="6" width="1" height="1" fill="#84692a"/><rect x="13" y="0" width="1" height="1" fill="#84692a"/><rect x="13" y="3" width="1" height="1" fill="#84692a"/><rect x="13" y="6" width="1" height="1" fill="#84692a"/><rect x="14" y="1" width="1" height="1" fill="#84692a"/><rect x="14" y="4" width="1" height="1" fill="#84692a"/><rect x="14" y="6" width="1" height="1" fill="#84692a"/><rect x="15" y="2" width="1" height="1" fill="#84692a"/><rect x="15" y="5" width="1" height="1" fill="#84692a"/><rect x="16" y="0" width="1" height="1" fill="#84692a"/><rect x="16" y="3" width="1" height="1" fill="#84692a"/><rect x="16" y="6" width="1" height="1" fill="#84692a"/><rect x="17" y="0" width="1" height="1" fill="#84692a"/><rect x="17" y="3" width="1" height="1" fill="#84692a"/><rect x="17" y="5" width="1" height="1" fill="#84692a"/><rect x="17" y="6" width="1" height="1" fill="#84692a"/><rect x="18" y="1" width="1" height="1" fill="#84692a"/><rect x="18" y="4" width="1" height="1" fill="#84692a"/><rect x="18" y="6" width="1" height="1" fill="#84692a"/><rect x="19" y="2" width="1" height="1" fill="#84692a"/><rect x="19" y="5" width="1" height="1" fill="#84692a"/><rect x="19" y="6" width="1" height="1" fill="#84692a"/><rect x="20" y="0" width="1" height="1" fill="#84692a"/><rect x="20" y="3" width="1" height="1" fill="#84692a"/><rect x="20" y="5" width="1" height="1" fill="#84692a"/><rect x="20" y="6" width="1" height="1" fill="#84692a"/><rect x="21" y="0" width="1" height="1" fill="#84692a"/><rect x="21" y="3" width="1" height="1" fill="#84692a"/><rect x="21" y="6" width="1" height="1" fill="#84692a"/><rect x="22" y="1" width="1" height="1" fill="#84692a"/><rect x="22" y="4" width="1" height="1" fill="#84692a"/><rect x="22" y="5" width="1" height="1" fill="#84692a"/><rect x="23" y="2" width="1" height="1" fill="#84692a"/><rect x="23" y="5" width="1" height="1" fill="#84692a"/><rect x="24" y="0" width="1" height="1" fill="#84692a"/><rect x="24" y="3" width="1" height="1" fill="#84692a"/><rect x="24" y="6" width="1" height="1" fill="#84692a"/><rect x="25" y="0" width="1" height="1" fill="#84692a"/><rect x="25" y="3" width="1" height="1" fill="#84692a"/><rect x="25" y="6" width="1" height="1" fill="#84692a"/><rect x="26" y="1" width="1" height="1" fill="#84692a"/><rect x="26" y="4" width="1" height="1" fill="#84692a"/><rect x="26" y="5" width="1" height="1" fill="#84692a"/><rect x="27" y="2" width="1" height="1" fill="#84692a"/><rect x="27" y="5" width="1" height="1" fill="#84692a"/><rect x="27" y="6" width="1" height="1" fill="#84692a"/><rect x="28" y="0" width="1" height="1" fill="#84692a"/><rect x="28" y="3" width="1" height="1" fill="#84692a"/><rect x="28" y="6" width="1" height="1" fill="#84692a"/><rect x="29" y="0" width="1" height="1" fill="#84692a"/><rect x="29" y="3" width="1" height="1" fill="#84692a"/><rect x="29" y="6" width="1" height="1" fill="#84692a"/><rect x="30" y="1" width="1" height="1" fill="#84692a"/><rect x="30" y="4" width="1" height="1" fill="#84692a"/><rect x="30" y="5" width="1" height="1" fill="#84692a"/><rect x="30" y="6" width="1" height="1" fill="#84692a"/><rect x="31" y="2" width="1" height="1" fill="#84692a"/><rect x="31" y="5" width="1" height="1" fill="#84692a"/><rect x="31" y="6" width="1" height="1" fill="#84692a"/><rect x="32" y="0" width="1" height="1" fill="#84692a"/><rect x="32" y="3" width="1" height="1" fill="#84692a"/><rect x="32" y="6" width="1" height="1" fill="#84692a"/><rect x="33" y="0" width="1" height="1" fill="#84692a"/><rect x="33" y="3" width="1" height="1" fill="#84692a"/><rect x="33" y="5" width="1" height="1" fill="#84692a"/><rect x="33" y="6" width="1" height="1" fill="#84692a"/><rect x="34" y="1" width="1" height="1" fill="#84692a"/><rect x="34" y="4" width="1" height="1" fill="#84692a"/><rect x="34" y="6" width="1" height="1" fill="#84692a"/><rect x="35" y="2" width="1" height="1" fill="#84692a"/><rect x="35" y="5" width="1" height="1" fill="#84692a"/><rect x="35" y="6" width="1" height="1" fill="#84692a"/><rect x="36" y="0" width="1" height="1" fill="#84692a"/><rect x="36" y="3" width="1" height="1" fill="#84692a"/><rect x="36" y="5" width="1" height="1" fill="#84692a"/><rect x="36" y="6" width="1" height="1" fill="#84692a"/><rect x="37" y="0" width="1" height="1" fill="#84692a"/><rect x="37" y="3" width="1" height="1" fill="#84692a"/><rect x="37" y="5" width="1" height="1" fill="#84692a"/><rect x="37" y="6" width="1" height="1" fill="#84692a"/><rect x="38" y="1" width="1" height="1" fill="#84692a"/><rect x="38" y="4" width="1" height="1" fill="#84692a"/><rect x="38" y="5" width="1" height="1" fill="#84692a"/><rect x="38" y="6" width="1" height="1" fill="#84692a"/><rect x="39" y="2" width="1" height="1" fill="#84692a"/><rect x="39" y="5" width="1" height="1" fill="#84692a"/><rect x="40" y="0" width="1" height="1" fill="#84692a"/><rect x="40" y="3" width="1" height="1" fill="#84692a"/><rect x="40" y="6" width="1" height="1" fill="#84692a"/><rect x="41" y="0" width="1" height="1" fill="#84692a"/><rect x="41" y="3" width="1" height="1" fill="#84692a"/><rect x="41" y="6" width="1" height="1" fill="#84692a"/><rect x="42" y="1" width="1" height="1" fill="#84692a"/><rect x="42" y="4" width="1" height="1" fill="#84692a"/><rect x="43" y="2" width="1" height="1" fill="#84692a"/><rect x="43" y="5" width="1" height="1" fill="#84692a"/><rect x="44" y="0" width="1" height="1" fill="#84692a"/><rect x="44" y="3" width="1" height="1" fill="#84692a"/><rect x="44" y="5" width="1" height="1" fill="#84692a"/><rect x="44" y="6" width="1" height="1" fill="#84692a"/><rect x="45" y="0" width="1" height="1" fill="#84692a"/><rect x="45" y="3" width="1" height="1" fill="#84692a"/><rect x="45" y="6" width="1" height="1" fill="#84692a"/><rect x="46" y="1" width="1" height="1" fill="#84692a"/><rect x="46" y="4" width="1" height="1" fill="#84692a"/><rect x="47" y="2" width="1" height="1" fill="#84692a"/><rect x="47" y="5" width="1" height="1" fill="#84692a"/><rect x="47" y="6" width="1" height="1" fill="#84692a"/><rect x="48" y="0" width="1" height="1" fill="#84692a"/><rect x="48" y="3" width="1" height="1" fill="#84692a"/><rect x="48" y="6" width="1" height="1" fill="#84692a"/><rect x="49" y="0" width="1" height="1" fill="#84692a"/><rect x="49" y="3" width="1" height="1" fill="#84692a"/><rect x="49" y="5" width="1" height="1" fill="#84692a"/><rect x="49" y="6" width="1" height="1" fill="#84692a"/><rect x="50" y="1" width="1" height="1" fill="#84692a"/><rect x="50" y="4" width="1" height="1" fill="#84692a"/><rect x="50" y="6" width="1" height="1" fill="#84692a"/><rect x="51" y="2" width="1" height="1" fill="#84692a"/><rect x="51" y="5" width="1" height="1" fill="#84692a"/><rect x="51" y="6" width="1" height="1" fill="#84692a"/><rect x="52" y="0" width="1" height="1" fill="#84692a"/><rect x="52" y="3" width="1" height="1" fill="#84692a"/><rect x="52" y="5" width="1" height="1" fill="#84692a"/><rect x="52" y="6" width="1" height="1" fill="#84692a"/><rect x="53" y="0" width="1" height="1" fill="#84692a"/><rect x="53" y="3" width="1" height="1" fill="#84692a"/><rect x="53" y="6" width="1" height="1" fill="#84692a"/><rect x="54" y="1" width="1" height="1" fill="#84692a"/><rect x="54" y="4" width="1" height="1" fill="#84692a"/><rect x="54" y="6" width="1" height="1" fill="#84692a"/><rect x="55" y="2" width="1" height="1" fill="#84692a"/><rect x="55" y="5" width="1" height="1" fill="#84692a"/><rect x="56" y="0" width="1" height="1" fill="#84692a"/><rect x="56" y="3" width="1" height="1" fill="#84692a"/><rect x="56" y="5" width="1" height="1" fill="#84692a"/><rect x="56" y="6" width="1" height="1" fill="#84692a"/><rect x="57" y="0" width="1" height="1" fill="#84692a"/><rect x="57" y="3" width="1" height="1" fill="#84692a"/><rect x="57" y="5" width="1" height="1" fill="#84692a"/><rect x="57" y="6" width="1" height="1" fill="#84692a"/><rect x="58" y="1" width="1" height="1" fill="#84692a"/><rect x="58" y="4" width="1" height="1" fill="#84692a"/><rect x="58" y="5" width="1" height="1" fill="#84692a"/><rect x="59" y="2" width="1" height="1" fill="#84692a"/><rect x="59" y="5" width="1" height="1" fill="#84692a"/><rect x="60" y="0" width="1" height="1" fill="#84692a"/><rect x="60" y="3" width="1" height="1" fill="#84692a"/><rect x="60" y="5" width="1" height="1" fill="#84692a"/><rect x="60" y="6" width="1" height="1" fill="#84692a"/><rect x="61" y="0" width="1" height="1" fill="#84692a"/><rect x="61" y="3" width="1" height="1" fill="#84692a"/><rect x="61" y="6" width="1" height="1" fill="#84692a"/><rect x="62" y="1" width="1" height="1" fill="#84692a"/><rect x="62" y="4" width="1" height="1" fill="#84692a"/><rect x="62" y="5" width="1" height="1" fill="#84692a"/><rect x="63" y="2" width="1" height="1" fill="#84692a"/><rect x="63" y="5" width="1" height="1" fill="#84692a"/><rect x="63" y="6" width="1" height="1" fill="#84692a"/><rect x="64" y="0" width="1" height="1" fill="#84692a"/><rect x="64" y="3" width="1" height="1" fill="#84692a"/><rect x="64" y="6" width="1" height="1" fill="#84692a"/><rect x="65" y="0" width="1" height="1" fill="#84692a"/><rect x="65" y="3" width="1" height="1" fill="#84692a"/><rect x="65" y="6" width="1" height="1" fill="#84692a"/><rect x="66" y="1" width="1" height="1" fill="#84692a"/><rect x="66" y="4" width="1" height="1" fill="#84692a"/><rect x="66" y="5" width="1" height="1" fill="#84692a"/><rect x="67" y="2" width="1" height="1" fill="#84692a"/><rect x="67" y="5" width="1" height="1" fill="#84692a"/><rect x="67" y="6" width="1" height="1" fill="#84692a"/><rect x="68" y="0" width="1" height="1" fill="#84692a"/><rect x="68" y="3" width="1" height="1" fill="#84692a"/><rect x="68" y="5" width="1" height="1" fill="#84692a"/><rect x="68" y="6" width="1" height="1" fill="#84692a"/><rect x="69" y="0" width="1" height="1" fill="#84692a"/><rect x="69" y="3" width="1" height="1" fill="#84692a"/><rect x="69" y="5" width="1" height="1" fill="#84692a"/><rect x="69" y="6" width="1" height="1" fill="#84692a"/><rect x="70" y="1" width="1" height="1" fill="#84692a"/><rect x="70" y="4" width="1" height="1" fill="#84692a"/><rect x="70" y="5" width="1" height="1" fill="#84692a"/><rect x="70" y="6" width="1" height="1" fill="#84692a"/><rect x="71" y="2" width="1" height="1" fill="#84692a"/><rect x="71" y="5" width="1" height="1" fill="#84692a"/><rect x="71" y="6" width="1" height="1" fill="#84692a"/><rect x="72" y="0" width="1" height="1" fill="#84692a"/><rect x="72" y="3" width="1" height="1" fill="#84692a"/><rect x="72" y="6" width="1" height="1" fill="#84692a"/><rect x="73" y="0" width="1" height="1" fill="#84692a"/><rect x="73" y="3" width="1" height="1" fill="#84692a"/><rect x="73" y="5" width="1" height="1" fill="#84692a"/><rect x="73" y="6" width="1" height="1" fill="#84692a"/><rect x="74" y="1" width="1" height="1" fill="#84692a"/><rect x="74" y="4" width="1" height="1" fill="#84692a"/><rect x="74" y="5" width="1" height="1" fill="#84692a"/><rect x="75" y="2" width="1" height="1" fill="#84692a"/><rect x="75" y="5" width="1" height="1" fill="#84692a"/><rect x="75" y="6" width="1" height="1" fill="#84692a"/><rect x="76" y="0" width="1" height="1" fill="#84692a"/><rect x="76" y="3" width="1" height="1" fill="#84692a"/><rect x="76" y="6" width="1" height="1" fill="#84692a"/><rect x="77" y="0" width="1" height="1" fill="#84692a"/><rect x="77" y="3" width="1" height="1" fill="#84692a"/><rect x="77" y="6" width="1" height="1" fill="#84692a"/><rect x="78" y="1" width="1" height="1" fill="#84692a"/><rect x="78" y="4" width="1" height="1" fill="#84692a"/><rect x="78" y="5" width="1" height="1" fill="#84692a"/><rect x="78" y="6" width="1" height="1" fill="#84692a"/><rect x="79" y="2" width="1" height="1" fill="#84692a"/><rect x="79" y="5" width="1" height="1" fill="#84692a"/><rect x="79" y="6" width="1" height="1" fill="#84692a"/><rect x="80" y="0" width="1" height="1" fill="#84692a"/><rect x="80" y="3" width="1" height="1" fill="#84692a"/><rect x="80" y="6" width="1" height="1" fill="#84692a"/><rect x="81" y="0" width="1" height="1" fill="#84692a"/><rect x="81" y="3" width="1" height="1" fill="#84692a"/><rect x="81" y="5" width="1" height="1" fill="#84692a"/><rect x="81" y="6" width="1" height="1" fill="#84692a"/><rect x="82" y="1" width="1" height="1" fill="#84692a"/><rect x="82" y="4" width="1" height="1" fill="#84692a"/><rect x="82" y="5" width="1" height="1" fill="#84692a"/><rect x="83" y="2" width="1" height="1" fill="#84692a"/><rect x="83" y="5" width="1" height="1" fill="#84692a"/><rect x="84" y="0" width="1" height="1" fill="#84692a"/><rect x="84" y="3" width="1" height="1" fill="#84692a"/><rect x="84" y="5" width="1" height="1" fill="#84692a"/><rect x="84" y="6" width="1" height="1" fill="#84692a"/><rect x="85" y="0" width="1" height="1" fill="#84692a"/><rect x="85" y="3" width="1" height="1" fill="#84692a"/><rect x="85" y="5" width="1" height="1" fill="#84692a"/><rect x="85" y="6" width="1" height="1" fill="#84692a"/><rect x="86" y="1" width="1" height="1" fill="#84692a"/><rect x="86" y="4" width="1" height="1" fill="#84692a"/><rect x="86" y="6" width="1" height="1" fill="#84692a"/><rect x="87" y="2" width="1" height="1" fill="#84692a"/><rect x="87" y="5" width="1" height="1" fill="#84692a"/><rect x="87" y="6" width="1" height="1" fill="#84692a"/><rect x="88" y="0" width="1" height="1" fill="#84692a"/><rect x="88" y="3" width="1" height="1" fill="#84692a"/><rect x="88" y="6" width="1" height="1" fill="#84692a"/><rect x="89" y="0" width="1" height="1" fill="#84692a"/><rect x="89" y="3" width="1" height="1" fill="#84692a"/><rect x="89" y="5" width="1" height="1" fill="#84692a"/><rect x="89" y="6" width="1" height="1" fill="#84692a"/><rect x="90" y="1" width="1" height="1" fill="#84692a"/><rect x="90" y="4" width="1" height="1" fill="#84692a"/><rect x="90" y="5" width="1" height="1" fill="#84692a"/><rect x="90" y="6" width="1" height="1" fill="#84692a"/><rect x="91" y="2" width="1" height="1" fill="#84692a"/><rect x="91" y="5" width="1" height="1" fill="#84692a"/><rect x="91" y="6" width="1" height="1" fill="#84692a"/><rect x="92" y="0" width="1" height="1" fill="#84692a"/><rect x="92" y="3" width="1" height="1" fill="#84692a"/><rect x="92" y="5" width="1" height="1" fill="#84692a"/><rect x="92" y="6" width="1" height="1" fill="#84692a"/><rect x="93" y="0" width="1" height="1" fill="#84692a"/><rect x="93" y="3" width="1" height="1" fill="#84692a"/><rect x="93" y="5" width="1" height="1" fill="#84692a"/><rect x="93" y="6" width="1" height="1" fill="#84692a"/><rect x="94" y="1" width="1" height="1" fill="#84692a"/><rect x="94" y="4" width="1" height="1" fill="#84692a"/><rect x="95" y="2" width="1" height="1" fill="#84692a"/><rect x="95" y="5" width="1" height="1" fill="#84692a"/><rect x="95" y="6" width="1" height="1" fill="#84692a"/><rect x="96" y="0" width="1" height="1" fill="#84692a"/><rect x="96" y="3" width="1" height="1" fill="#84692a"/><rect x="96" y="6" width="1" height="1" fill="#84692a"/><rect x="97" y="0" width="1" height="1" fill="#84692a"/><rect x="97" y="3" width="1" height="1" fill="#84692a"/><rect x="97" y="5" width="1" height="1" fill="#84692a"/><rect x="97" y="6" width="1" height="1" fill="#84692a"/><rect x="98" y="1" width="1" height="1" fill="#84692a"/><rect x="98" y="4" width="1" height="1" fill="#84692a"/><rect x="98" y="6" width="1" height="1" fill="#84692a"/><rect x="99" y="2" width="1" height="1" fill="#84692a"/><rect x="99" y="5" width="1" height="1" fill="#84692a"/><rect x="100" y="0" width="1" height="1" fill="#84692a"/><rect x="100" y="3" width="1" height="1" fill="#84692a"/><rect x="100" y="6" width="1" height="1" fill="#84692a"/><rect x="101" y="0" width="1" height="1" fill="#84692a"/><rect x="101" y="3" width="1" height="1" fill="#84692a"/><rect x="101" y="5" width="1" height="1" fill="#84692a"/><rect x="101" y="6" width="1" height="1" fill="#84692a"/><rect x="102" y="1" width="1" height="1" fill="#84692a"/><rect x="102" y="4" width="1" height="1" fill="#84692a"/><rect x="102" y="5" width="1" height="1" fill="#84692a"/><rect x="103" y="2" width="1" height="1" fill="#84692a"/><rect x="103" y="5" width="1" height="1" fill="#84692a"/><rect x="104" y="0" width="1" height="1" fill="#84692a"/><rect x="104" y="3" width="1" height="1" fill="#84692a"/><rect x="104" y="5" width="1" height="1" fill="#84692a"/><rect x="104" y="6" width="1" height="1" fill="#84692a"/><rect x="105" y="0" width="1" height="1" fill="#84692a"/><rect x="105" y="3" width="1" height="1" fill="#84692a"/><rect x="105" y="5" width="1" height="1" fill="#84692a"/><rect x="105" y="6" width="1" height="1" fill="#84692a"/><rect x="106" y="1" width="1" height="1" fill="#84692a"/><rect x="106" y="4" width="1" height="1" fill="#84692a"/><rect x="106" y="5" width="1" height="1" fill="#84692a"/><rect x="106" y="6" width="1" height="1" fill="#84692a"/><rect x="107" y="2" width="1" height="1" fill="#84692a"/><rect x="107" y="5" width="1" height="1" fill="#84692a"/><rect x="107" y="6" width="1" height="1" fill="#84692a"/><rect x="108" y="0" width="1" height="1" fill="#84692a"/><rect x="108" y="3" width="1" height="1" fill="#84692a"/><rect x="108" y="5" width="1" height="1" fill="#84692a"/><rect x="108" y="6" width="1" height="1" fill="#84692a"/><rect x="109" y="0" width="1" height="1" fill="#84692a"/><rect x="109" y="3" width="1" height="1" fill="#84692a"/><rect x="109" y="5" width="1" height="1" fill="#84692a"/><rect x="109" y="6" width="1" height="1" fill="#84692a"/><rect x="110" y="1" width="1" height="1" fill="#84692a"/><rect x="110" y="4" width="1" height="1" fill="#84692a"/><rect x="110" y="5" width="1" height="1" fill="#84692a"/><rect x="110" y="6" width="1" height="1" fill="#84692a"/><rect x="111" y="2" width="1" height="1" fill="#84692a"/><rect x="111" y="5" width="1" height="1" fill="#84692a"/><rect x="111" y="6" width="1" height="1" fill="#84692a"/><rect x="112" y="0" width="1" height="1" fill="#84692a"/><rect x="112" y="3" width="1" height="1" fill="#84692a"/><rect x="112" y="6" width="1" height="1" fill="#84692a"/><rect x="113" y="0" width="1" height="1" fill="#84692a"/><rect x="113" y="3" width="1" height="1" fill="#84692a"/><rect x="113" y="5" width="1" height="1" fill="#84692a"/><rect x="113" y="6" width="1" height="1" fill="#84692a"/><rect x="114" y="1" width="1" height="1" fill="#84692a"/><rect x="114" y="4" width="1" height="1" fill="#84692a"/><rect x="114" y="5" width="1" height="1" fill="#84692a"/><rect x="115" y="2" width="1" height="1" fill="#84692a"/><rect x="115" y="5" width="1" height="1" fill="#84692a"/><rect x="115" y="6" width="1" height="1" fill="#84692a"/><rect x="116" y="0" width="1" height="1" fill="#84692a"/><rect x="116" y="3" width="1" height="1" fill="#84692a"/><rect x="116" y="5" width="1" height="1" fill="#84692a"/><rect x="116" y="6" width="1" height="1" fill="#84692a"/><rect x="117" y="0" width="1" height="1" fill="#84692a"/><rect x="117" y="3" width="1" height="1" fill="#84692a"/><rect x="117" y="6" width="1" height="1" fill="#84692a"/><rect x="118" y="1" width="1" height="1" fill="#84692a"/><rect x="118" y="4" width="1" height="1" fill="#84692a"/><rect x="118" y="5" width="1" height="1" fill="#84692a"/><rect x="118" y="6" width="1" height="1" fill="#84692a"/><rect x="119" y="2" width="1" height="1" fill="#84692a"/><rect x="119" y="5" width="1" height="1" fill="#84692a"/><rect x="119" y="6" width="1" height="1" fill="#84692a"/><rect x="120" y="0" width="1" height="1" fill="#84692a"/><rect x="120" y="3" width="1" height="1" fill="#84692a"/><rect x="120" y="6" width="1" height="1" fill="#84692a"/><rect x="121" y="0" width="1" height="1" fill="#84692a"/><rect x="121" y="3" width="1" height="1" fill="#84692a"/><rect x="121" y="5" width="1" height="1" fill="#84692a"/><rect x="121" y="6" width="1" height="1" fill="#84692a"/><rect x="122" y="1" width="1" height="1" fill="#84692a"/><rect x="122" y="4" width="1" height="1" fill="#84692a"/><rect x="122" y="5" width="1" height="1" fill="#84692a"/><rect x="122" y="6" width="1" height="1" fill="#84692a"/><rect x="123" y="2" width="1" height="1" fill="#84692a"/><rect x="123" y="5" width="1" height="1" fill="#84692a"/><rect x="124" y="0" width="1" height="1" fill="#84692a"/><rect x="124" y="3" width="1" height="1" fill="#84692a"/><rect x="124" y="5" width="1" height="1" fill="#84692a"/><rect x="124" y="6" width="1" height="1" fill="#84692a"/><rect x="125" y="0" width="1" height="1" fill="#84692a"/><rect x="125" y="3" width="1" height="1" fill="#84692a"/><rect x="125" y="6" width="1" height="1" fill="#84692a"/><rect x="126" y="1" width="1" height="1" fill="#84692a"/><rect x="126" y="4" width="1" height="1" fill="#84692a"/><rect x="126" y="5" width="1" height="1" fill="#84692a"/><rect x="126" y="6" width="1" height="1" fill="#84692a"/><rect x="127" y="2" width="1" height="1" fill="#84692a"/><rect x="127" y="5" width="1" height="1" fill="#84692a"/><rect x="128" y="0" width="1" height="1" fill="#84692a"/><rect x="128" y="3" width="1" height="1" fill="#84692a"/><rect x="128" y="6" width="1" height="1" fill="#84692a"/><rect x="129" y="0" width="1" height="1" fill="#84692a"/><rect x="129" y="3" width="1" height="1" fill="#84692a"/><rect x="129" y="5" width="1" height="1" fill="#84692a"/><rect x="129" y="6" width="1" height="1" fill="#84692a"/><rect x="130" y="1" width="1" height="1" fill="#84692a"/><rect x="130" y="4" width="1" height="1" fill="#84692a"/><rect x="130" y="5" width="1" height="1" fill="#84692a"/><rect x="130" y="6" width="1" height="1" fill="#84692a"/><rect x="131" y="2" width="1" height="1" fill="#84692a"/><rect x="131" y="5" width="1" height="1" fill="#84692a"/><rect x="131" y="6" width="1" height="1" fill="#84692a"/><rect x="132" y="0" width="1" height="1" fill="#84692a"/><rect x="132" y="3" width="1" height="1" fill="#84692a"/><rect x="132" y="5" width="1" height="1" fill="#84692a"/><rect x="132" y="6" width="1" height="1" fill="#84692a"/><rect x="133" y="0" width="1" height="1" fill="#84692a"/><rect x="133" y="3" width="1" height="1" fill="#84692a"/><rect x="133" y="6" width="1" height="1" fill="#84692a"/><rect x="134" y="1" width="1" height="1" fill="#84692a"/><rect x="134" y="4" width="1" height="1" fill="#84692a"/><rect x="134" y="6" width="1" height="1" fill="#84692a"/><rect x="135" y="2" width="1" height="1" fill="#84692a"/><rect x="135" y="5" width="1" height="1" fill="#84692a"/><rect x="135" y="6" width="1" height="1" fill="#84692a"/><rect x="23" y="4" width="1" height="1" fill="#c04858"/><rect x="90" y="4" width="1" height="1" fill="#c04858"/><rect x="35" y="3" width="1" height="1" fill="#c04858"/><rect x="76" y="4" width="1" height="1" fill="#c04858"/><rect x="71" y="3" width="1" height="1" fill="#c04858"/><rect x="90" y="4" width="1" height="1" fill="#c04858"/><rect x="108" y="3" width="1" height="1" fill="#c04858"/><rect x="109" y="4" width="1" height="1" fill="#c04858"/><rect x="106" y="2" width="1" height="1" fill="#c04858"/><rect x="107" y="2" width="1" height="1" fill="#c04858"/><rect x="53" y="2" width="1" height="1" fill="#c04858"/><rect x="124" y="4" width="1" height="1" fill="#c04858"/><rect x="132" y="3" width="1" height="1" fill="#c04858"/><rect x="58" y="2" width="1" height="1" fill="#c04858"/><rect x="118" y="4" width="1" height="1" fill="#c04858"/><rect x="75" y="4" width="1" height="1" fill="#c04858"/><rect x="89" y="2" width="1" height="1" fill="#c04858"/><rect x="19" y="4" width="1" height="1" fill="#c04858"/><rect x="75" y="2" width="1" height="1" fill="#c04858"/><rect x="64" y="2" width="1" height="1" fill="#c04858"/><rect x="10" y="4" width="1" height="1" fill="#c04858"/><rect x="133" y="2" width="1" height="1" fill="#c04858"/><rect x="112" y="4" width="1" height="1" fill="#c04858"/><rect x="14" y="2" width="1" height="1" fill="#c04858"/><rect x="125" y="4" width="1" height="1" fill="#c04858"/><rect x="32" y="2" width="1" height="1" fill="#c04858"/><rect x="130" y="3" width="1" height="1" fill="#c04858"/><rect x="63" y="4" width="1" height="1" fill="#c04858"/><rect x="7" y="4" width="1" height="1" fill="#c04858"/><rect x="107" y="2" width="1" height="1" fill="#c04858"/></svg><div style="position:absolute;left:133px;top:163.2px;width:37.5px;height:30px;background:#d6d6d6;border-radius:2px 2px 3px 3px;box-shadow:0 0 0 0.6px #6f8a82;"></div><div style="position:absolute;left:133px;top:170.7px;width:37.5px;height:18.0px;background:#3c3c3c;"></div><div style="position:absolute;left:161.5px;top:164.7px;width:0.8px;height:4.5px;background:#bdbdbd;"></div><div style="position:absolute;left:164.5px;top:164.7px;width:0.8px;height:4.5px;background:#bdbdbd;"></div><div style="position:absolute;left:167.5px;top:164.7px;width:0.8px;height:4.5px;background:#bdbdbd;"></div><div style="position:absolute;left:134.5px;top:164.39999999999998px;width:6px;height:5.1px;background:#2a6eb0;"></div><div style="position:absolute;left:158.5px;top:190.39999999999998px;width:1px;height:1px;background:#666;"></div><div style="position:absolute;left:162.5px;top:190.39999999999998px;width:1.5px;height:1px;background:#555;"></div><div style="position:absolute;left:166.5px;top:190.39999999999998px;width:1px;height:1px;background:#666;"></div><div style="position:absolute;left:132px;top:172px;width:2px;height:2px;background:#5aa"></div><div class="t" style="left:134.5px;top:171.50px;font-size:3px;line-height:3.6px;color:#aaa">uv</div><div style="position:absolute;left:132px;top:175px;width:2px;height:2px;background:#2c2"></div><div class="t" style="left:134.5px;top:174.50px;font-size:3px;line-height:3.6px;color:#aaa">size</div><div style="position:absolute;left:132px;top:179px;width:2px;height:2px;background:#2c2"></div><div class="t" style="left:134.5px;top:178.50px;font-size:3px;line-height:3.6px;color:#aaa">offset</div><div style="position:absolute;left:132px;top:182px;width:2px;height:2px;background:#5aa"></div><div class="t" style="left:134.5px;top:182.50px;font-size:3px;line-height:3.6px;color:#aaa">angle</div><div style="position:absolute;left:132px;top:186px;width:2px;height:2px;background:#5aa"></div><div class="t" style="left:134.5px;top:185.50px;font-size:3px;line-height:3.6px;color:#aaa">scale</div><div style="position:absolute;left:169.5px;top:171.7px;width:2px;height:2px;background:#3a8ad0;"></div><div style="position:absolute;left:169.5px;top:174.7px;width:2px;height:2px;background:#5aa;"></div><div style="position:absolute;left:190px;top:143px;width:37px;height:57.5px;background:#d6d6d6;border-radius:2px 2px 3px 3px;box-shadow:0 0 0 0.6px #6f8a82;"></div><div style="position:absolute;left:190px;top:150.2px;width:37px;height:46.3px;background:#3c3c3c;"></div><div style="position:absolute;left:218px;top:144.5px;width:0.8px;height:4.2px;background:#bdbdbd;"></div><div style="position:absolute;left:221px;top:144.5px;width:0.8px;height:4.2px;background:#bdbdbd;"></div><div style="position:absolute;left:224.2px;top:143.8px;width:2.8px;height:6.4px;background:#c4434a;"></div><div style="position:absolute;left:224.8px;top:145.5px;width:1px;height:2px;background:#e0a030;"></div><svg style="position:absolute;left:192px;top:143.5px" width="8" height="6.2" viewBox="0 0 8 7"><circle cx="4" cy="1.6" r="1.1" fill="none" stroke="#a8a8a8" stroke-width="0.6"/><path d="M1 3.5 L4 3 L7 3.5 M4 3 V5 L2 7 M4 5 L6 7" stroke="#a8a8a8" stroke-width="0.6" fill="none"/><circle cx="4" cy="0.6" r="0.6" fill="#e0b030"/><circle cx="6" cy="5.5" r="0.7" fill="#9cc8e0"/></svg><div style="position:absolute;left:215px;top:197.7px;width:1px;height:1px;background:#666;"></div><div style="position:absolute;left:219px;top:197.7px;width:1.5px;height:1px;background:#555;"></div><div style="position:absolute;left:223px;top:197.7px;width:1px;height:1px;background:#666;"></div><div style="position:absolute;left:189px;top:151px;width:2px;height:2px;background:#ddd"></div><div class="t" style="left:191.5px;top:150.50px;font-size:3px;line-height:3.5615384615384613px;color:#ddd">Surface</div><div style="position:absolute;left:189px;top:155px;width:2px;height:2px;background:#ddd"></div><div class="t" style="left:191.5px;top:154.50px;font-size:3px;line-height:3.5615384615384613px;color:#ddd">Opacity</div><div style="position:absolute;left:189px;top:158px;width:2px;height:2px;background:#ddd"></div><div class="t" style="left:191.5px;top:157.50px;font-size:3px;line-height:3.5615384615384613px;color:#ddd">Emission</div><div style="position:absolute;left:189px;top:162px;width:2px;height:2px;background:#ddd"></div><div class="t" style="left:191.5px;top:161.50px;font-size:3px;line-height:3.5615384615384613px;color:#ddd">Bump &amp; Normals</div><div style="position:absolute;left:189px;top:165px;width:2px;height:2px;background:#ddd"></div><div class="t" style="left:191.5px;top:164.50px;font-size:3px;line-height:3.5615384615384613px;color:#ddd">Displacement</div><div style="position:absolute;left:189px;top:169px;width:2px;height:2px;background:#ddd"></div><div class="t" style="left:191.5px;top:168.50px;font-size:3px;line-height:3.5615384615384613px;color:#ddd">Settings</div><div style="position:absolute;left:189px;top:172px;width:2px;height:2px;background:#ddd"></div><div class="t" style="left:191.5px;top:172.50px;font-size:3px;line-height:3.5615384615384613px;color:#ddd">Other</div><div style="position:absolute;left:189px;top:176px;width:2px;height:2px;background:#5aa"></div><div class="t" style="left:191.5px;top:175.50px;font-size:3px;line-height:3.5615384615384613px;color:#7a9a9a">ior</div><div style="position:absolute;left:189px;top:179px;width:2px;height:2px;background:#5aa"></div><div class="t" style="left:191.5px;top:179.50px;font-size:3px;line-height:3.5615384615384613px;color:#7a9a9a">rough</div><div style="position:absolute;left:189px;top:183px;width:2px;height:2px;background:#5aa"></div><div class="t" style="left:191.5px;top:182.50px;font-size:3px;line-height:3.5615384615384613px;color:#7a9a9a">metal</div><div style="position:absolute;left:189px;top:187px;width:2px;height:2px;background:#3a8ad0"></div><div class="t" style="left:191.5px;top:186.50px;font-size:3px;line-height:3.5615384615384613px;color:#7a9a9a">sheen</div><div style="position:absolute;left:189px;top:190px;width:2px;height:2px;background:#5aa"></div><div class="t" style="left:191.5px;top:189.50px;font-size:3px;line-height:3.5615384615384613px;color:#7a9a9a">coat</div><div style="position:absolute;left:189px;top:194px;width:2px;height:2px;background:#2c2"></div><div class="t" style="left:191.5px;top:193.50px;font-size:3px;line-height:3.5615384615384613px;color:#7a9a9a">N</div><div style="position:absolute;left:226px;top:151.2px;width:2px;height:2px;background:#ccc;"></div><div style="position:absolute;left:226px;top:154.2px;width:2px;height:2px;background:#5aa;"></div><div style="position:absolute;left:226px;top:157.2px;width:2px;height:2px;background:#e06030;"></div><div style="position:absolute;left:190px;top:127.5px;width:3px;height:3px;background:#3a7ac8;border-radius:1px"></div><div style="position:absolute;left:194px;top:127.5px;width:3px;height:3px;background:#888;border-radius:1px"></div><div style="position:absolute;left:198px;top:127.5px;width:3px;height:3px;background:#d04050;border-radius:1px"></div><div class="t" style="left:190px;top:130.9px;font-size:4.4px;color:#5a4410;">Principled Shader</div><div class="t" style="left:190px;top:135.9px;font-size:4.4px;color:#d8ccb0;">Gravel_Dry_Ground_shd</div><div style="position:absolute;left:134px;top:148px;width:4px;height:3px;background:#4a70a0;"></div><div class="t" style="left:134px;top:151.9px;font-size:4.4px;color:#5a4410;">Triad Boxes</div><div class="t" style="left:134px;top:156.9px;font-size:4.4px;color:#d8ccb0;">tile_multiplier3</div><div style="position:absolute;left:127px;top:242px;width:37.5px;height:30px;background:#d6d6d6;border-radius:2px 2px 3px 3px;box-shadow:0 0 0 0.6px #6f8a82;"></div><div style="position:absolute;left:127px;top:249.5px;width:37.5px;height:18.0px;background:#3c3c3c;"></div><div style="position:absolute;left:155.5px;top:243.5px;width:0.8px;height:4.5px;background:#bdbdbd;"></div><div style="position:absolute;left:158.5px;top:243.5px;width:0.8px;height:4.5px;background:#bdbdbd;"></div><div style="position:absolute;left:161.5px;top:243.5px;width:0.8px;height:4.5px;background:#bdbdbd;"></div><div style="position:absolute;left:128.5px;top:243.2px;width:6px;height:5.1px;background:#2a6eb0;"></div><div style="position:absolute;left:152.5px;top:269.2px;width:1px;height:1px;background:#666;"></div><div style="position:absolute;left:156.5px;top:269.2px;width:1.5px;height:1px;background:#555;"></div><div style="position:absolute;left:160.5px;top:269.2px;width:1px;height:1px;background:#666;"></div><div style="position:absolute;left:126px;top:250px;width:2px;height:2px;background:#5aa"></div><div class="t" style="left:128.5px;top:250.50px;font-size:3px;line-height:3.6px;color:#aaa">uv</div><div style="position:absolute;left:126px;top:254px;width:2px;height:2px;background:#2c2"></div><div class="t" style="left:128.5px;top:253.50px;font-size:3px;line-height:3.6px;color:#aaa">size</div><div style="position:absolute;left:126px;top:258px;width:2px;height:2px;background:#2c2"></div><div class="t" style="left:128.5px;top:257.50px;font-size:3px;line-height:3.6px;color:#aaa">offset</div><div style="position:absolute;left:126px;top:261px;width:2px;height:2px;background:#5aa"></div><div class="t" style="left:128.5px;top:260.50px;font-size:3px;line-height:3.6px;color:#aaa">angle</div><div style="position:absolute;left:126px;top:265px;width:2px;height:2px;background:#5aa"></div><div class="t" style="left:128.5px;top:264.50px;font-size:3px;line-height:3.6px;color:#aaa">scale</div><div style="position:absolute;left:163.5px;top:250.5px;width:2px;height:2px;background:#3a8ad0;"></div><div style="position:absolute;left:163.5px;top:253.5px;width:2px;height:2px;background:#5aa;"></div><div style="position:absolute;left:184px;top:222px;width:37px;height:57.5px;background:#d6d6d6;border-radius:2px 2px 3px 3px;box-shadow:0 0 0 0.6px #6f8a82;"></div><div style="position:absolute;left:184px;top:229.2px;width:37px;height:46.3px;background:#3c3c3c;"></div><div style="position:absolute;left:212px;top:223.5px;width:0.8px;height:4.2px;background:#bdbdbd;"></div><div style="position:absolute;left:215px;top:223.5px;width:0.8px;height:4.2px;background:#bdbdbd;"></div><div style="position:absolute;left:218.2px;top:222.8px;width:2.8px;height:6.4px;background:#c4434a;"></div><div style="position:absolute;left:218.8px;top:224.5px;width:1px;height:2px;background:#e0a030;"></div><svg style="position:absolute;left:186px;top:222.5px" width="8" height="6.2" viewBox="0 0 8 7"><circle cx="4" cy="1.6" r="1.1" fill="none" stroke="#a8a8a8" stroke-width="0.6"/><path d="M1 3.5 L4 3 L7 3.5 M4 3 V5 L2 7 M4 5 L6 7" stroke="#a8a8a8" stroke-width="0.6" fill="none"/><circle cx="4" cy="0.6" r="0.6" fill="#e0b030"/><circle cx="6" cy="5.5" r="0.7" fill="#9cc8e0"/></svg><div style="position:absolute;left:209px;top:276.7px;width:1px;height:1px;background:#666;"></div><div style="position:absolute;left:213px;top:276.7px;width:1.5px;height:1px;background:#555;"></div><div style="position:absolute;left:217px;top:276.7px;width:1px;height:1px;background:#666;"></div><div style="position:absolute;left:183px;top:230px;width:2px;height:2px;background:#ddd"></div><div class="t" style="left:185.5px;top:229.50px;font-size:3px;line-height:3.5615384615384613px;color:#ddd">Surface</div><div style="position:absolute;left:183px;top:234px;width:2px;height:2px;background:#ddd"></div><div class="t" style="left:185.5px;top:233.50px;font-size:3px;line-height:3.5615384615384613px;color:#ddd">Opacity</div><div style="position:absolute;left:183px;top:237px;width:2px;height:2px;background:#ddd"></div><div class="t" style="left:185.5px;top:236.50px;font-size:3px;line-height:3.5615384615384613px;color:#ddd">Emission</div><div style="position:absolute;left:183px;top:241px;width:2px;height:2px;background:#ddd"></div><div class="t" style="left:185.5px;top:240.50px;font-size:3px;line-height:3.5615384615384613px;color:#ddd">Bump &amp; Normals</div><div style="position:absolute;left:183px;top:244px;width:2px;height:2px;background:#ddd"></div><div class="t" style="left:185.5px;top:243.50px;font-size:3px;line-height:3.5615384615384613px;color:#ddd">Displacement</div><div style="position:absolute;left:183px;top:248px;width:2px;height:2px;background:#ddd"></div><div class="t" style="left:185.5px;top:247.50px;font-size:3px;line-height:3.5615384615384613px;color:#ddd">Settings</div><div style="position:absolute;left:183px;top:251px;width:2px;height:2px;background:#ddd"></div><div class="t" style="left:185.5px;top:251.50px;font-size:3px;line-height:3.5615384615384613px;color:#ddd">Other</div><div style="position:absolute;left:183px;top:255px;width:2px;height:2px;background:#5aa"></div><div class="t" style="left:185.5px;top:254.50px;font-size:3px;line-height:3.5615384615384613px;color:#7a9a9a">ior</div><div style="position:absolute;left:183px;top:258px;width:2px;height:2px;background:#5aa"></div><div class="t" style="left:185.5px;top:258.50px;font-size:3px;line-height:3.5615384615384613px;color:#7a9a9a">rough</div><div style="position:absolute;left:183px;top:262px;width:2px;height:2px;background:#5aa"></div><div class="t" style="left:185.5px;top:261.50px;font-size:3px;line-height:3.5615384615384613px;color:#7a9a9a">metal</div><div style="position:absolute;left:183px;top:266px;width:2px;height:2px;background:#3a8ad0"></div><div class="t" style="left:185.5px;top:265.50px;font-size:3px;line-height:3.5615384615384613px;color:#7a9a9a">sheen</div><div style="position:absolute;left:183px;top:269px;width:2px;height:2px;background:#5aa"></div><div class="t" style="left:185.5px;top:268.50px;font-size:3px;line-height:3.5615384615384613px;color:#7a9a9a">coat</div><div style="position:absolute;left:183px;top:273px;width:2px;height:2px;background:#2c2"></div><div class="t" style="left:185.5px;top:272.50px;font-size:3px;line-height:3.5615384615384613px;color:#7a9a9a">N</div><div style="position:absolute;left:220px;top:230.2px;width:2px;height:2px;background:#ccc;"></div><div style="position:absolute;left:220px;top:233.2px;width:2px;height:2px;background:#5aa;"></div><div style="position:absolute;left:220px;top:236.2px;width:2px;height:2px;background:#e06030;"></div><div style="position:absolute;left:185.5px;top:205.5px;width:3px;height:3px;background:#3a7ac8;border-radius:1px"></div><div style="position:absolute;left:189.5px;top:205.5px;width:3px;height:3px;background:#888;border-radius:1px"></div><div style="position:absolute;left:193.5px;top:205.5px;width:3px;height:3px;background:#d04050;border-radius:1px"></div><div class="t" style="left:184.5px;top:209.70000000000002px;font-size:4.4px;color:#4a4a30;">Principled Shader</div><div class="t" style="left:184.5px;top:215.9px;font-size:4.4px;color:#d8d0b8;">Sand_debris_shd</div><div class="t" style="left:128px;top:229.9px;font-size:4.4px;color:#5a5440;">Triad Boxes</div><div class="t" style="left:128px;top:234.9px;font-size:4.4px;color:#ddd3b0;">tile_multiplier2</div><div style="position:absolute;left:127px;top:319px;width:37.5px;height:30px;background:#d6d6d6;border-radius:2px 2px 3px 3px;box-shadow:0 0 0 0.6px #6f8a82;"></div><div style="position:absolute;left:127px;top:326.5px;width:37.5px;height:18.0px;background:#3c3c3c;"></div><div style="position:absolute;left:155.5px;top:320.5px;width:0.8px;height:4.5px;background:#bdbdbd;"></div><div style="position:absolute;left:158.5px;top:320.5px;width:0.8px;height:4.5px;background:#bdbdbd;"></div><div style="position:absolute;left:161.5px;top:320.5px;width:0.8px;height:4.5px;background:#bdbdbd;"></div><div style="position:absolute;left:128.5px;top:320.2px;width:6px;height:5.1px;background:#2a6eb0;"></div><div style="position:absolute;left:152.5px;top:346.2px;width:1px;height:1px;background:#666;"></div><div style="position:absolute;left:156.5px;top:346.2px;width:1.5px;height:1px;background:#555;"></div><div style="position:absolute;left:160.5px;top:346.2px;width:1px;height:1px;background:#666;"></div><div style="position:absolute;left:126px;top:327px;width:2px;height:2px;background:#5aa"></div><div class="t" style="left:128.5px;top:326.50px;font-size:3px;line-height:3.6px;color:#aaa">uv</div><div style="position:absolute;left:126px;top:331px;width:2px;height:2px;background:#2c2"></div><div class="t" style="left:128.5px;top:330.50px;font-size:3px;line-height:3.6px;color:#aaa">size</div><div style="position:absolute;left:126px;top:334px;width:2px;height:2px;background:#2c2"></div><div class="t" style="left:128.5px;top:334.50px;font-size:3px;line-height:3.6px;color:#aaa">offset</div><div style="position:absolute;left:126px;top:338px;width:2px;height:2px;background:#5aa"></div><div class="t" style="left:128.5px;top:337.50px;font-size:3px;line-height:3.6px;color:#aaa">angle</div><div style="position:absolute;left:126px;top:342px;width:2px;height:2px;background:#5aa"></div><div class="t" style="left:128.5px;top:341.50px;font-size:3px;line-height:3.6px;color:#aaa">scale</div><div style="position:absolute;left:163.5px;top:327.5px;width:2px;height:2px;background:#3a8ad0;"></div><div style="position:absolute;left:163.5px;top:330.5px;width:2px;height:2px;background:#5aa;"></div><div style="position:absolute;left:184px;top:298.5px;width:37px;height:57.5px;background:#d6d6d6;border-radius:2px 2px 3px 3px;box-shadow:0 0 0 0.6px #6f8a82;"></div><div style="position:absolute;left:184px;top:305.7px;width:37px;height:46.3px;background:#3c3c3c;"></div><div style="position:absolute;left:212px;top:300.0px;width:0.8px;height:4.2px;background:#bdbdbd;"></div><div style="position:absolute;left:215px;top:300.0px;width:0.8px;height:4.2px;background:#bdbdbd;"></div><div style="position:absolute;left:218.2px;top:299.3px;width:2.8px;height:6.4px;background:#c4434a;"></div><div style="position:absolute;left:218.8px;top:301.0px;width:1px;height:2px;background:#e0a030;"></div><svg style="position:absolute;left:186px;top:299.0px" width="8" height="6.2" viewBox="0 0 8 7"><circle cx="4" cy="1.6" r="1.1" fill="none" stroke="#a8a8a8" stroke-width="0.6"/><path d="M1 3.5 L4 3 L7 3.5 M4 3 V5 L2 7 M4 5 L6 7" stroke="#a8a8a8" stroke-width="0.6" fill="none"/><circle cx="4" cy="0.6" r="0.6" fill="#e0b030"/><circle cx="6" cy="5.5" r="0.7" fill="#9cc8e0"/></svg><div style="position:absolute;left:209px;top:353.2px;width:1px;height:1px;background:#666;"></div><div style="position:absolute;left:213px;top:353.2px;width:1.5px;height:1px;background:#555;"></div><div style="position:absolute;left:217px;top:353.2px;width:1px;height:1px;background:#666;"></div><div style="position:absolute;left:183px;top:306px;width:2px;height:2px;background:#ddd"></div><div class="t" style="left:185.5px;top:306.50px;font-size:3px;line-height:3.5615384615384613px;color:#ddd">Surface</div><div style="position:absolute;left:183px;top:310px;width:2px;height:2px;background:#ddd"></div><div class="t" style="left:185.5px;top:309.50px;font-size:3px;line-height:3.5615384615384613px;color:#ddd">Opacity</div><div style="position:absolute;left:183px;top:314px;width:2px;height:2px;background:#ddd"></div><div class="t" style="left:185.5px;top:313.50px;font-size:3px;line-height:3.5615384615384613px;color:#ddd">Emission</div><div style="position:absolute;left:183px;top:317px;width:2px;height:2px;background:#ddd"></div><div class="t" style="left:185.5px;top:316.50px;font-size:3px;line-height:3.5615384615384613px;color:#ddd">Bump &amp; Normals</div><div style="position:absolute;left:183px;top:321px;width:2px;height:2px;background:#ddd"></div><div class="t" style="left:185.5px;top:320.50px;font-size:3px;line-height:3.5615384615384613px;color:#ddd">Displacement</div><div style="position:absolute;left:183px;top:324px;width:2px;height:2px;background:#ddd"></div><div class="t" style="left:185.5px;top:324.50px;font-size:3px;line-height:3.5615384615384613px;color:#ddd">Settings</div><div style="position:absolute;left:183px;top:328px;width:2px;height:2px;background:#ddd"></div><div class="t" style="left:185.5px;top:327.50px;font-size:3px;line-height:3.5615384615384613px;color:#ddd">Other</div><div style="position:absolute;left:183px;top:331px;width:2px;height:2px;background:#5aa"></div><div class="t" style="left:185.5px;top:331.50px;font-size:3px;line-height:3.5615384615384613px;color:#7a9a9a">ior</div><div style="position:absolute;left:183px;top:335px;width:2px;height:2px;background:#5aa"></div><div class="t" style="left:185.5px;top:334.50px;font-size:3px;line-height:3.5615384615384613px;color:#7a9a9a">rough</div><div style="position:absolute;left:183px;top:339px;width:2px;height:2px;background:#5aa"></div><div class="t" style="left:185.5px;top:338.50px;font-size:3px;line-height:3.5615384615384613px;color:#7a9a9a">metal</div><div style="position:absolute;left:183px;top:342px;width:2px;height:2px;background:#3a8ad0"></div><div class="t" style="left:185.5px;top:341.50px;font-size:3px;line-height:3.5615384615384613px;color:#7a9a9a">sheen</div><div style="position:absolute;left:183px;top:346px;width:2px;height:2px;background:#5aa"></div><div class="t" style="left:185.5px;top:345.50px;font-size:3px;line-height:3.5615384615384613px;color:#7a9a9a">coat</div><div style="position:absolute;left:183px;top:349px;width:2px;height:2px;background:#2c2"></div><div class="t" style="left:185.5px;top:348.50px;font-size:3px;line-height:3.5615384615384613px;color:#7a9a9a">N</div><div style="position:absolute;left:220px;top:306.7px;width:2px;height:2px;background:#ccc;"></div><div style="position:absolute;left:220px;top:309.7px;width:2px;height:2px;background:#5aa;"></div><div style="position:absolute;left:220px;top:312.7px;width:2px;height:2px;background:#e06030;"></div><div class="t" style="left:184px;top:291.9px;font-size:5.28px;color:#cfc7a8;">Rocky_ground</div><div class="t" style="left:128px;top:311.4px;font-size:4.752000000000001px;color:#c8c0a0;">tile_multiplier2</div><div style="position:absolute;left:133px;top:411px;width:37.5px;height:30px;background:#d6d6d6;border-radius:2px 2px 3px 3px;box-shadow:0 0 0 0.6px #6f8a82;"></div><div style="position:absolute;left:133px;top:418.5px;width:37.5px;height:18.0px;background:#3c3c3c;"></div><div style="position:absolute;left:161.5px;top:412.5px;width:0.8px;height:4.5px;background:#bdbdbd;"></div><div style="position:absolute;left:164.5px;top:412.5px;width:0.8px;height:4.5px;background:#bdbdbd;"></div><div style="position:absolute;left:167.5px;top:412.5px;width:0.8px;height:4.5px;background:#bdbdbd;"></div><div style="position:absolute;left:134.5px;top:412.2px;width:6px;height:5.1px;background:#2a6eb0;"></div><div style="position:absolute;left:158.5px;top:438.2px;width:1px;height:1px;background:#666;"></div><div style="position:absolute;left:162.5px;top:438.2px;width:1.5px;height:1px;background:#555;"></div><div style="position:absolute;left:166.5px;top:438.2px;width:1px;height:1px;background:#666;"></div><div style="position:absolute;left:132px;top:419px;width:2px;height:2px;background:#5aa"></div><div class="t" style="left:134.5px;top:418.50px;font-size:3px;line-height:3.6px;color:#aaa">uv</div><div style="position:absolute;left:132px;top:423px;width:2px;height:2px;background:#2c2"></div><div class="t" style="left:134.5px;top:422.50px;font-size:3px;line-height:3.6px;color:#aaa">size</div><div style="position:absolute;left:132px;top:426px;width:2px;height:2px;background:#2c2"></div><div class="t" style="left:134.5px;top:426.50px;font-size:3px;line-height:3.6px;color:#aaa">offset</div><div style="position:absolute;left:132px;top:430px;width:2px;height:2px;background:#5aa"></div><div class="t" style="left:134.5px;top:429.50px;font-size:3px;line-height:3.6px;color:#aaa">angle</div><div style="position:absolute;left:132px;top:434px;width:2px;height:2px;background:#5aa"></div><div class="t" style="left:134.5px;top:433.50px;font-size:3px;line-height:3.6px;color:#aaa">scale</div><div style="position:absolute;left:169.5px;top:419.5px;width:2px;height:2px;background:#3a8ad0;"></div><div style="position:absolute;left:169.5px;top:422.5px;width:2px;height:2px;background:#5aa;"></div><div style="position:absolute;left:190px;top:391px;width:37px;height:57.5px;background:#d6d6d6;border-radius:2px 2px 3px 3px;box-shadow:0 0 0 0.6px #6f8a82;"></div><div style="position:absolute;left:190px;top:398.2px;width:37px;height:46.3px;background:#3c3c3c;"></div><div style="position:absolute;left:218px;top:392.5px;width:0.8px;height:4.2px;background:#bdbdbd;"></div><div style="position:absolute;left:221px;top:392.5px;width:0.8px;height:4.2px;background:#bdbdbd;"></div><div style="position:absolute;left:224.2px;top:391.8px;width:2.8px;height:6.4px;background:#c4434a;"></div><div style="position:absolute;left:224.8px;top:393.5px;width:1px;height:2px;background:#e0a030;"></div><svg style="position:absolute;left:192px;top:391.5px" width="8" height="6.2" viewBox="0 0 8 7"><circle cx="4" cy="1.6" r="1.1" fill="none" stroke="#a8a8a8" stroke-width="0.6"/><path d="M1 3.5 L4 3 L7 3.5 M4 3 V5 L2 7 M4 5 L6 7" stroke="#a8a8a8" stroke-width="0.6" fill="none"/><circle cx="4" cy="0.6" r="0.6" fill="#e0b030"/><circle cx="6" cy="5.5" r="0.7" fill="#9cc8e0"/></svg><div style="position:absolute;left:215px;top:445.7px;width:1px;height:1px;background:#666;"></div><div style="position:absolute;left:219px;top:445.7px;width:1.5px;height:1px;background:#555;"></div><div style="position:absolute;left:223px;top:445.7px;width:1px;height:1px;background:#666;"></div><div style="position:absolute;left:189px;top:399px;width:2px;height:2px;background:#ddd"></div><div class="t" style="left:191.5px;top:398.50px;font-size:3px;line-height:3.5615384615384613px;color:#ddd">Surface</div><div style="position:absolute;left:189px;top:403px;width:2px;height:2px;background:#ddd"></div><div class="t" style="left:191.5px;top:402.50px;font-size:3px;line-height:3.5615384615384613px;color:#ddd">Opacity</div><div style="position:absolute;left:189px;top:406px;width:2px;height:2px;background:#ddd"></div><div class="t" style="left:191.5px;top:405.50px;font-size:3px;line-height:3.5615384615384613px;color:#ddd">Emission</div><div style="position:absolute;left:189px;top:410px;width:2px;height:2px;background:#ddd"></div><div class="t" style="left:191.5px;top:409.50px;font-size:3px;line-height:3.5615384615384613px;color:#ddd">Bump &amp; Normals</div><div style="position:absolute;left:189px;top:413px;width:2px;height:2px;background:#ddd"></div><div class="t" style="left:191.5px;top:412.50px;font-size:3px;line-height:3.5615384615384613px;color:#ddd">Displacement</div><div style="position:absolute;left:189px;top:417px;width:2px;height:2px;background:#ddd"></div><div class="t" style="left:191.5px;top:416.50px;font-size:3px;line-height:3.5615384615384613px;color:#ddd">Settings</div><div style="position:absolute;left:189px;top:420px;width:2px;height:2px;background:#ddd"></div><div class="t" style="left:191.5px;top:420.50px;font-size:3px;line-height:3.5615384615384613px;color:#ddd">Other</div><div style="position:absolute;left:189px;top:424px;width:2px;height:2px;background:#5aa"></div><div class="t" style="left:191.5px;top:423.50px;font-size:3px;line-height:3.5615384615384613px;color:#7a9a9a">ior</div><div style="position:absolute;left:189px;top:427px;width:2px;height:2px;background:#5aa"></div><div class="t" style="left:191.5px;top:427.50px;font-size:3px;line-height:3.5615384615384613px;color:#7a9a9a">rough</div><div style="position:absolute;left:189px;top:431px;width:2px;height:2px;background:#5aa"></div><div class="t" style="left:191.5px;top:430.50px;font-size:3px;line-height:3.5615384615384613px;color:#7a9a9a">metal</div><div style="position:absolute;left:189px;top:435px;width:2px;height:2px;background:#3a8ad0"></div><div class="t" style="left:191.5px;top:434.50px;font-size:3px;line-height:3.5615384615384613px;color:#7a9a9a">sheen</div><div style="position:absolute;left:189px;top:438px;width:2px;height:2px;background:#5aa"></div><div class="t" style="left:191.5px;top:437.50px;font-size:3px;line-height:3.5615384615384613px;color:#7a9a9a">coat</div><div style="position:absolute;left:189px;top:442px;width:2px;height:2px;background:#2c2"></div><div class="t" style="left:191.5px;top:441.50px;font-size:3px;line-height:3.5615384615384613px;color:#7a9a9a">N</div><div style="position:absolute;left:226px;top:399.2px;width:2px;height:2px;background:#ccc;"></div><div style="position:absolute;left:226px;top:402.2px;width:2px;height:2px;background:#5aa;"></div><div style="position:absolute;left:226px;top:405.2px;width:2px;height:2px;background:#e06030;"></div><div style="position:absolute;left:190px;top:375.5px;width:3px;height:3px;background:#3a7ac8;border-radius:1px"></div><div style="position:absolute;left:194px;top:375.5px;width:3px;height:3px;background:#888;border-radius:1px"></div><div style="position:absolute;left:198px;top:375.5px;width:3px;height:3px;background:#d04050;border-radius:1px"></div><div class="t" style="left:190px;top:378.9px;font-size:4.4px;color:#4a4010;">Principled Shader</div><div class="t" style="left:190px;top:383.9px;font-size:4.752000000000001px;color:#e0d8b0;">Gravel_Dry_Ground_shd</div><div style="position:absolute;left:134px;top:395px;width:4px;height:3px;background:#4a70a0;"></div><div class="t" style="left:134px;top:399.4px;font-size:4.4px;color:#4a4010;">Triad Boxes</div><div class="t" style="left:134px;top:404.9px;font-size:4.752000000000001px;color:#e0d8b0;">tile_multiplier</div><div style="position:absolute;left:127.5px;top:499px;width:37.5px;height:30px;background:#d6d6d6;border-radius:2px 2px 3px 3px;box-shadow:0 0 0 0.6px #6f8a82;"></div><div style="position:absolute;left:127.5px;top:506.5px;width:37.5px;height:18.0px;background:#3c3c3c;"></div><div style="position:absolute;left:156.0px;top:500.5px;width:0.8px;height:4.5px;background:#bdbdbd;"></div><div style="position:absolute;left:159.0px;top:500.5px;width:0.8px;height:4.5px;background:#bdbdbd;"></div><div style="position:absolute;left:162.0px;top:500.5px;width:0.8px;height:4.5px;background:#bdbdbd;"></div><div style="position:absolute;left:129.0px;top:500.2px;width:6px;height:5.1px;background:#2a6eb0;"></div><div style="position:absolute;left:153.0px;top:526.2px;width:1px;height:1px;background:#666;"></div><div style="position:absolute;left:157.0px;top:526.2px;width:1.5px;height:1px;background:#555;"></div><div style="position:absolute;left:161.0px;top:526.2px;width:1px;height:1px;background:#666;"></div><div style="position:absolute;left:126.5px;top:507px;width:2px;height:2px;background:#5aa"></div><div class="t" style="left:129.0px;top:506.50px;font-size:3px;line-height:3.6px;color:#aaa">uv</div><div style="position:absolute;left:126.5px;top:511px;width:2px;height:2px;background:#2c2"></div><div class="t" style="left:129.0px;top:510.50px;font-size:3px;line-height:3.6px;color:#aaa">size</div><div style="position:absolute;left:126.5px;top:514px;width:2px;height:2px;background:#2c2"></div><div class="t" style="left:129.0px;top:514.50px;font-size:3px;line-height:3.6px;color:#aaa">offset</div><div style="position:absolute;left:126.5px;top:518px;width:2px;height:2px;background:#5aa"></div><div class="t" style="left:129.0px;top:517.50px;font-size:3px;line-height:3.6px;color:#aaa">angle</div><div style="position:absolute;left:126.5px;top:522px;width:2px;height:2px;background:#5aa"></div><div class="t" style="left:129.0px;top:521.50px;font-size:3px;line-height:3.6px;color:#aaa">scale</div><div style="position:absolute;left:164.0px;top:507.5px;width:2px;height:2px;background:#3a8ad0;"></div><div style="position:absolute;left:164.0px;top:510.5px;width:2px;height:2px;background:#5aa;"></div><div style="position:absolute;left:184px;top:478px;width:37px;height:57.5px;background:#d6d6d6;border-radius:2px 2px 3px 3px;box-shadow:0 0 0 0.6px #6f8a82;"></div><div style="position:absolute;left:184px;top:485.2px;width:37px;height:46.3px;background:#3c3c3c;"></div><div style="position:absolute;left:212px;top:479.5px;width:0.8px;height:4.2px;background:#bdbdbd;"></div><div style="position:absolute;left:215px;top:479.5px;width:0.8px;height:4.2px;background:#bdbdbd;"></div><div style="position:absolute;left:218.2px;top:478.8px;width:2.8px;height:6.4px;background:#c4434a;"></div><div style="position:absolute;left:218.8px;top:480.5px;width:1px;height:2px;background:#e0a030;"></div><svg style="position:absolute;left:186px;top:478.5px" width="8" height="6.2" viewBox="0 0 8 7"><circle cx="4" cy="1.6" r="1.1" fill="none" stroke="#a8a8a8" stroke-width="0.6"/><path d="M1 3.5 L4 3 L7 3.5 M4 3 V5 L2 7 M4 5 L6 7" stroke="#a8a8a8" stroke-width="0.6" fill="none"/><circle cx="4" cy="0.6" r="0.6" fill="#e0b030"/><circle cx="6" cy="5.5" r="0.7" fill="#9cc8e0"/></svg><div style="position:absolute;left:209px;top:532.7px;width:1px;height:1px;background:#666;"></div><div style="position:absolute;left:213px;top:532.7px;width:1.5px;height:1px;background:#555;"></div><div style="position:absolute;left:217px;top:532.7px;width:1px;height:1px;background:#666;"></div><div style="position:absolute;left:183px;top:486px;width:2px;height:2px;background:#ddd"></div><div class="t" style="left:185.5px;top:485.50px;font-size:3px;line-height:3.5615384615384613px;color:#ddd">Surface</div><div style="position:absolute;left:183px;top:490px;width:2px;height:2px;background:#ddd"></div><div class="t" style="left:185.5px;top:489.50px;font-size:3px;line-height:3.5615384615384613px;color:#ddd">Opacity</div><div style="position:absolute;left:183px;top:493px;width:2px;height:2px;background:#ddd"></div><div class="t" style="left:185.5px;top:492.50px;font-size:3px;line-height:3.5615384615384613px;color:#ddd">Emission</div><div style="position:absolute;left:183px;top:497px;width:2px;height:2px;background:#ddd"></div><div class="t" style="left:185.5px;top:496.50px;font-size:3px;line-height:3.5615384615384613px;color:#ddd">Bump &amp; Normals</div><div style="position:absolute;left:183px;top:500px;width:2px;height:2px;background:#ddd"></div><div class="t" style="left:185.5px;top:499.50px;font-size:3px;line-height:3.5615384615384613px;color:#ddd">Displacement</div><div style="position:absolute;left:183px;top:504px;width:2px;height:2px;background:#ddd"></div><div class="t" style="left:185.5px;top:503.50px;font-size:3px;line-height:3.5615384615384613px;color:#ddd">Settings</div><div style="position:absolute;left:183px;top:507px;width:2px;height:2px;background:#ddd"></div><div class="t" style="left:185.5px;top:507.50px;font-size:3px;line-height:3.5615384615384613px;color:#ddd">Other</div><div style="position:absolute;left:183px;top:511px;width:2px;height:2px;background:#5aa"></div><div class="t" style="left:185.5px;top:510.50px;font-size:3px;line-height:3.5615384615384613px;color:#7a9a9a">ior</div><div style="position:absolute;left:183px;top:514px;width:2px;height:2px;background:#5aa"></div><div class="t" style="left:185.5px;top:514.50px;font-size:3px;line-height:3.5615384615384613px;color:#7a9a9a">rough</div><div style="position:absolute;left:183px;top:518px;width:2px;height:2px;background:#5aa"></div><div class="t" style="left:185.5px;top:517.50px;font-size:3px;line-height:3.5615384615384613px;color:#7a9a9a">metal</div><div style="position:absolute;left:183px;top:522px;width:2px;height:2px;background:#3a8ad0"></div><div class="t" style="left:185.5px;top:521.50px;font-size:3px;line-height:3.5615384615384613px;color:#7a9a9a">sheen</div><div style="position:absolute;left:183px;top:525px;width:2px;height:2px;background:#5aa"></div><div class="t" style="left:185.5px;top:524.50px;font-size:3px;line-height:3.5615384615384613px;color:#7a9a9a">coat</div><div style="position:absolute;left:183px;top:529px;width:2px;height:2px;background:#2c2"></div><div class="t" style="left:185.5px;top:528.50px;font-size:3px;line-height:3.5615384615384613px;color:#7a9a9a">N</div><div style="position:absolute;left:220px;top:486.2px;width:2px;height:2px;background:#ccc;"></div><div style="position:absolute;left:220px;top:489.2px;width:2px;height:2px;background:#5aa;"></div><div style="position:absolute;left:220px;top:492.2px;width:2px;height:2px;background:#e06030;"></div><div style="position:absolute;left:184px;top:462px;width:3px;height:3px;background:#3a7ac8;border-radius:1px"></div><div style="position:absolute;left:188px;top:462px;width:3px;height:3px;background:#888;border-radius:1px"></div><div style="position:absolute;left:192px;top:462px;width:3px;height:3px;background:#d04050;border-radius:1px"></div><div class="t" style="left:184px;top:468.9px;font-size:4.4px;color:#4a4010;"></div><div class="t" style="left:184px;top:472.9px;font-size:4.752000000000001px;color:#e0d0b0;">Gravel_Ground_shd</div><div class="t" style="left:128px;top:492.9px;font-size:4.752000000000001px;color:#e0d0b0;">tile_multiplier1</div><div style="position:absolute;left:45.3px;top:404px;width:38.4px;height:17.8px;background:#d6d6d6;border-radius:2px 2px 3px 3px;box-shadow:0 0 0 1px #d8b010;"></div><div style="position:absolute;left:45.3px;top:412px;width:38.4px;height:5.300000000000001px;background:#3c3c3c;"></div><div style="position:absolute;left:74.69999999999999px;top:405.5px;width:0.8px;height:5px;background:#bdbdbd;"></div><div style="position:absolute;left:77.69999999999999px;top:405.5px;width:0.8px;height:5px;background:#bdbdbd;"></div><div style="position:absolute;left:80.69999999999999px;top:405.5px;width:0.8px;height:5px;background:#bdbdbd;"></div><div style="position:absolute;left:47.3px;top:405px;width:6px;height:6px;border-radius:50%;border:0.8px solid #777;box-sizing:border-box"></div><div style="position:absolute;left:71.69999999999999px;top:419.0px;width:1px;height:1px;background:#666;"></div><div style="position:absolute;left:75.69999999999999px;top:419.0px;width:1.5px;height:1px;background:#555;"></div><div style="position:absolute;left:79.69999999999999px;top:419.0px;width:1px;height:1px;background:#666;"></div><div style="position:absolute;left:44.3px;top:414px;width:2px;height:2px;background:#eee"></div><div class="t" style="left:46.8px;top:412.50px;font-size:3px;line-height:5.300000000000001px;color:#aaa">input</div><div class="t" style="left:46px;top:398.9px;font-size:4.752000000000001px;color:#d8ccb0;">General_shader_controler</div><div style="position:absolute;left:259px;top:468px;width:38px;height:72px;background:#d6d6d6;border-radius:2px 2px 3px 3px;box-shadow:0 0 0 0.6px #6f8a82;"></div><div style="position:absolute;left:259px;top:475.5px;width:38px;height:60.0px;background:#3c3c3c;"></div><div style="position:absolute;left:288px;top:469.5px;width:0.8px;height:4.5px;background:#bdbdbd;"></div><div style="position:absolute;left:291px;top:469.5px;width:0.8px;height:4.5px;background:#bdbdbd;"></div><div style="position:absolute;left:294px;top:469.5px;width:0.8px;height:4.5px;background:#bdbdbd;"></div><div style="position:absolute;left:261px;top:469px;width:5.5px;height:5.5px;border-radius:50%;background:#333"></div><svg style="position:absolute;left:261px;top:469px" width="5.5" height="5.5" viewBox="0 0 10 10"><path d="M2.5 2.5 L7.5 7.5 M7.5 2.5 L2.5 7.5 M5 1.5 V8.5" stroke="#ddd" stroke-width="1.3"/></svg><div style="position:absolute;left:285px;top:537.2px;width:1px;height:1px;background:#666;"></div><div style="position:absolute;left:289px;top:537.2px;width:1.5px;height:1px;background:#555;"></div><div style="position:absolute;left:293px;top:537.2px;width:1px;height:1px;background:#666;"></div><div style="position:absolute;left:258px;top:476px;width:2px;height:2px;background:#5aa"></div><div class="t" style="left:260.5px;top:476.50px;font-size:3px;line-height:3.5294117647058822px;color:#999">uv</div><div style="position:absolute;left:258px;top:480px;width:2px;height:2px;background:#5aa"></div><div class="t" style="left:260.5px;top:479.50px;font-size:3px;line-height:3.5294117647058822px;color:#999">clr</div><div style="position:absolute;left:258px;top:483px;width:2px;height:2px;background:#a89878"></div><div class="t" style="left:260.5px;top:483.50px;font-size:3px;line-height:3.5294117647058822px;color:#999">map</div><div style="position:absolute;left:258px;top:487px;width:2px;height:2px;background:#3a8ad0"></div><div class="t" style="left:260.5px;top:486.50px;font-size:3px;line-height:3.5294117647058822px;color:#5a9ad8">udim</div><div style="position:absolute;left:258px;top:490px;width:2px;height:2px;background:#a89878"></div><div class="t" style="left:260.5px;top:490.50px;font-size:3px;line-height:3.5294117647058822px;color:#999">wrapmode</div><div style="position:absolute;left:258px;top:494px;width:2px;height:2px;background:#a89878"></div><div class="t" style="left:260.5px;top:493.50px;font-size:3px;line-height:3.5294117647058822px;color:#999">sizemod</div><div style="position:absolute;left:258px;top:497px;width:2px;height:2px;background:#a89878"></div><div class="t" style="left:260.5px;top:497.50px;font-size:3px;line-height:3.5294117647058822px;color:#999">flt</div><div style="position:absolute;left:258px;top:501px;width:2px;height:2px;background:#3a8ad0"></div><div class="t" style="left:260.5px;top:500.50px;font-size:3px;line-height:3.5294117647058822px;color:#5a9ad8">width</div><div style="position:absolute;left:258px;top:504px;width:2px;height:2px;background:#5aa"></div><div class="t" style="left:260.5px;top:504.50px;font-size:3px;line-height:3.5294117647058822px;color:#999">blur</div><div style="position:absolute;left:258px;top:508px;width:2px;height:2px;background:#5aa"></div><div class="t" style="left:260.5px;top:507.50px;font-size:3px;line-height:3.5294117647058822px;color:#999">srcmode</div><div style="position:absolute;left:258px;top:512px;width:2px;height:2px;background:#e0b020"></div><div class="t" style="left:260.5px;top:511.50px;font-size:3px;line-height:3.5294117647058822px;color:#e0b020">border</div><div style="position:absolute;left:258px;top:515px;width:2px;height:2px;background:#3a8ad0"></div><div class="t" style="left:260.5px;top:514.50px;font-size:3px;line-height:3.5294117647058822px;color:#5a9ad8">lerpgain</div><div style="position:absolute;left:258px;top:519px;width:2px;height:2px;background:#3a8ad0"></div><div class="t" style="left:260.5px;top:518.50px;font-size:3px;line-height:3.5294117647058822px;color:#5a9ad8">edge</div><div style="position:absolute;left:258px;top:522px;width:2px;height:2px;background:#e0b020"></div><div class="t" style="left:260.5px;top:521.50px;font-size:3px;line-height:3.5294117647058822px;color:#e0b020">spot</div><div style="position:absolute;left:258px;top:526px;width:2px;height:2px;background:#a89878"></div><div class="t" style="left:260.5px;top:525.50px;font-size:3px;line-height:3.5294117647058822px;color:#999">channel</div><div style="position:absolute;left:258px;top:529px;width:2px;height:2px;background:#3a8ad0"></div><div class="t" style="left:260.5px;top:528.50px;font-size:3px;line-height:3.5294117647058822px;color:#5a9ad8">extrapol</div><div style="position:absolute;left:258px;top:533px;width:2px;height:2px;background:#3a8ad0"></div><div class="t" style="left:260.5px;top:532.50px;font-size:3px;line-height:3.5294117647058822px;color:#5a9ad8">alpha</div><div style="position:absolute;left:296px;top:476.5px;width:2px;height:2px;background:#5a5;"></div><div class="t" style="left:260px;top:462.4px;font-size:4.928px;color:#d8ccb0;">texture0</div><div style="position:absolute;left:304px;top:405px;width:37.5px;height:31px;background:#d6d6d6;border-radius:2px 2px 3px 3px;box-shadow:0 0 0 0.6px #6f8a82;"></div><div style="position:absolute;left:304px;top:412.8px;width:37.5px;height:18.6px;background:#3c3c3c;"></div><div style="position:absolute;left:332.5px;top:406.5px;width:0.8px;height:4.8px;background:#bdbdbd;"></div><div style="position:absolute;left:335.5px;top:406.5px;width:0.8px;height:4.8px;background:#bdbdbd;"></div><div style="position:absolute;left:338.5px;top:406.5px;width:0.8px;height:4.8px;background:#bdbdbd;"></div><div style="position:absolute;left:329.5px;top:433.2px;width:1px;height:1px;background:#666;"></div><div style="position:absolute;left:333.5px;top:433.2px;width:1.5px;height:1px;background:#555;"></div><div style="position:absolute;left:337.5px;top:433.2px;width:1px;height:1px;background:#666;"></div><div style="position:absolute;left:303px;top:414px;width:2px;height:2px;background:#d05030"></div><div class="t" style="left:305.5px;top:413.50px;font-size:3px;line-height:3.72px;color:#c08040">a</div><div style="position:absolute;left:303px;top:417px;width:2px;height:2px;background:#d05030"></div><div class="t" style="left:305.5px;top:417.50px;font-size:3px;line-height:3.72px;color:#c08040">b</div><div style="position:absolute;left:303px;top:421px;width:2px;height:2px;background:#3a8ad0"></div><div class="t" style="left:305.5px;top:420.50px;font-size:3px;line-height:3.72px;color:#5a9ad8">alpha</div><div style="position:absolute;left:303px;top:425px;width:2px;height:2px;background:#3a8ad0"></div><div class="t" style="left:305.5px;top:424.50px;font-size:3px;line-height:3.72px;color:#5a9ad8">multiscatter</div><div style="position:absolute;left:303px;top:429px;width:2px;height:2px;background:#3a8ad0"></div><div class="t" style="left:305.5px;top:428.50px;font-size:3px;line-height:3.72px;color:#5a9ad8">transparentmask</div><div style="position:absolute;left:340.5px;top:413.8px;width:2px;height:2px;background:#e08020;"></div><div class="t" style="left:305px;top:399.9px;font-size:4.928px;color:#d8ccb0;">layermix1</div><div style="position:absolute;left:317px;top:448px;width:38px;height:72px;background:#d6d6d6;border-radius:2px 2px 3px 3px;box-shadow:0 0 0 0.6px #6f8a82;"></div><div style="position:absolute;left:317px;top:455.5px;width:38px;height:60.0px;background:#3c3c3c;"></div><div style="position:absolute;left:346px;top:449.5px;width:0.8px;height:4.5px;background:#bdbdbd;"></div><div style="position:absolute;left:349px;top:449.5px;width:0.8px;height:4.5px;background:#bdbdbd;"></div><div style="position:absolute;left:352px;top:449.5px;width:0.8px;height:4.5px;background:#bdbdbd;"></div><div style="position:absolute;left:319px;top:449px;width:5.5px;height:5.5px;border-radius:50%;background:#333"></div><svg style="position:absolute;left:319px;top:449px" width="5.5" height="5.5" viewBox="0 0 10 10"><path d="M2.5 2.5 L7.5 7.5 M7.5 2.5 L2.5 7.5 M5 1.5 V8.5" stroke="#ddd" stroke-width="1.3"/></svg><div style="position:absolute;left:343px;top:517.2px;width:1px;height:1px;background:#666;"></div><div style="position:absolute;left:347px;top:517.2px;width:1.5px;height:1px;background:#555;"></div><div style="position:absolute;left:351px;top:517.2px;width:1px;height:1px;background:#666;"></div><div style="position:absolute;left:316px;top:456px;width:2px;height:2px;background:#5aa"></div><div class="t" style="left:318.5px;top:456.50px;font-size:3px;line-height:3.5294117647058822px;color:#999">uv</div><div style="position:absolute;left:316px;top:460px;width:2px;height:2px;background:#5aa"></div><div class="t" style="left:318.5px;top:459.50px;font-size:3px;line-height:3.5294117647058822px;color:#999">clr</div><div style="position:absolute;left:316px;top:463px;width:2px;height:2px;background:#a89878"></div><div class="t" style="left:318.5px;top:463.50px;font-size:3px;line-height:3.5294117647058822px;color:#999">map</div><div style="position:absolute;left:316px;top:467px;width:2px;height:2px;background:#3a8ad0"></div><div class="t" style="left:318.5px;top:466.50px;font-size:3px;line-height:3.5294117647058822px;color:#5a9ad8">udim</div><div style="position:absolute;left:316px;top:470px;width:2px;height:2px;background:#a89878"></div><div class="t" style="left:318.5px;top:470.50px;font-size:3px;line-height:3.5294117647058822px;color:#999">wrapmode</div><div style="position:absolute;left:316px;top:474px;width:2px;height:2px;background:#a89878"></div><div class="t" style="left:318.5px;top:473.50px;font-size:3px;line-height:3.5294117647058822px;color:#999">sizemod</div><div style="position:absolute;left:316px;top:477px;width:2px;height:2px;background:#a89878"></div><div class="t" style="left:318.5px;top:477.50px;font-size:3px;line-height:3.5294117647058822px;color:#999">flt</div><div style="position:absolute;left:316px;top:481px;width:2px;height:2px;background:#3a8ad0"></div><div class="t" style="left:318.5px;top:480.50px;font-size:3px;line-height:3.5294117647058822px;color:#5a9ad8">width</div><div style="position:absolute;left:316px;top:484px;width:2px;height:2px;background:#5aa"></div><div class="t" style="left:318.5px;top:484.50px;font-size:3px;line-height:3.5294117647058822px;color:#999">blur</div><div style="position:absolute;left:316px;top:488px;width:2px;height:2px;background:#5aa"></div><div class="t" style="left:318.5px;top:487.50px;font-size:3px;line-height:3.5294117647058822px;color:#999">srcmode</div><div style="position:absolute;left:316px;top:492px;width:2px;height:2px;background:#e0b020"></div><div class="t" style="left:318.5px;top:491.50px;font-size:3px;line-height:3.5294117647058822px;color:#e0b020">border</div><div style="position:absolute;left:316px;top:495px;width:2px;height:2px;background:#3a8ad0"></div><div class="t" style="left:318.5px;top:494.50px;font-size:3px;line-height:3.5294117647058822px;color:#5a9ad8">lerpgain</div><div style="position:absolute;left:316px;top:499px;width:2px;height:2px;background:#3a8ad0"></div><div class="t" style="left:318.5px;top:498.50px;font-size:3px;line-height:3.5294117647058822px;color:#5a9ad8">edge</div><div style="position:absolute;left:316px;top:502px;width:2px;height:2px;background:#e0b020"></div><div class="t" style="left:318.5px;top:501.50px;font-size:3px;line-height:3.5294117647058822px;color:#e0b020">spot</div><div style="position:absolute;left:316px;top:506px;width:2px;height:2px;background:#a89878"></div><div class="t" style="left:318.5px;top:505.50px;font-size:3px;line-height:3.5294117647058822px;color:#999">channel</div><div style="position:absolute;left:316px;top:509px;width:2px;height:2px;background:#3a8ad0"></div><div class="t" style="left:318.5px;top:508.50px;font-size:3px;line-height:3.5294117647058822px;color:#5a9ad8">extrapol</div><div style="position:absolute;left:316px;top:513px;width:2px;height:2px;background:#3a8ad0"></div><div class="t" style="left:318.5px;top:512.50px;font-size:3px;line-height:3.5294117647058822px;color:#5a9ad8">alpha</div><div style="position:absolute;left:354px;top:456.5px;width:2px;height:2px;background:#5a5;"></div><div class="t" style="left:318px;top:442.9px;font-size:4.928px;color:#d8ccb0;">texture2</div><div style="position:absolute;left:365.3px;top:355.5px;width:37.5px;height:31px;background:#d6d6d6;border-radius:2px 2px 3px 3px;box-shadow:0 0 0 0.6px #6f8a82;"></div><div style="position:absolute;left:365.3px;top:363.3px;width:37.5px;height:18.6px;background:#3c3c3c;"></div><div style="position:absolute;left:393.8px;top:357.0px;width:0.8px;height:4.8px;background:#bdbdbd;"></div><div style="position:absolute;left:396.8px;top:357.0px;width:0.8px;height:4.8px;background:#bdbdbd;"></div><div style="position:absolute;left:399.8px;top:357.0px;width:0.8px;height:4.8px;background:#bdbdbd;"></div><div style="position:absolute;left:390.8px;top:383.7px;width:1px;height:1px;background:#666;"></div><div style="position:absolute;left:394.8px;top:383.7px;width:1.5px;height:1px;background:#555;"></div><div style="position:absolute;left:398.8px;top:383.7px;width:1px;height:1px;background:#666;"></div><div style="position:absolute;left:364.3px;top:364px;width:2px;height:2px;background:#d05030"></div><div class="t" style="left:366.8px;top:363.50px;font-size:3px;line-height:3.72px;color:#c08040">a</div><div style="position:absolute;left:364.3px;top:368px;width:2px;height:2px;background:#d05030"></div><div class="t" style="left:366.8px;top:367.50px;font-size:3px;line-height:3.72px;color:#c08040">b</div><div style="position:absolute;left:364.3px;top:372px;width:2px;height:2px;background:#3a8ad0"></div><div class="t" style="left:366.8px;top:371.50px;font-size:3px;line-height:3.72px;color:#5a9ad8">alpha</div><div style="position:absolute;left:364.3px;top:375px;width:2px;height:2px;background:#3a8ad0"></div><div class="t" style="left:366.8px;top:374.50px;font-size:3px;line-height:3.72px;color:#5a9ad8">multiscatter</div><div style="position:absolute;left:364.3px;top:379px;width:2px;height:2px;background:#3a8ad0"></div><div class="t" style="left:366.8px;top:378.50px;font-size:3px;line-height:3.72px;color:#5a9ad8">transparentmask</div><div style="position:absolute;left:401.8px;top:364.3px;width:2px;height:2px;background:#e08020;"></div><div class="t" style="left:366px;top:350.4px;font-size:4.928px;color:#d8ccb0;">layermix2</div><div style="position:absolute;left:391.7px;top:407.6px;width:38px;height:72px;background:#d6d6d6;border-radius:2px 2px 3px 3px;box-shadow:0 0 0 0.6px #6f8a82;"></div><div style="position:absolute;left:391.7px;top:415.1px;width:38px;height:60.0px;background:#3c3c3c;"></div><div style="position:absolute;left:420.7px;top:409.1px;width:0.8px;height:4.5px;background:#bdbdbd;"></div><div style="position:absolute;left:423.7px;top:409.1px;width:0.8px;height:4.5px;background:#bdbdbd;"></div><div style="position:absolute;left:426.7px;top:409.1px;width:0.8px;height:4.5px;background:#bdbdbd;"></div><div style="position:absolute;left:393.7px;top:408.6px;width:5.5px;height:5.5px;border-radius:50%;background:#333"></div><svg style="position:absolute;left:393.7px;top:408.6px" width="5.5" height="5.5" viewBox="0 0 10 10"><path d="M2.5 2.5 L7.5 7.5 M7.5 2.5 L2.5 7.5 M5 1.5 V8.5" stroke="#ddd" stroke-width="1.3"/></svg><div style="position:absolute;left:417.7px;top:476.8px;width:1px;height:1px;background:#666;"></div><div style="position:absolute;left:421.7px;top:476.8px;width:1.5px;height:1px;background:#555;"></div><div style="position:absolute;left:425.7px;top:476.8px;width:1px;height:1px;background:#666;"></div><div style="position:absolute;left:390.7px;top:416px;width:2px;height:2px;background:#5aa"></div><div class="t" style="left:393.2px;top:415.50px;font-size:3px;line-height:3.5294117647058822px;color:#999">uv</div><div style="position:absolute;left:390.7px;top:419px;width:2px;height:2px;background:#5aa"></div><div class="t" style="left:393.2px;top:419.50px;font-size:3px;line-height:3.5294117647058822px;color:#999">clr</div><div style="position:absolute;left:390.7px;top:423px;width:2px;height:2px;background:#a89878"></div><div class="t" style="left:393.2px;top:422.50px;font-size:3px;line-height:3.5294117647058822px;color:#999">map</div><div style="position:absolute;left:390.7px;top:426px;width:2px;height:2px;background:#3a8ad0"></div><div class="t" style="left:393.2px;top:426.50px;font-size:3px;line-height:3.5294117647058822px;color:#5a9ad8">udim</div><div style="position:absolute;left:390.7px;top:430px;width:2px;height:2px;background:#a89878"></div><div class="t" style="left:393.2px;top:429.50px;font-size:3px;line-height:3.5294117647058822px;color:#999">wrapmode</div><div style="position:absolute;left:390.7px;top:434px;width:2px;height:2px;background:#a89878"></div><div class="t" style="left:393.2px;top:433.50px;font-size:3px;line-height:3.5294117647058822px;color:#999">sizemod</div><div style="position:absolute;left:390.7px;top:437px;width:2px;height:2px;background:#a89878"></div><div class="t" style="left:393.2px;top:436.50px;font-size:3px;line-height:3.5294117647058822px;color:#999">flt</div><div style="position:absolute;left:390.7px;top:441px;width:2px;height:2px;background:#3a8ad0"></div><div class="t" style="left:393.2px;top:440.50px;font-size:3px;line-height:3.5294117647058822px;color:#5a9ad8">width</div><div style="position:absolute;left:390.7px;top:444px;width:2px;height:2px;background:#5aa"></div><div class="t" style="left:393.2px;top:443.50px;font-size:3px;line-height:3.5294117647058822px;color:#999">blur</div><div style="position:absolute;left:390.7px;top:448px;width:2px;height:2px;background:#5aa"></div><div class="t" style="left:393.2px;top:447.50px;font-size:3px;line-height:3.5294117647058822px;color:#999">srcmode</div><div style="position:absolute;left:390.7px;top:451px;width:2px;height:2px;background:#e0b020"></div><div class="t" style="left:393.2px;top:450.50px;font-size:3px;line-height:3.5294117647058822px;color:#e0b020">border</div><div style="position:absolute;left:390.7px;top:455px;width:2px;height:2px;background:#3a8ad0"></div><div class="t" style="left:393.2px;top:454.50px;font-size:3px;line-height:3.5294117647058822px;color:#5a9ad8">lerpgain</div><div style="position:absolute;left:390.7px;top:458px;width:2px;height:2px;background:#3a8ad0"></div><div class="t" style="left:393.2px;top:457.50px;font-size:3px;line-height:3.5294117647058822px;color:#5a9ad8">edge</div><div style="position:absolute;left:390.7px;top:462px;width:2px;height:2px;background:#e0b020"></div><div class="t" style="left:393.2px;top:461.50px;font-size:3px;line-height:3.5294117647058822px;color:#e0b020">spot</div><div style="position:absolute;left:390.7px;top:465px;width:2px;height:2px;background:#a89878"></div><div class="t" style="left:393.2px;top:465.50px;font-size:3px;line-height:3.5294117647058822px;color:#999">channel</div><div style="position:absolute;left:390.7px;top:469px;width:2px;height:2px;background:#3a8ad0"></div><div class="t" style="left:393.2px;top:468.50px;font-size:3px;line-height:3.5294117647058822px;color:#5a9ad8">extrapol</div><div style="position:absolute;left:390.7px;top:472px;width:2px;height:2px;background:#3a8ad0"></div><div class="t" style="left:393.2px;top:472.50px;font-size:3px;line-height:3.5294117647058822px;color:#5a9ad8">alpha</div><div style="position:absolute;left:428.7px;top:416.1px;width:2px;height:2px;background:#5a5;"></div><div class="t" style="left:392.5px;top:401.9px;font-size:4.928px;color:#d8ccb0;">texture1</div><div style="position:absolute;left:437px;top:355.5px;width:37.5px;height:31px;background:#d6d6d6;border-radius:2px 2px 3px 3px;box-shadow:0 0 0 0.6px #6f8a82;"></div><div style="position:absolute;left:437px;top:363.3px;width:37.5px;height:18.6px;background:#3c3c3c;"></div><div style="position:absolute;left:465.5px;top:357.0px;width:0.8px;height:4.8px;background:#bdbdbd;"></div><div style="position:absolute;left:468.5px;top:357.0px;width:0.8px;height:4.8px;background:#bdbdbd;"></div><div style="position:absolute;left:471.5px;top:357.0px;width:0.8px;height:4.8px;background:#bdbdbd;"></div><div style="position:absolute;left:462.5px;top:383.7px;width:1px;height:1px;background:#666;"></div><div style="position:absolute;left:466.5px;top:383.7px;width:1.5px;height:1px;background:#555;"></div><div style="position:absolute;left:470.5px;top:383.7px;width:1px;height:1px;background:#666;"></div><div style="position:absolute;left:436px;top:364px;width:2px;height:2px;background:#d05030"></div><div class="t" style="left:438.5px;top:363.50px;font-size:3px;line-height:3.72px;color:#c08040">a</div><div style="position:absolute;left:436px;top:368px;width:2px;height:2px;background:#d05030"></div><div class="t" style="left:438.5px;top:367.50px;font-size:3px;line-height:3.72px;color:#c08040">b</div><div style="position:absolute;left:436px;top:372px;width:2px;height:2px;background:#3a8ad0"></div><div class="t" style="left:438.5px;top:371.50px;font-size:3px;line-height:3.72px;color:#5a9ad8">alpha</div><div style="position:absolute;left:436px;top:375px;width:2px;height:2px;background:#3a8ad0"></div><div class="t" style="left:438.5px;top:374.50px;font-size:3px;line-height:3.72px;color:#5a9ad8">multiscatter</div><div style="position:absolute;left:436px;top:379px;width:2px;height:2px;background:#3a8ad0"></div><div class="t" style="left:438.5px;top:378.50px;font-size:3px;line-height:3.72px;color:#5a9ad8">transparentmask</div><div style="position:absolute;left:473.5px;top:364.3px;width:2px;height:2px;background:#e08020;"></div><div class="t" style="left:438px;top:350.4px;font-size:4.928px;color:#d8ccb0;">layermix3</div><div style="position:absolute;left:463px;top:416.5px;width:38px;height:72px;background:#d6d6d6;border-radius:2px 2px 3px 3px;box-shadow:0 0 0 0.6px #6f8a82;"></div><div style="position:absolute;left:463px;top:424.0px;width:38px;height:60.0px;background:#3c3c3c;"></div><div style="position:absolute;left:492px;top:418.0px;width:0.8px;height:4.5px;background:#bdbdbd;"></div><div style="position:absolute;left:495px;top:418.0px;width:0.8px;height:4.5px;background:#bdbdbd;"></div><div style="position:absolute;left:498px;top:418.0px;width:0.8px;height:4.5px;background:#bdbdbd;"></div><div style="position:absolute;left:465px;top:417.5px;width:5.5px;height:5.5px;border-radius:50%;background:#333"></div><svg style="position:absolute;left:465px;top:417.5px" width="5.5" height="5.5" viewBox="0 0 10 10"><path d="M2.5 2.5 L7.5 7.5 M7.5 2.5 L2.5 7.5 M5 1.5 V8.5" stroke="#ddd" stroke-width="1.3"/></svg><div style="position:absolute;left:489px;top:485.7px;width:1px;height:1px;background:#666;"></div><div style="position:absolute;left:493px;top:485.7px;width:1.5px;height:1px;background:#555;"></div><div style="position:absolute;left:497px;top:485.7px;width:1px;height:1px;background:#666;"></div><div style="position:absolute;left:462px;top:425px;width:2px;height:2px;background:#5aa"></div><div class="t" style="left:464.5px;top:424.50px;font-size:3px;line-height:3.5294117647058822px;color:#999">uv</div><div style="position:absolute;left:462px;top:428px;width:2px;height:2px;background:#5aa"></div><div class="t" style="left:464.5px;top:428.50px;font-size:3px;line-height:3.5294117647058822px;color:#999">clr</div><div style="position:absolute;left:462px;top:432px;width:2px;height:2px;background:#a89878"></div><div class="t" style="left:464.5px;top:431.50px;font-size:3px;line-height:3.5294117647058822px;color:#999">map</div><div style="position:absolute;left:462px;top:435px;width:2px;height:2px;background:#3a8ad0"></div><div class="t" style="left:464.5px;top:435.50px;font-size:3px;line-height:3.5294117647058822px;color:#5a9ad8">udim</div><div style="position:absolute;left:462px;top:439px;width:2px;height:2px;background:#a89878"></div><div class="t" style="left:464.5px;top:438.50px;font-size:3px;line-height:3.5294117647058822px;color:#999">wrapmode</div><div style="position:absolute;left:462px;top:442px;width:2px;height:2px;background:#a89878"></div><div class="t" style="left:464.5px;top:442.50px;font-size:3px;line-height:3.5294117647058822px;color:#999">sizemod</div><div style="position:absolute;left:462px;top:446px;width:2px;height:2px;background:#a89878"></div><div class="t" style="left:464.5px;top:445.50px;font-size:3px;line-height:3.5294117647058822px;color:#999">flt</div><div style="position:absolute;left:462px;top:449px;width:2px;height:2px;background:#3a8ad0"></div><div class="t" style="left:464.5px;top:449.50px;font-size:3px;line-height:3.5294117647058822px;color:#5a9ad8">width</div><div style="position:absolute;left:462px;top:453px;width:2px;height:2px;background:#5aa"></div><div class="t" style="left:464.5px;top:452.50px;font-size:3px;line-height:3.5294117647058822px;color:#999">blur</div><div style="position:absolute;left:462px;top:457px;width:2px;height:2px;background:#5aa"></div><div class="t" style="left:464.5px;top:456.50px;font-size:3px;line-height:3.5294117647058822px;color:#999">srcmode</div><div style="position:absolute;left:462px;top:460px;width:2px;height:2px;background:#e0b020"></div><div class="t" style="left:464.5px;top:459.50px;font-size:3px;line-height:3.5294117647058822px;color:#e0b020">border</div><div style="position:absolute;left:462px;top:464px;width:2px;height:2px;background:#3a8ad0"></div><div class="t" style="left:464.5px;top:463.50px;font-size:3px;line-height:3.5294117647058822px;color:#5a9ad8">lerpgain</div><div style="position:absolute;left:462px;top:467px;width:2px;height:2px;background:#3a8ad0"></div><div class="t" style="left:464.5px;top:466.50px;font-size:3px;line-height:3.5294117647058822px;color:#5a9ad8">edge</div><div style="position:absolute;left:462px;top:471px;width:2px;height:2px;background:#e0b020"></div><div class="t" style="left:464.5px;top:470.50px;font-size:3px;line-height:3.5294117647058822px;color:#e0b020">spot</div><div style="position:absolute;left:462px;top:474px;width:2px;height:2px;background:#a89878"></div><div class="t" style="left:464.5px;top:473.50px;font-size:3px;line-height:3.5294117647058822px;color:#999">channel</div><div style="position:absolute;left:462px;top:478px;width:2px;height:2px;background:#3a8ad0"></div><div class="t" style="left:464.5px;top:477.50px;font-size:3px;line-height:3.5294117647058822px;color:#5a9ad8">extrapol</div><div style="position:absolute;left:462px;top:481px;width:2px;height:2px;background:#3a8ad0"></div><div class="t" style="left:464.5px;top:480.50px;font-size:3px;line-height:3.5294117647058822px;color:#5a9ad8">alpha</div><div style="position:absolute;left:500px;top:425.0px;width:2px;height:2px;background:#5a5;"></div><div class="t" style="left:464px;top:410.9px;font-size:4.928px;color:#d8ccb0;">texture4</div><div style="position:absolute;left:507px;top:355.5px;width:37.5px;height:31px;background:#d6d6d6;border-radius:2px 2px 3px 3px;box-shadow:0 0 0 0.6px #6f8a82;"></div><div style="position:absolute;left:507px;top:363.3px;width:37.5px;height:18.6px;background:#3c3c3c;"></div><div style="position:absolute;left:535.5px;top:357.0px;width:0.8px;height:4.8px;background:#bdbdbd;"></div><div style="position:absolute;left:538.5px;top:357.0px;width:0.8px;height:4.8px;background:#bdbdbd;"></div><div style="position:absolute;left:541.5px;top:357.0px;width:0.8px;height:4.8px;background:#bdbdbd;"></div><div style="position:absolute;left:532.5px;top:383.7px;width:1px;height:1px;background:#666;"></div><div style="position:absolute;left:536.5px;top:383.7px;width:1.5px;height:1px;background:#555;"></div><div style="position:absolute;left:540.5px;top:383.7px;width:1px;height:1px;background:#666;"></div><div style="position:absolute;left:506px;top:364px;width:2px;height:2px;background:#d05030"></div><div class="t" style="left:508.5px;top:363.50px;font-size:3px;line-height:3.72px;color:#c08040">a</div><div style="position:absolute;left:506px;top:368px;width:2px;height:2px;background:#d05030"></div><div class="t" style="left:508.5px;top:367.50px;font-size:3px;line-height:3.72px;color:#c08040">b</div><div style="position:absolute;left:506px;top:372px;width:2px;height:2px;background:#3a8ad0"></div><div class="t" style="left:508.5px;top:371.50px;font-size:3px;line-height:3.72px;color:#5a9ad8">alpha</div><div style="position:absolute;left:506px;top:375px;width:2px;height:2px;background:#3a8ad0"></div><div class="t" style="left:508.5px;top:374.50px;font-size:3px;line-height:3.72px;color:#5a9ad8">multiscatter</div><div style="position:absolute;left:506px;top:379px;width:2px;height:2px;background:#3a8ad0"></div><div class="t" style="left:508.5px;top:378.50px;font-size:3px;line-height:3.72px;color:#5a9ad8">transparentmask</div><div style="position:absolute;left:543.5px;top:364.3px;width:2px;height:2px;background:#e08020;"></div><div class="t" style="left:508px;top:350.4px;font-size:4.928px;color:#d8ccb0;">layermix0</div><div style="position:absolute;left:565.2px;top:355.5px;width:37.8px;height:20.1px;background:#d6d6d6;border-radius:2px 2px 3px 3px;box-shadow:0 0 0 0.6px #6f8a82;"></div><div style="position:absolute;left:565.2px;top:363.3px;width:37.8px;height:8.100000000000001px;background:#3c3c3c;"></div><div style="position:absolute;left:594.0px;top:357.0px;width:0.8px;height:4.8px;background:#bdbdbd;"></div><div style="position:absolute;left:597.0px;top:357.0px;width:0.8px;height:4.8px;background:#bdbdbd;"></div><div style="position:absolute;left:600.0px;top:357.0px;width:0.8px;height:4.8px;background:#bdbdbd;"></div><div style="position:absolute;left:567.2px;top:356.5px;width:5.8px;height:5.8px;border-radius:50%;border:0.8px solid #777;box-sizing:border-box"></div><div style="position:absolute;left:591.0px;top:372.8px;width:1px;height:1px;background:#666;"></div><div style="position:absolute;left:595.0px;top:372.8px;width:1.5px;height:1px;background:#555;"></div><div style="position:absolute;left:599.0px;top:372.8px;width:1px;height:1px;background:#666;"></div><div style="position:absolute;left:564.2px;top:364px;width:2px;height:2px;background:#e08020"></div><div class="t" style="left:566.7px;top:363.50px;font-size:3px;line-height:4.050000000000001px;color:#c08040">input</div><div style="position:absolute;left:564.2px;top:368px;width:2px;height:2px;background:#eee"></div><div class="t" style="left:566.7px;top:367.50px;font-size:3px;line-height:4.050000000000001px;color:#ccc">next</div><div style="position:absolute;left:602.0px;top:364.3px;width:2px;height:2px;background:#e06030;"></div><div class="t" style="left:566px;top:350.4px;font-size:4.928px;color:#d8ccb0;">Desert_mat_Nearplane</div><svg style="position:absolute;left:0;top:0" width="1079" height="607"><g stroke="#8fb5ad" stroke-width="0.9" stroke-dasharray="1 3.5" opacity="0.55"><line x1="255" y1="327" x2="365" y2="368"/><line x1="370" y1="330" x2="437" y2="368"/><line x1="430" y1="312" x2="507" y2="366"/><line x1="350" y1="402" x2="360" y2="368"/><line x1="403" y1="365" x2="437" y2="365"/><line x1="475" y1="365" x2="507" y2="365"/><line x1="544" y1="364" x2="565" y2="364"/><line x1="254" y1="410" x2="304" y2="413"/><line x1="255" y1="464" x2="302" y2="417"/><line x1="300" y1="435" x2="300" y2="475"/><line x1="257" y1="181" x2="283" y2="199.4"/><line x1="222" y1="235" x2="290.4" y2="279.6"/></g></svg><div class="t" style="left:858.5px;top:58.6px;font-size:11px;font-weight:bold;color:#575757;transform:scaleX(0.955);transform-origin:0 0">VEX Builder</div><div style="position:absolute;left:775px;top:172px;width:37.5px;height:57.7px;background:#d6d6d6;border-radius:2px 2px 3px 3px;box-shadow:0 0 0 0.6px #6f8a82;"></div><div style="position:absolute;left:775px;top:179.2px;width:37.5px;height:46.5px;background:#3c3c3c;"></div><div style="position:absolute;left:803.5px;top:173.5px;width:0.8px;height:4.2px;background:#bdbdbd;"></div><div style="position:absolute;left:806.5px;top:173.5px;width:0.8px;height:4.2px;background:#bdbdbd;"></div><div style="position:absolute;left:809.7px;top:172.8px;width:2.8px;height:6.4px;background:#c4434a;"></div><div style="position:absolute;left:810.3px;top:174.5px;width:1px;height:2px;background:#e0a030;"></div><svg style="position:absolute;left:777px;top:172.5px" width="8" height="6.2" viewBox="0 0 8 7"><circle cx="4" cy="1.6" r="1.1" fill="none" stroke="#a8a8a8" stroke-width="0.6"/><path d="M1 3.5 L4 3 L7 3.5 M4 3 V5 L2 7 M4 5 L6 7" stroke="#a8a8a8" stroke-width="0.6" fill="none"/><circle cx="4" cy="0.6" r="0.6" fill="#e0b030"/><circle cx="6" cy="5.5" r="0.7" fill="#9cc8e0"/></svg><div style="position:absolute;left:800.5px;top:226.89999999999998px;width:1px;height:1px;background:#666;"></div><div style="position:absolute;left:804.5px;top:226.89999999999998px;width:1.5px;height:1px;background:#555;"></div><div style="position:absolute;left:808.5px;top:226.89999999999998px;width:1px;height:1px;background:#666;"></div><div style="position:absolute;left:774px;top:180px;width:2px;height:2px;background:#ddd"></div><div class="t" style="left:776.5px;top:179.50px;font-size:3px;line-height:3.576923076923077px;color:#ddd">Surface</div><div style="position:absolute;left:774px;top:184px;width:2px;height:2px;background:#ddd"></div><div class="t" style="left:776.5px;top:183.50px;font-size:3px;line-height:3.576923076923077px;color:#ddd">Opacity</div><div style="position:absolute;left:774px;top:187px;width:2px;height:2px;background:#ddd"></div><div class="t" style="left:776.5px;top:186.50px;font-size:3px;line-height:3.576923076923077px;color:#ddd">Emission</div><div style="position:absolute;left:774px;top:191px;width:2px;height:2px;background:#ddd"></div><div class="t" style="left:776.5px;top:190.50px;font-size:3px;line-height:3.576923076923077px;color:#ddd">Bump &amp; Normals</div><div style="position:absolute;left:774px;top:194px;width:2px;height:2px;background:#ddd"></div><div class="t" style="left:776.5px;top:194.50px;font-size:3px;line-height:3.576923076923077px;color:#ddd">Displacement</div><div style="position:absolute;left:774px;top:198px;width:2px;height:2px;background:#ddd"></div><div class="t" style="left:776.5px;top:197.50px;font-size:3px;line-height:3.576923076923077px;color:#ddd">Settings</div><div style="position:absolute;left:774px;top:201px;width:2px;height:2px;background:#ddd"></div><div class="t" style="left:776.5px;top:201.50px;font-size:3px;line-height:3.576923076923077px;color:#ddd">Other</div><div style="position:absolute;left:774px;top:205px;width:2px;height:2px;background:#5aa"></div><div class="t" style="left:776.5px;top:204.50px;font-size:3px;line-height:3.576923076923077px;color:#7a9a9a">ior</div><div style="position:absolute;left:774px;top:209px;width:2px;height:2px;background:#5aa"></div><div class="t" style="left:776.5px;top:208.50px;font-size:3px;line-height:3.576923076923077px;color:#7a9a9a">rough</div><div style="position:absolute;left:774px;top:212px;width:2px;height:2px;background:#5aa"></div><div class="t" style="left:776.5px;top:211.50px;font-size:3px;line-height:3.576923076923077px;color:#7a9a9a">metal</div><div style="position:absolute;left:774px;top:216px;width:2px;height:2px;background:#3a8ad0"></div><div class="t" style="left:776.5px;top:215.50px;font-size:3px;line-height:3.576923076923077px;color:#7a9a9a">sheen</div><div style="position:absolute;left:774px;top:219px;width:2px;height:2px;background:#5aa"></div><div class="t" style="left:776.5px;top:219.50px;font-size:3px;line-height:3.576923076923077px;color:#7a9a9a">coat</div><div style="position:absolute;left:774px;top:223px;width:2px;height:2px;background:#2c2"></div><div class="t" style="left:776.5px;top:222.50px;font-size:3px;line-height:3.576923076923077px;color:#7a9a9a">N</div><div style="position:absolute;left:811.5px;top:180.2px;width:2px;height:2px;background:#ccc;"></div><div style="position:absolute;left:811.5px;top:183.2px;width:2px;height:2px;background:#5aa;"></div><div style="position:absolute;left:811.5px;top:186.2px;width:2px;height:2px;background:#e06030;"></div><div style="position:absolute;left:775px;top:156.5px;width:3px;height:3px;background:#3a7ac8;border-radius:1px"></div><div style="position:absolute;left:779px;top:156.5px;width:3px;height:3px;background:#888;border-radius:1px"></div><div style="position:absolute;left:783px;top:156.5px;width:3px;height:3px;background:#d04050;border-radius:1px"></div><div class="t" style="left:774.5px;top:159.9px;font-size:4.4px;color:#555;">Principled Shader</div><div class="t" style="left:774.5px;top:166.3px;font-size:5.2px;color:#d0d0d0;transform:scaleX(0.82);transform-origin:0 0">YUCCA_FROND_UP_MAT</div><div style="position:absolute;left:833.8px;top:172px;width:37.5px;height:57.7px;background:#d6d6d6;border-radius:2px 2px 3px 3px;box-shadow:0 0 0 0.6px #6f8a82;"></div><div style="position:absolute;left:833.8px;top:179.2px;width:37.5px;height:46.5px;background:#3c3c3c;"></div><div style="position:absolute;left:862.3px;top:173.5px;width:0.8px;height:4.2px;background:#bdbdbd;"></div><div style="position:absolute;left:865.3px;top:173.5px;width:0.8px;height:4.2px;background:#bdbdbd;"></div><div style="position:absolute;left:868.5px;top:172.8px;width:2.8px;height:6.4px;background:#c4434a;"></div><div style="position:absolute;left:869.0999999999999px;top:174.5px;width:1px;height:2px;background:#e0a030;"></div><svg style="position:absolute;left:835.8px;top:172.5px" width="8" height="6.2" viewBox="0 0 8 7"><circle cx="4" cy="1.6" r="1.1" fill="none" stroke="#a8a8a8" stroke-width="0.6"/><path d="M1 3.5 L4 3 L7 3.5 M4 3 V5 L2 7 M4 5 L6 7" stroke="#a8a8a8" stroke-width="0.6" fill="none"/><circle cx="4" cy="0.6" r="0.6" fill="#e0b030"/><circle cx="6" cy="5.5" r="0.7" fill="#9cc8e0"/></svg><div style="position:absolute;left:859.3px;top:226.89999999999998px;width:1px;height:1px;background:#666;"></div><div style="position:absolute;left:863.3px;top:226.89999999999998px;width:1.5px;height:1px;background:#555;"></div><div style="position:absolute;left:867.3px;top:226.89999999999998px;width:1px;height:1px;background:#666;"></div><div style="position:absolute;left:832.8px;top:180px;width:2px;height:2px;background:#ddd"></div><div class="t" style="left:835.3px;top:179.50px;font-size:3px;line-height:3.576923076923077px;color:#ddd">Surface</div><div style="position:absolute;left:832.8px;top:184px;width:2px;height:2px;background:#ddd"></div><div class="t" style="left:835.3px;top:183.50px;font-size:3px;line-height:3.576923076923077px;color:#ddd">Opacity</div><div style="position:absolute;left:832.8px;top:187px;width:2px;height:2px;background:#ddd"></div><div class="t" style="left:835.3px;top:186.50px;font-size:3px;line-height:3.576923076923077px;color:#ddd">Emission</div><div style="position:absolute;left:832.8px;top:191px;width:2px;height:2px;background:#ddd"></div><div class="t" style="left:835.3px;top:190.50px;font-size:3px;line-height:3.576923076923077px;color:#ddd">Bump &amp; Normals</div><div style="position:absolute;left:832.8px;top:194px;width:2px;height:2px;background:#ddd"></div><div class="t" style="left:835.3px;top:194.50px;font-size:3px;line-height:3.576923076923077px;color:#ddd">Displacement</div><div style="position:absolute;left:832.8px;top:198px;width:2px;height:2px;background:#ddd"></div><div class="t" style="left:835.3px;top:197.50px;font-size:3px;line-height:3.576923076923077px;color:#ddd">Settings</div><div style="position:absolute;left:832.8px;top:201px;width:2px;height:2px;background:#ddd"></div><div class="t" style="left:835.3px;top:201.50px;font-size:3px;line-height:3.576923076923077px;color:#ddd">Other</div><div style="position:absolute;left:832.8px;top:205px;width:2px;height:2px;background:#5aa"></div><div class="t" style="left:835.3px;top:204.50px;font-size:3px;line-height:3.576923076923077px;color:#7a9a9a">ior</div><div style="position:absolute;left:832.8px;top:209px;width:2px;height:2px;background:#5aa"></div><div class="t" style="left:835.3px;top:208.50px;font-size:3px;line-height:3.576923076923077px;color:#7a9a9a">rough</div><div style="position:absolute;left:832.8px;top:212px;width:2px;height:2px;background:#5aa"></div><div class="t" style="left:835.3px;top:211.50px;font-size:3px;line-height:3.576923076923077px;color:#7a9a9a">metal</div><div style="position:absolute;left:832.8px;top:216px;width:2px;height:2px;background:#3a8ad0"></div><div class="t" style="left:835.3px;top:215.50px;font-size:3px;line-height:3.576923076923077px;color:#7a9a9a">sheen</div><div style="position:absolute;left:832.8px;top:219px;width:2px;height:2px;background:#5aa"></div><div class="t" style="left:835.3px;top:219.50px;font-size:3px;line-height:3.576923076923077px;color:#7a9a9a">coat</div><div style="position:absolute;left:832.8px;top:223px;width:2px;height:2px;background:#2c2"></div><div class="t" style="left:835.3px;top:222.50px;font-size:3px;line-height:3.576923076923077px;color:#7a9a9a">N</div><div style="position:absolute;left:870.3px;top:180.2px;width:2px;height:2px;background:#ccc;"></div><div style="position:absolute;left:870.3px;top:183.2px;width:2px;height:2px;background:#5aa;"></div><div style="position:absolute;left:870.3px;top:186.2px;width:2px;height:2px;background:#e06030;"></div><div style="position:absolute;left:833.8px;top:156.5px;width:3px;height:3px;background:#3a7ac8;border-radius:1px"></div><div style="position:absolute;left:837.8px;top:156.5px;width:3px;height:3px;background:#888;border-radius:1px"></div><div style="position:absolute;left:841.8px;top:156.5px;width:3px;height:3px;background:#d04050;border-radius:1px"></div><div class="t" style="left:833.3px;top:159.9px;font-size:4.4px;color:#555;">Principled Shader</div><div class="t" style="left:833.3px;top:166.3px;font-size:5.2px;color:#d0d0d0;transform:scaleX(0.82);transform-origin:0 0">YUCCA_FROND_DOWN_DRYED_MAT</div><div style="position:absolute;left:915.8px;top:172px;width:37.5px;height:57.7px;background:#d6d6d6;border-radius:2px 2px 3px 3px;box-shadow:0 0 0 0.6px #6f8a82;"></div><div style="position:absolute;left:915.8px;top:179.2px;width:37.5px;height:46.5px;background:#3c3c3c;"></div><div style="position:absolute;left:944.3px;top:173.5px;width:0.8px;height:4.2px;background:#bdbdbd;"></div><div style="position:absolute;left:947.3px;top:173.5px;width:0.8px;height:4.2px;background:#bdbdbd;"></div><div style="position:absolute;left:950.5px;top:172.8px;width:2.8px;height:6.4px;background:#c4434a;"></div><div style="position:absolute;left:951.0999999999999px;top:174.5px;width:1px;height:2px;background:#e0a030;"></div><svg style="position:absolute;left:917.8px;top:172.5px" width="8" height="6.2" viewBox="0 0 8 7"><circle cx="4" cy="1.6" r="1.1" fill="none" stroke="#a8a8a8" stroke-width="0.6"/><path d="M1 3.5 L4 3 L7 3.5 M4 3 V5 L2 7 M4 5 L6 7" stroke="#a8a8a8" stroke-width="0.6" fill="none"/><circle cx="4" cy="0.6" r="0.6" fill="#e0b030"/><circle cx="6" cy="5.5" r="0.7" fill="#9cc8e0"/></svg><div style="position:absolute;left:941.3px;top:226.89999999999998px;width:1px;height:1px;background:#666;"></div><div style="position:absolute;left:945.3px;top:226.89999999999998px;width:1.5px;height:1px;background:#555;"></div><div style="position:absolute;left:949.3px;top:226.89999999999998px;width:1px;height:1px;background:#666;"></div><div style="position:absolute;left:914.8px;top:180px;width:2px;height:2px;background:#ddd"></div><div class="t" style="left:917.3px;top:179.50px;font-size:3px;line-height:3.576923076923077px;color:#ddd">Surface</div><div style="position:absolute;left:914.8px;top:184px;width:2px;height:2px;background:#ddd"></div><div class="t" style="left:917.3px;top:183.50px;font-size:3px;line-height:3.576923076923077px;color:#ddd">Opacity</div><div style="position:absolute;left:914.8px;top:187px;width:2px;height:2px;background:#ddd"></div><div class="t" style="left:917.3px;top:186.50px;font-size:3px;line-height:3.576923076923077px;color:#ddd">Emission</div><div style="position:absolute;left:914.8px;top:191px;width:2px;height:2px;background:#ddd"></div><div class="t" style="left:917.3px;top:190.50px;font-size:3px;line-height:3.576923076923077px;color:#ddd">Bump &amp; Normals</div><div style="position:absolute;left:914.8px;top:194px;width:2px;height:2px;background:#ddd"></div><div class="t" style="left:917.3px;top:194.50px;font-size:3px;line-height:3.576923076923077px;color:#ddd">Displacement</div><div style="position:absolute;left:914.8px;top:198px;width:2px;height:2px;background:#ddd"></div><div class="t" style="left:917.3px;top:197.50px;font-size:3px;line-height:3.576923076923077px;color:#ddd">Settings</div><div style="position:absolute;left:914.8px;top:201px;width:2px;height:2px;background:#ddd"></div><div class="t" style="left:917.3px;top:201.50px;font-size:3px;line-height:3.576923076923077px;color:#ddd">Other</div><div style="position:absolute;left:914.8px;top:205px;width:2px;height:2px;background:#5aa"></div><div class="t" style="left:917.3px;top:204.50px;font-size:3px;line-height:3.576923076923077px;color:#7a9a9a">ior</div><div style="position:absolute;left:914.8px;top:209px;width:2px;height:2px;background:#5aa"></div><div class="t" style="left:917.3px;top:208.50px;font-size:3px;line-height:3.576923076923077px;color:#7a9a9a">rough</div><div style="position:absolute;left:914.8px;top:212px;width:2px;height:2px;background:#5aa"></div><div class="t" style="left:917.3px;top:211.50px;font-size:3px;line-height:3.576923076923077px;color:#7a9a9a">metal</div><div style="position:absolute;left:914.8px;top:216px;width:2px;height:2px;background:#3a8ad0"></div><div class="t" style="left:917.3px;top:215.50px;font-size:3px;line-height:3.576923076923077px;color:#7a9a9a">sheen</div><div style="position:absolute;left:914.8px;top:219px;width:2px;height:2px;background:#5aa"></div><div class="t" style="left:917.3px;top:219.50px;font-size:3px;line-height:3.576923076923077px;color:#7a9a9a">coat</div><div style="position:absolute;left:914.8px;top:223px;width:2px;height:2px;background:#2c2"></div><div class="t" style="left:917.3px;top:222.50px;font-size:3px;line-height:3.576923076923077px;color:#7a9a9a">N</div><div style="position:absolute;left:952.3px;top:180.2px;width:2px;height:2px;background:#ccc;"></div><div style="position:absolute;left:952.3px;top:183.2px;width:2px;height:2px;background:#5aa;"></div><div style="position:absolute;left:952.3px;top:186.2px;width:2px;height:2px;background:#e06030;"></div><div style="position:absolute;left:915.8px;top:156.5px;width:3px;height:3px;background:#3a7ac8;border-radius:1px"></div><div style="position:absolute;left:919.8px;top:156.5px;width:3px;height:3px;background:#888;border-radius:1px"></div><div style="position:absolute;left:923.8px;top:156.5px;width:3px;height:3px;background:#d04050;border-radius:1px"></div><div class="t" style="left:915.3px;top:159.9px;font-size:4.4px;color:#555;">Principled Shader</div><div class="t" style="left:915.3px;top:166.3px;font-size:5.2px;color:#d0d0d0;transform:scaleX(0.82);transform-origin:0 0">DYED_MAT</div><div style="position:absolute;left:808.4px;top:358.4px;width:280px;height:152.6px;background:#6b7b74;border-radius:3px"></div><div style="position:absolute;left:808.4px;top:358.4px;width:280px;height:7.8px;background:#7ec09c;border-radius:3px 3px 0 0"></div><div style="position:absolute;left:810.5px;top:361.8px;width:3px;height:1px;background:#2a3a32;"></div><div style="position:absolute;left:811px;top:366.5px;width:2px;height:0.8px;background:#86968e;"></div><div style="position:absolute;left:815px;top:366.5px;width:2px;height:0.8px;background:#86968e;"></div><div style="position:absolute;left:819px;top:366.5px;width:2px;height:0.8px;background:#86968e;"></div><div style="position:absolute;left:823px;top:366.5px;width:2px;height:0.8px;background:#86968e;"></div><div style="position:absolute;left:827px;top:366.5px;width:2px;height:0.8px;background:#86968e;"></div><div style="position:absolute;left:831px;top:366.5px;width:2px;height:0.8px;background:#86968e;"></div><div style="position:absolute;left:835px;top:366.5px;width:2px;height:0.8px;background:#86968e;"></div><div style="position:absolute;left:839px;top:366.5px;width:2px;height:0.8px;background:#86968e;"></div><div style="position:absolute;left:843px;top:366.5px;width:2px;height:0.8px;background:#86968e;"></div><div style="position:absolute;left:847px;top:366.5px;width:2px;height:0.8px;background:#86968e;"></div><div style="position:absolute;left:851px;top:366.5px;width:2px;height:0.8px;background:#86968e;"></div><div style="position:absolute;left:855px;top:366.5px;width:2px;height:0.8px;background:#86968e;"></div><div style="position:absolute;left:859px;top:366.5px;width:2px;height:0.8px;background:#86968e;"></div><div style="position:absolute;left:863px;top:366.5px;width:2px;height:0.8px;background:#86968e;"></div><div style="position:absolute;left:867px;top:366.5px;width:2px;height:0.8px;background:#86968e;"></div><div style="position:absolute;left:871px;top:366.5px;width:2px;height:0.8px;background:#86968e;"></div><div style="position:absolute;left:875px;top:366.5px;width:2px;height:0.8px;background:#86968e;"></div><div style="position:absolute;left:879px;top:366.5px;width:2px;height:0.8px;background:#86968e;"></div><div style="position:absolute;left:883px;top:366.5px;width:2px;height:0.8px;background:#86968e;"></div><div style="position:absolute;left:887px;top:366.5px;width:2px;height:0.8px;background:#86968e;"></div><div style="position:absolute;left:891px;top:366.5px;width:2px;height:0.8px;background:#86968e;"></div><div style="position:absolute;left:895px;top:366.5px;width:2px;height:0.8px;background:#86968e;"></div><div style="position:absolute;left:899px;top:366.5px;width:2px;height:0.8px;background:#86968e;"></div><div style="position:absolute;left:903px;top:366.5px;width:2px;height:0.8px;background:#86968e;"></div><div style="position:absolute;left:907px;top:366.5px;width:2px;height:0.8px;background:#86968e;"></div><div style="position:absolute;left:911px;top:366.5px;width:2px;height:0.8px;background:#86968e;"></div><div style="position:absolute;left:915px;top:366.5px;width:2px;height:0.8px;background:#86968e;"></div><div style="position:absolute;left:919px;top:366.5px;width:2px;height:0.8px;background:#86968e;"></div><div style="position:absolute;left:923px;top:366.5px;width:2px;height:0.8px;background:#86968e;"></div><div style="position:absolute;left:927px;top:366.5px;width:2px;height:0.8px;background:#86968e;"></div><div style="position:absolute;left:931px;top:366.5px;width:2px;height:0.8px;background:#86968e;"></div><div style="position:absolute;left:935px;top:366.5px;width:2px;height:0.8px;background:#86968e;"></div><div style="position:absolute;left:939px;top:366.5px;width:2px;height:0.8px;background:#86968e;"></div><div style="position:absolute;left:943px;top:366.5px;width:2px;height:0.8px;background:#86968e;"></div><div style="position:absolute;left:947px;top:366.5px;width:2px;height:0.8px;background:#86968e;"></div><div style="position:absolute;left:951px;top:366.5px;width:2px;height:0.8px;background:#86968e;"></div><div style="position:absolute;left:955px;top:366.5px;width:2px;height:0.8px;background:#86968e;"></div><div style="position:absolute;left:959px;top:366.5px;width:2px;height:0.8px;background:#86968e;"></div><div style="position:absolute;left:963px;top:366.5px;width:2px;height:0.8px;background:#86968e;"></div><div style="position:absolute;left:967px;top:366.5px;width:2px;height:0.8px;background:#86968e;"></div><div style="position:absolute;left:971px;top:366.5px;width:2px;height:0.8px;background:#86968e;"></div><div style="position:absolute;left:975px;top:366.5px;width:2px;height:0.8px;background:#86968e;"></div><div style="position:absolute;left:979px;top:366.5px;width:2px;height:0.8px;background:#86968e;"></div><div style="position:absolute;left:983px;top:366.5px;width:2px;height:0.8px;background:#86968e;"></div><div style="position:absolute;left:987px;top:366.5px;width:2px;height:0.8px;background:#86968e;"></div><div style="position:absolute;left:991px;top:366.5px;width:2px;height:0.8px;background:#86968e;"></div><div style="position:absolute;left:995px;top:366.5px;width:2px;height:0.8px;background:#86968e;"></div><div style="position:absolute;left:999px;top:366.5px;width:2px;height:0.8px;background:#86968e;"></div><div style="position:absolute;left:1003px;top:366.5px;width:2px;height:0.8px;background:#86968e;"></div><div style="position:absolute;left:1007px;top:366.5px;width:2px;height:0.8px;background:#86968e;"></div><div style="position:absolute;left:1011px;top:366.5px;width:2px;height:0.8px;background:#86968e;"></div><div style="position:absolute;left:1015px;top:366.5px;width:2px;height:0.8px;background:#86968e;"></div><div style="position:absolute;left:1019px;top:366.5px;width:2px;height:0.8px;background:#86968e;"></div><div style="position:absolute;left:1023px;top:366.5px;width:2px;height:0.8px;background:#86968e;"></div><div style="position:absolute;left:1027px;top:366.5px;width:2px;height:0.8px;background:#86968e;"></div><div style="position:absolute;left:1031px;top:366.5px;width:2px;height:0.8px;background:#86968e;"></div><div style="position:absolute;left:1035px;top:366.5px;width:2px;height:0.8px;background:#86968e;"></div><div style="position:absolute;left:1039px;top:366.5px;width:2px;height:0.8px;background:#86968e;"></div><div style="position:absolute;left:1043px;top:366.5px;width:2px;height:0.8px;background:#86968e;"></div><div style="position:absolute;left:1047px;top:366.5px;width:2px;height:0.8px;background:#86968e;"></div><div style="position:absolute;left:1051px;top:366.5px;width:2px;height:0.8px;background:#86968e;"></div><div style="position:absolute;left:1055px;top:366.5px;width:2px;height:0.8px;background:#86968e;"></div><div style="position:absolute;left:1059px;top:366.5px;width:2px;height:0.8px;background:#86968e;"></div><div style="position:absolute;left:1063px;top:366.5px;width:2px;height:0.8px;background:#86968e;"></div><div style="position:absolute;left:1067px;top:366.5px;width:2px;height:0.8px;background:#86968e;"></div><div style="position:absolute;left:1071px;top:366.5px;width:2px;height:0.8px;background:#86968e;"></div><div style="position:absolute;left:1075px;top:366.5px;width:2px;height:0.8px;background:#86968e;"></div><div class="t" style="left:815px;top:360.2px;font-size:5.2px;color:#22302a;transform:scaleX(0.86);transform-origin:0 0">REGULAR_SCATTERED_VEGETATION_MATERIALS</div><div style="position:absolute;left:841px;top:421.7px;width:38px;height:58px;background:#d6d6d6;border-radius:2px 2px 3px 3px;box-shadow:0 0 0 0.6px #6f8a82;"></div><div style="position:absolute;left:841px;top:428.9px;width:38px;height:46.8px;background:#3c3c3c;"></div><div style="position:absolute;left:870px;top:423.2px;width:0.8px;height:4.2px;background:#bdbdbd;"></div><div style="position:absolute;left:873px;top:423.2px;width:0.8px;height:4.2px;background:#bdbdbd;"></div><div style="position:absolute;left:876.2px;top:422.5px;width:2.8px;height:6.4px;background:#c4434a;"></div><div style="position:absolute;left:876.8px;top:424.2px;width:1px;height:2px;background:#e0a030;"></div><svg style="position:absolute;left:843px;top:422.2px" width="8" height="6.2" viewBox="0 0 8 7"><circle cx="4" cy="1.6" r="1.1" fill="none" stroke="#a8a8a8" stroke-width="0.6"/><path d="M1 3.5 L4 3 L7 3.5 M4 3 V5 L2 7 M4 5 L6 7" stroke="#a8a8a8" stroke-width="0.6" fill="none"/><circle cx="4" cy="0.6" r="0.6" fill="#e0b030"/><circle cx="6" cy="5.5" r="0.7" fill="#9cc8e0"/></svg><div style="position:absolute;left:867px;top:476.9px;width:1px;height:1px;background:#666;"></div><div style="position:absolute;left:871px;top:476.9px;width:1.5px;height:1px;background:#555;"></div><div style="position:absolute;left:875px;top:476.9px;width:1px;height:1px;background:#666;"></div><div style="position:absolute;left:840px;top:430px;width:2px;height:2px;background:#ddd"></div><div class="t" style="left:842.5px;top:429.50px;font-size:3px;line-height:3.5999999999999996px;color:#ddd">Surface</div><div style="position:absolute;left:840px;top:433px;width:2px;height:2px;background:#ddd"></div><div class="t" style="left:842.5px;top:432.50px;font-size:3px;line-height:3.5999999999999996px;color:#ddd">Opacity</div><div style="position:absolute;left:840px;top:437px;width:2px;height:2px;background:#ddd"></div><div class="t" style="left:842.5px;top:436.50px;font-size:3px;line-height:3.5999999999999996px;color:#ddd">Emission</div><div style="position:absolute;left:840px;top:440px;width:2px;height:2px;background:#ddd"></div><div class="t" style="left:842.5px;top:440.50px;font-size:3px;line-height:3.5999999999999996px;color:#ddd">Bump &amp; Normals</div><div style="position:absolute;left:840px;top:444px;width:2px;height:2px;background:#ddd"></div><div class="t" style="left:842.5px;top:443.50px;font-size:3px;line-height:3.5999999999999996px;color:#ddd">Displacement</div><div style="position:absolute;left:840px;top:448px;width:2px;height:2px;background:#ddd"></div><div class="t" style="left:842.5px;top:447.50px;font-size:3px;line-height:3.5999999999999996px;color:#ddd">Settings</div><div style="position:absolute;left:840px;top:451px;width:2px;height:2px;background:#ddd"></div><div class="t" style="left:842.5px;top:450.50px;font-size:3px;line-height:3.5999999999999996px;color:#ddd">Other</div><div style="position:absolute;left:840px;top:455px;width:2px;height:2px;background:#5aa"></div><div class="t" style="left:842.5px;top:454.50px;font-size:3px;line-height:3.5999999999999996px;color:#7a9a9a">ior</div><div style="position:absolute;left:840px;top:458px;width:2px;height:2px;background:#5aa"></div><div class="t" style="left:842.5px;top:458.50px;font-size:3px;line-height:3.5999999999999996px;color:#7a9a9a">rough</div><div style="position:absolute;left:840px;top:462px;width:2px;height:2px;background:#5aa"></div><div class="t" style="left:842.5px;top:461.50px;font-size:3px;line-height:3.5999999999999996px;color:#7a9a9a">metal</div><div style="position:absolute;left:840px;top:466px;width:2px;height:2px;background:#3a8ad0"></div><div class="t" style="left:842.5px;top:465.50px;font-size:3px;line-height:3.5999999999999996px;color:#7a9a9a">sheen</div><div style="position:absolute;left:840px;top:469px;width:2px;height:2px;background:#5aa"></div><div class="t" style="left:842.5px;top:468.50px;font-size:3px;line-height:3.5999999999999996px;color:#7a9a9a">coat</div><div style="position:absolute;left:840px;top:473px;width:2px;height:2px;background:#2c2"></div><div class="t" style="left:842.5px;top:472.50px;font-size:3px;line-height:3.5999999999999996px;color:#7a9a9a">N</div><div style="position:absolute;left:878px;top:429.9px;width:2px;height:2px;background:#ccc;"></div><div style="position:absolute;left:878px;top:432.9px;width:2px;height:2px;background:#5aa;"></div><div style="position:absolute;left:878px;top:435.9px;width:2px;height:2px;background:#e06030;"></div><div style="position:absolute;left:843px;top:406px;width:3px;height:3px;background:#3a7ac8;border-radius:1px"></div><div style="position:absolute;left:853px;top:406px;width:3px;height:3px;background:#d04050;border-radius:1px"></div><div class="t" style="left:842px;top:416.2px;font-size:4.928px;color:#ddd5bd;">DryGrass_01</div><div style="position:absolute;left:893.3px;top:421.7px;width:38px;height:58px;background:#d6d6d6;border-radius:2px 2px 3px 3px;box-shadow:0 0 0 0.6px #6f8a82;"></div><div style="position:absolute;left:893.3px;top:428.9px;width:38px;height:46.8px;background:#3c3c3c;"></div><div style="position:absolute;left:922.3px;top:423.2px;width:0.8px;height:4.2px;background:#bdbdbd;"></div><div style="position:absolute;left:925.3px;top:423.2px;width:0.8px;height:4.2px;background:#bdbdbd;"></div><div style="position:absolute;left:928.5px;top:422.5px;width:2.8px;height:6.4px;background:#c4434a;"></div><div style="position:absolute;left:929.0999999999999px;top:424.2px;width:1px;height:2px;background:#e0a030;"></div><svg style="position:absolute;left:895.3px;top:422.2px" width="8" height="6.2" viewBox="0 0 8 7"><circle cx="4" cy="1.6" r="1.1" fill="none" stroke="#a8a8a8" stroke-width="0.6"/><path d="M1 3.5 L4 3 L7 3.5 M4 3 V5 L2 7 M4 5 L6 7" stroke="#a8a8a8" stroke-width="0.6" fill="none"/><circle cx="4" cy="0.6" r="0.6" fill="#e0b030"/><circle cx="6" cy="5.5" r="0.7" fill="#9cc8e0"/></svg><div style="position:absolute;left:919.3px;top:476.9px;width:1px;height:1px;background:#666;"></div><div style="position:absolute;left:923.3px;top:476.9px;width:1.5px;height:1px;background:#555;"></div><div style="position:absolute;left:927.3px;top:476.9px;width:1px;height:1px;background:#666;"></div><div style="position:absolute;left:892.3px;top:430px;width:2px;height:2px;background:#ddd"></div><div class="t" style="left:894.8px;top:429.50px;font-size:3px;line-height:3.5999999999999996px;color:#ddd">Surface</div><div style="position:absolute;left:892.3px;top:433px;width:2px;height:2px;background:#ddd"></div><div class="t" style="left:894.8px;top:432.50px;font-size:3px;line-height:3.5999999999999996px;color:#ddd">Opacity</div><div style="position:absolute;left:892.3px;top:437px;width:2px;height:2px;background:#ddd"></div><div class="t" style="left:894.8px;top:436.50px;font-size:3px;line-height:3.5999999999999996px;color:#ddd">Emission</div><div style="position:absolute;left:892.3px;top:440px;width:2px;height:2px;background:#ddd"></div><div class="t" style="left:894.8px;top:440.50px;font-size:3px;line-height:3.5999999999999996px;color:#ddd">Bump &amp; Normals</div><div style="position:absolute;left:892.3px;top:444px;width:2px;height:2px;background:#ddd"></div><div class="t" style="left:894.8px;top:443.50px;font-size:3px;line-height:3.5999999999999996px;color:#ddd">Displacement</div><div style="position:absolute;left:892.3px;top:448px;width:2px;height:2px;background:#ddd"></div><div class="t" style="left:894.8px;top:447.50px;font-size:3px;line-height:3.5999999999999996px;color:#ddd">Settings</div><div style="position:absolute;left:892.3px;top:451px;width:2px;height:2px;background:#ddd"></div><div class="t" style="left:894.8px;top:450.50px;font-size:3px;line-height:3.5999999999999996px;color:#ddd">Other</div><div style="position:absolute;left:892.3px;top:455px;width:2px;height:2px;background:#5aa"></div><div class="t" style="left:894.8px;top:454.50px;font-size:3px;line-height:3.5999999999999996px;color:#7a9a9a">ior</div><div style="position:absolute;left:892.3px;top:458px;width:2px;height:2px;background:#5aa"></div><div class="t" style="left:894.8px;top:458.50px;font-size:3px;line-height:3.5999999999999996px;color:#7a9a9a">rough</div><div style="position:absolute;left:892.3px;top:462px;width:2px;height:2px;background:#5aa"></div><div class="t" style="left:894.8px;top:461.50px;font-size:3px;line-height:3.5999999999999996px;color:#7a9a9a">metal</div><div style="position:absolute;left:892.3px;top:466px;width:2px;height:2px;background:#3a8ad0"></div><div class="t" style="left:894.8px;top:465.50px;font-size:3px;line-height:3.5999999999999996px;color:#7a9a9a">sheen</div><div style="position:absolute;left:892.3px;top:469px;width:2px;height:2px;background:#5aa"></div><div class="t" style="left:894.8px;top:468.50px;font-size:3px;line-height:3.5999999999999996px;color:#7a9a9a">coat</div><div style="position:absolute;left:892.3px;top:473px;width:2px;height:2px;background:#2c2"></div><div class="t" style="left:894.8px;top:472.50px;font-size:3px;line-height:3.5999999999999996px;color:#7a9a9a">N</div><div style="position:absolute;left:930.3px;top:429.9px;width:2px;height:2px;background:#ccc;"></div><div style="position:absolute;left:930.3px;top:432.9px;width:2px;height:2px;background:#5aa;"></div><div style="position:absolute;left:930.3px;top:435.9px;width:2px;height:2px;background:#e06030;"></div><div style="position:absolute;left:895.3px;top:406px;width:3px;height:3px;background:#3a7ac8;border-radius:1px"></div><div style="position:absolute;left:905.3px;top:406px;width:3px;height:3px;background:#d04050;border-radius:1px"></div><div class="t" style="left:894.3px;top:416.2px;font-size:4.928px;color:#ddd5bd;">DesertFern_02</div><div style="position:absolute;left:945.7px;top:421.7px;width:38px;height:58px;background:#d6d6d6;border-radius:2px 2px 3px 3px;box-shadow:0 0 0 0.6px #6f8a82;"></div><div style="position:absolute;left:945.7px;top:428.9px;width:38px;height:46.8px;background:#3c3c3c;"></div><div style="position:absolute;left:974.7px;top:423.2px;width:0.8px;height:4.2px;background:#bdbdbd;"></div><div style="position:absolute;left:977.7px;top:423.2px;width:0.8px;height:4.2px;background:#bdbdbd;"></div><div style="position:absolute;left:980.9000000000001px;top:422.5px;width:2.8px;height:6.4px;background:#c4434a;"></div><div style="position:absolute;left:981.5px;top:424.2px;width:1px;height:2px;background:#e0a030;"></div><svg style="position:absolute;left:947.7px;top:422.2px" width="8" height="6.2" viewBox="0 0 8 7"><circle cx="4" cy="1.6" r="1.1" fill="none" stroke="#a8a8a8" stroke-width="0.6"/><path d="M1 3.5 L4 3 L7 3.5 M4 3 V5 L2 7 M4 5 L6 7" stroke="#a8a8a8" stroke-width="0.6" fill="none"/><circle cx="4" cy="0.6" r="0.6" fill="#e0b030"/><circle cx="6" cy="5.5" r="0.7" fill="#9cc8e0"/></svg><div style="position:absolute;left:971.7px;top:476.9px;width:1px;height:1px;background:#666;"></div><div style="position:absolute;left:975.7px;top:476.9px;width:1.5px;height:1px;background:#555;"></div><div style="position:absolute;left:979.7px;top:476.9px;width:1px;height:1px;background:#666;"></div><div style="position:absolute;left:944.7px;top:430px;width:2px;height:2px;background:#ddd"></div><div class="t" style="left:947.2px;top:429.50px;font-size:3px;line-height:3.5999999999999996px;color:#ddd">Surface</div><div style="position:absolute;left:944.7px;top:433px;width:2px;height:2px;background:#ddd"></div><div class="t" style="left:947.2px;top:432.50px;font-size:3px;line-height:3.5999999999999996px;color:#ddd">Opacity</div><div style="position:absolute;left:944.7px;top:437px;width:2px;height:2px;background:#ddd"></div><div class="t" style="left:947.2px;top:436.50px;font-size:3px;line-height:3.5999999999999996px;color:#ddd">Emission</div><div style="position:absolute;left:944.7px;top:440px;width:2px;height:2px;background:#ddd"></div><div class="t" style="left:947.2px;top:440.50px;font-size:3px;line-height:3.5999999999999996px;color:#ddd">Bump &amp; Normals</div><div style="position:absolute;left:944.7px;top:444px;width:2px;height:2px;background:#ddd"></div><div class="t" style="left:947.2px;top:443.50px;font-size:3px;line-height:3.5999999999999996px;color:#ddd">Displacement</div><div style="position:absolute;left:944.7px;top:448px;width:2px;height:2px;background:#ddd"></div><div class="t" style="left:947.2px;top:447.50px;font-size:3px;line-height:3.5999999999999996px;color:#ddd">Settings</div><div style="position:absolute;left:944.7px;top:451px;width:2px;height:2px;background:#ddd"></div><div class="t" style="left:947.2px;top:450.50px;font-size:3px;line-height:3.5999999999999996px;color:#ddd">Other</div><div style="position:absolute;left:944.7px;top:455px;width:2px;height:2px;background:#5aa"></div><div class="t" style="left:947.2px;top:454.50px;font-size:3px;line-height:3.5999999999999996px;color:#7a9a9a">ior</div><div style="position:absolute;left:944.7px;top:458px;width:2px;height:2px;background:#5aa"></div><div class="t" style="left:947.2px;top:458.50px;font-size:3px;line-height:3.5999999999999996px;color:#7a9a9a">rough</div><div style="position:absolute;left:944.7px;top:462px;width:2px;height:2px;background:#5aa"></div><div class="t" style="left:947.2px;top:461.50px;font-size:3px;line-height:3.5999999999999996px;color:#7a9a9a">metal</div><div style="position:absolute;left:944.7px;top:466px;width:2px;height:2px;background:#3a8ad0"></div><div class="t" style="left:947.2px;top:465.50px;font-size:3px;line-height:3.5999999999999996px;color:#7a9a9a">sheen</div><div style="position:absolute;left:944.7px;top:469px;width:2px;height:2px;background:#5aa"></div><div class="t" style="left:947.2px;top:468.50px;font-size:3px;line-height:3.5999999999999996px;color:#7a9a9a">coat</div><div style="position:absolute;left:944.7px;top:473px;width:2px;height:2px;background:#2c2"></div><div class="t" style="left:947.2px;top:472.50px;font-size:3px;line-height:3.5999999999999996px;color:#7a9a9a">N</div><div style="position:absolute;left:982.7px;top:429.9px;width:2px;height:2px;background:#ccc;"></div><div style="position:absolute;left:982.7px;top:432.9px;width:2px;height:2px;background:#5aa;"></div><div style="position:absolute;left:982.7px;top:435.9px;width:2px;height:2px;background:#e06030;"></div><div style="position:absolute;left:947.7px;top:406px;width:3px;height:3px;background:#3a7ac8;border-radius:1px"></div><div style="position:absolute;left:957.7px;top:406px;width:3px;height:3px;background:#d04050;border-radius:1px"></div><div class="t" style="left:946.7px;top:416.2px;font-size:4.928px;color:#ddd5bd;">DesertBush_01</div><div style="position:absolute;left:1002px;top:421.7px;width:38px;height:58px;background:#d6d6d6;border-radius:2px 2px 3px 3px;box-shadow:0 0 0 0.6px #6f8a82;"></div><div style="position:absolute;left:1002px;top:428.9px;width:38px;height:46.8px;background:#3c3c3c;"></div><div style="position:absolute;left:1031px;top:423.2px;width:0.8px;height:4.2px;background:#bdbdbd;"></div><div style="position:absolute;left:1034px;top:423.2px;width:0.8px;height:4.2px;background:#bdbdbd;"></div><div style="position:absolute;left:1037.2px;top:422.5px;width:2.8px;height:6.4px;background:#c4434a;"></div><div style="position:absolute;left:1037.8px;top:424.2px;width:1px;height:2px;background:#e0a030;"></div><svg style="position:absolute;left:1004px;top:422.2px" width="8" height="6.2" viewBox="0 0 8 7"><circle cx="4" cy="1.6" r="1.1" fill="none" stroke="#a8a8a8" stroke-width="0.6"/><path d="M1 3.5 L4 3 L7 3.5 M4 3 V5 L2 7 M4 5 L6 7" stroke="#a8a8a8" stroke-width="0.6" fill="none"/><circle cx="4" cy="0.6" r="0.6" fill="#e0b030"/><circle cx="6" cy="5.5" r="0.7" fill="#9cc8e0"/></svg><div style="position:absolute;left:1028px;top:476.9px;width:1px;height:1px;background:#666;"></div><div style="position:absolute;left:1032px;top:476.9px;width:1.5px;height:1px;background:#555;"></div><div style="position:absolute;left:1036px;top:476.9px;width:1px;height:1px;background:#666;"></div><div style="position:absolute;left:1001px;top:430px;width:2px;height:2px;background:#ddd"></div><div class="t" style="left:1003.5px;top:429.50px;font-size:3px;line-height:3.5999999999999996px;color:#ddd">Surface</div><div style="position:absolute;left:1001px;top:433px;width:2px;height:2px;background:#ddd"></div><div class="t" style="left:1003.5px;top:432.50px;font-size:3px;line-height:3.5999999999999996px;color:#ddd">Opacity</div><div style="position:absolute;left:1001px;top:437px;width:2px;height:2px;background:#ddd"></div><div class="t" style="left:1003.5px;top:436.50px;font-size:3px;line-height:3.5999999999999996px;color:#ddd">Emission</div><div style="position:absolute;left:1001px;top:440px;width:2px;height:2px;background:#ddd"></div><div class="t" style="left:1003.5px;top:440.50px;font-size:3px;line-height:3.5999999999999996px;color:#ddd">Bump &amp; Normals</div><div style="position:absolute;left:1001px;top:444px;width:2px;height:2px;background:#ddd"></div><div class="t" style="left:1003.5px;top:443.50px;font-size:3px;line-height:3.5999999999999996px;color:#ddd">Displacement</div><div style="position:absolute;left:1001px;top:448px;width:2px;height:2px;background:#ddd"></div><div class="t" style="left:1003.5px;top:447.50px;font-size:3px;line-height:3.5999999999999996px;color:#ddd">Settings</div><div style="position:absolute;left:1001px;top:451px;width:2px;height:2px;background:#ddd"></div><div class="t" style="left:1003.5px;top:450.50px;font-size:3px;line-height:3.5999999999999996px;color:#ddd">Other</div><div style="position:absolute;left:1001px;top:455px;width:2px;height:2px;background:#5aa"></div><div class="t" style="left:1003.5px;top:454.50px;font-size:3px;line-height:3.5999999999999996px;color:#7a9a9a">ior</div><div style="position:absolute;left:1001px;top:458px;width:2px;height:2px;background:#5aa"></div><div class="t" style="left:1003.5px;top:458.50px;font-size:3px;line-height:3.5999999999999996px;color:#7a9a9a">rough</div><div style="position:absolute;left:1001px;top:462px;width:2px;height:2px;background:#5aa"></div><div class="t" style="left:1003.5px;top:461.50px;font-size:3px;line-height:3.5999999999999996px;color:#7a9a9a">metal</div><div style="position:absolute;left:1001px;top:466px;width:2px;height:2px;background:#3a8ad0"></div><div class="t" style="left:1003.5px;top:465.50px;font-size:3px;line-height:3.5999999999999996px;color:#7a9a9a">sheen</div><div style="position:absolute;left:1001px;top:469px;width:2px;height:2px;background:#5aa"></div><div class="t" style="left:1003.5px;top:468.50px;font-size:3px;line-height:3.5999999999999996px;color:#7a9a9a">coat</div><div style="position:absolute;left:1001px;top:473px;width:2px;height:2px;background:#2c2"></div><div class="t" style="left:1003.5px;top:472.50px;font-size:3px;line-height:3.5999999999999996px;color:#7a9a9a">N</div><div style="position:absolute;left:1039px;top:429.9px;width:2px;height:2px;background:#ccc;"></div><div style="position:absolute;left:1039px;top:432.9px;width:2px;height:2px;background:#5aa;"></div><div style="position:absolute;left:1039px;top:435.9px;width:2px;height:2px;background:#e06030;"></div><div style="position:absolute;left:1004px;top:406px;width:3px;height:3px;background:#3a7ac8;border-radius:1px"></div><div style="position:absolute;left:1014px;top:406px;width:3px;height:3px;background:#d04050;border-radius:1px"></div><div class="t" style="left:1003px;top:416.2px;font-size:4.928px;color:#ddd5bd;">YuccaGround_01</div><div style="position:absolute;left:1055px;top:421.7px;width:38px;height:58px;background:#d6d6d6;border-radius:2px 2px 3px 3px;box-shadow:0 0 0 0.6px #6f8a82;"></div><div style="position:absolute;left:1055px;top:428.9px;width:38px;height:46.8px;background:#3c3c3c;"></div><div style="position:absolute;left:1084px;top:423.2px;width:0.8px;height:4.2px;background:#bdbdbd;"></div><div style="position:absolute;left:1087px;top:423.2px;width:0.8px;height:4.2px;background:#bdbdbd;"></div><div style="position:absolute;left:1090.2px;top:422.5px;width:2.8px;height:6.4px;background:#c4434a;"></div><div style="position:absolute;left:1090.8px;top:424.2px;width:1px;height:2px;background:#e0a030;"></div><svg style="position:absolute;left:1057px;top:422.2px" width="8" height="6.2" viewBox="0 0 8 7"><circle cx="4" cy="1.6" r="1.1" fill="none" stroke="#a8a8a8" stroke-width="0.6"/><path d="M1 3.5 L4 3 L7 3.5 M4 3 V5 L2 7 M4 5 L6 7" stroke="#a8a8a8" stroke-width="0.6" fill="none"/><circle cx="4" cy="0.6" r="0.6" fill="#e0b030"/><circle cx="6" cy="5.5" r="0.7" fill="#9cc8e0"/></svg><div style="position:absolute;left:1081px;top:476.9px;width:1px;height:1px;background:#666;"></div><div style="position:absolute;left:1085px;top:476.9px;width:1.5px;height:1px;background:#555;"></div><div style="position:absolute;left:1089px;top:476.9px;width:1px;height:1px;background:#666;"></div><div style="position:absolute;left:1054px;top:430px;width:2px;height:2px;background:#ddd"></div><div class="t" style="left:1056.5px;top:429.50px;font-size:3px;line-height:3.5999999999999996px;color:#ddd">Surface</div><div style="position:absolute;left:1054px;top:433px;width:2px;height:2px;background:#ddd"></div><div class="t" style="left:1056.5px;top:432.50px;font-size:3px;line-height:3.5999999999999996px;color:#ddd">Opacity</div><div style="position:absolute;left:1054px;top:437px;width:2px;height:2px;background:#ddd"></div><div class="t" style="left:1056.5px;top:436.50px;font-size:3px;line-height:3.5999999999999996px;color:#ddd">Emission</div><div style="position:absolute;left:1054px;top:440px;width:2px;height:2px;background:#ddd"></div><div class="t" style="left:1056.5px;top:440.50px;font-size:3px;line-height:3.5999999999999996px;color:#ddd">Bump &amp; Normals</div><div style="position:absolute;left:1054px;top:444px;width:2px;height:2px;background:#ddd"></div><div class="t" style="left:1056.5px;top:443.50px;font-size:3px;line-height:3.5999999999999996px;color:#ddd">Displacement</div><div style="position:absolute;left:1054px;top:448px;width:2px;height:2px;background:#ddd"></div><div class="t" style="left:1056.5px;top:447.50px;font-size:3px;line-height:3.5999999999999996px;color:#ddd">Settings</div><div style="position:absolute;left:1054px;top:451px;width:2px;height:2px;background:#ddd"></div><div class="t" style="left:1056.5px;top:450.50px;font-size:3px;line-height:3.5999999999999996px;color:#ddd">Other</div><div style="position:absolute;left:1054px;top:455px;width:2px;height:2px;background:#5aa"></div><div class="t" style="left:1056.5px;top:454.50px;font-size:3px;line-height:3.5999999999999996px;color:#7a9a9a">ior</div><div style="position:absolute;left:1054px;top:458px;width:2px;height:2px;background:#5aa"></div><div class="t" style="left:1056.5px;top:458.50px;font-size:3px;line-height:3.5999999999999996px;color:#7a9a9a">rough</div><div style="position:absolute;left:1054px;top:462px;width:2px;height:2px;background:#5aa"></div><div class="t" style="left:1056.5px;top:461.50px;font-size:3px;line-height:3.5999999999999996px;color:#7a9a9a">metal</div><div style="position:absolute;left:1054px;top:466px;width:2px;height:2px;background:#3a8ad0"></div><div class="t" style="left:1056.5px;top:465.50px;font-size:3px;line-height:3.5999999999999996px;color:#7a9a9a">sheen</div><div style="position:absolute;left:1054px;top:469px;width:2px;height:2px;background:#5aa"></div><div class="t" style="left:1056.5px;top:468.50px;font-size:3px;line-height:3.5999999999999996px;color:#7a9a9a">coat</div><div style="position:absolute;left:1054px;top:473px;width:2px;height:2px;background:#2c2"></div><div class="t" style="left:1056.5px;top:472.50px;font-size:3px;line-height:3.5999999999999996px;color:#7a9a9a">N</div><div style="position:absolute;left:1092px;top:429.9px;width:2px;height:2px;background:#ccc;"></div><div style="position:absolute;left:1092px;top:432.9px;width:2px;height:2px;background:#5aa;"></div><div style="position:absolute;left:1092px;top:435.9px;width:2px;height:2px;background:#e06030;"></div><div style="position:absolute;left:1057px;top:406px;width:3px;height:3px;background:#3a7ac8;border-radius:1px"></div><div style="position:absolute;left:1067px;top:406px;width:3px;height:3px;background:#d04050;border-radius:1px"></div><div class="t" style="left:1056px;top:416.2px;font-size:4.928px;color:#ddd5bd;">Desert_arb</div><div style="position:absolute;left:925px;top:51px;width:154px;height:212px;background:#333333;border-left:1px solid #3c3c3c;border-top:1px solid #3a3a3a;border-radius:2px 0 0 0;box-sizing:border-box"></div><div style="position:absolute;left:925px;top:51px;width:154px;height:12.5px;background:#363636;border-bottom:1px solid #2a2a2a;box-sizing:border-box"></div><div style="position:absolute;left:929.5px;top:53px;width:7px;height:7px;border-radius:50%;border:1px solid #aaa;box-sizing:border-box"></div><div class="t" style="left:937.5px;top:54.5px;font-size:5.2px;color:#ddd;"><b>Null</b></div><div style="position:absolute;left:949px;top:52.5px;width:83px;height:10px;background:#2b2b2b;"></div><div class="t" style="left:950px;top:54.2px;font-size:5.6px;font-family:'Liberation Mono',monospace;color:#b8c8c4">General_shader_controler</div><div style="position:absolute;left:989px;top:70px;width:7.5px;height:7.5px;background:#2c2c2c;"></div><svg style="position:absolute;left:989px;top:70px" width="8" height="8" viewBox="0 0 8 8"><path d="M1.5 4.2 L3.2 6.2 L6.8 1.5" stroke="#e8e8e8" stroke-width="1.5" fill="none"/></svg><div class="t" style="left:998.5px;top:72.6px;font-size:5.2px;color:#c8d0cc;"><b>Turn on general displacement</b></div><div style="position:absolute;left:989px;top:79.6px;width:7.5px;height:7.5px;background:#2c2c2c;"></div><svg style="position:absolute;left:989px;top:79.6px" width="8" height="8" viewBox="0 0 8 8"><path d="M1.5 4.2 L3.2 6.2 L6.8 1.5" stroke="#e8e8e8" stroke-width="1.5" fill="none"/></svg><div class="t" style="left:998.5px;top:82.19999999999999px;font-size:5.2px;color:#c8d0cc;"><b>Turn on general bump</b></div><div class="t" style="left:905px;top:93.3px;width:80px;text-align:right;font-size:5.2px;color:#b9c4c0">Rocky Ground Normal...</div><div style="position:absolute;left:989px;top:89px;width:32px;height:10px;background:#2c2c2c;"></div><div class="t" style="left:991px;top:91.5px;font-size:5.8px;font-weight:bold;font-family:'Liberation Mono',monospace;color:#e8e8e8">1</div><div style="position:absolute;left:1023px;top:94px;width:50px;height:1.5px;background:#262626;"></div><div style="position:absolute;left:1023px;top:94.3px;width:0px;height:0.7px;background:#5a6664;"></div><div style="position:absolute;left:1023px;top:90.7px;width:1.4px;height:8px;background:#9aa9a5;"></div><div class="t" style="left:905px;top:104.3px;width:80px;text-align:right;font-size:5.2px;color:#b9c4c0">Rocky Cliffs Normal Sc...</div><div style="position:absolute;left:989px;top:100px;width:32px;height:10px;background:#2c2c2c;"></div><div class="t" style="left:991px;top:102.5px;font-size:5.8px;font-weight:bold;font-family:'Liberation Mono',monospace;color:#e8e8e8">2</div><div style="position:absolute;left:1023px;top:105px;width:50px;height:1.5px;background:#262626;"></div><div style="position:absolute;left:1023px;top:105.3px;width:3px;height:0.7px;background:#5a6664;"></div><div style="position:absolute;left:1026px;top:101.7px;width:1.4px;height:8px;background:#9aa9a5;"></div><div class="t" style="left:905px;top:115.3px;width:80px;text-align:right;font-size:5.2px;color:#b9c4c0">Gravel Dry Normal Scale</div><div style="position:absolute;left:989px;top:111px;width:32px;height:10px;background:#2c2c2c;"></div><div class="t" style="left:991px;top:113.5px;font-size:5.8px;font-weight:bold;font-family:'Liberation Mono',monospace;color:#e8e8e8">0.25</div><div style="position:absolute;left:1023px;top:116px;width:50px;height:1.5px;background:#262626;"></div><div style="position:absolute;left:1023px;top:116.3px;width:-2px;height:0.7px;background:#5a6664;"></div><div style="position:absolute;left:1021px;top:112.7px;width:1.4px;height:8px;background:#9aa9a5;"></div><div class="t" style="left:905px;top:126.3px;width:80px;text-align:right;font-size:5.2px;color:#b9c4c0">Gravel Ground Normal...</div><div style="position:absolute;left:989px;top:122px;width:32px;height:10px;background:#2c2c2c;"></div><div class="t" style="left:991px;top:124.5px;font-size:5.8px;font-weight:bold;font-family:'Liberation Mono',monospace;color:#e8e8e8">0.1</div><div style="position:absolute;left:1023px;top:127px;width:50px;height:1.5px;background:#262626;"></div><div style="position:absolute;left:1023px;top:127.3px;width:-2px;height:0.7px;background:#5a6664;"></div><div style="position:absolute;left:1021px;top:123.7px;width:1.4px;height:8px;background:#9aa9a5;"></div><div class="t" style="left:905px;top:137.8px;width:80px;text-align:right;font-size:5.2px;color:#b9c4c0">Sand Debris Normal S...</div><div style="position:absolute;left:989px;top:133.5px;width:32px;height:10px;background:#2c2c2c;"></div><div class="t" style="left:991px;top:136.0px;font-size:5.8px;font-weight:bold;font-family:'Liberation Mono',monospace;color:#e8e8e8">0.3</div><div style="position:absolute;left:1023px;top:138.5px;width:50px;height:1.5px;background:#262626;"></div><div style="position:absolute;left:1023px;top:138.8px;width:-2px;height:0.7px;background:#5a6664;"></div><div style="position:absolute;left:1021px;top:135.2px;width:1.4px;height:8px;background:#9aa9a5;"></div><div class="t" style="left:905px;top:158.3px;width:80px;text-align:right;font-size:5.2px;color:#b9c4c0">Rock Ground Tile Mult...</div><div style="position:absolute;left:989px;top:154px;width:32px;height:10px;background:#2c2c2c;"></div><div class="t" style="left:991px;top:156.5px;font-size:5.8px;font-weight:bold;font-family:'Liberation Mono',monospace;color:#e8e8e8">40</div><div style="position:absolute;left:1023px;top:159px;width:50px;height:1.5px;background:#262626;"></div><div style="position:absolute;left:1023px;top:159.3px;width:18px;height:0.7px;background:#5a6664;"></div><div style="position:absolute;left:1041px;top:155.7px;width:1.4px;height:8px;background:#9aa9a5;"></div><div class="t" style="left:905px;top:169.3px;width:80px;text-align:right;font-size:5.2px;color:#b9c4c0">Rocky Cliffs Tile Multi...</div><div style="position:absolute;left:989px;top:165px;width:32px;height:10px;background:#2c2c2c;"></div><div class="t" style="left:991px;top:167.5px;font-size:5.8px;font-weight:bold;font-family:'Liberation Mono',monospace;color:#e8e8e8">20</div><div style="position:absolute;left:1023px;top:170px;width:50px;height:1.5px;background:#262626;"></div><div style="position:absolute;left:1023px;top:170.3px;width:8px;height:0.7px;background:#5a6664;"></div><div style="position:absolute;left:1031px;top:166.7px;width:1.4px;height:8px;background:#9aa9a5;"></div><div class="t" style="left:905px;top:180.3px;width:80px;text-align:right;font-size:5.2px;color:#b9c4c0">Gravel Dry Tile Multiplier</div><div style="position:absolute;left:989px;top:176px;width:32px;height:10px;background:#2c2c2c;"></div><div class="t" style="left:991px;top:178.5px;font-size:5.8px;font-weight:bold;font-family:'Liberation Mono',monospace;color:#e8e8e8">80</div><div style="position:absolute;left:1023px;top:181px;width:50px;height:1.5px;background:#262626;"></div><div style="position:absolute;left:1023px;top:181.3px;width:39px;height:0.7px;background:#5a6664;"></div><div style="position:absolute;left:1062px;top:177.7px;width:1.4px;height:8px;background:#9aa9a5;"></div><div class="t" style="left:905px;top:191.3px;width:80px;text-align:right;font-size:5.2px;color:#b9c4c0">Gravel Ground Tile Mu...</div><div style="position:absolute;left:989px;top:187px;width:32px;height:10px;background:#2c2c2c;"></div><div class="t" style="left:991px;top:189.5px;font-size:5.8px;font-weight:bold;font-family:'Liberation Mono',monospace;color:#e8e8e8">55</div><div style="position:absolute;left:1023px;top:192px;width:50px;height:1.5px;background:#262626;"></div><div style="position:absolute;left:1023px;top:192.3px;width:26px;height:0.7px;background:#5a6664;"></div><div style="position:absolute;left:1049px;top:188.7px;width:1.4px;height:8px;background:#9aa9a5;"></div><div class="t" style="left:905px;top:202.8px;width:80px;text-align:right;font-size:5.2px;color:#b9c4c0">Sand Debris Tile Multi...</div><div style="position:absolute;left:989px;top:198.5px;width:32px;height:10px;background:#2c2c2c;"></div><div class="t" style="left:991px;top:201.0px;font-size:5.8px;font-weight:bold;font-family:'Liberation Mono',monospace;color:#e8e8e8">15</div><div style="position:absolute;left:1023px;top:203.5px;width:50px;height:1.5px;background:#262626;"></div><div style="position:absolute;left:1023px;top:203.8px;width:6px;height:0.7px;background:#5a6664;"></div><div style="position:absolute;left:1029px;top:200.2px;width:1.4px;height:8px;background:#9aa9a5;"></div><div style="position:absolute;left:926px;top:210px;width:152px;height:52px;background:#2e2e2e;border:1px solid #3c3c3c;box-sizing:border-box"></div><div class="t" style="left:936px;top:212.3px;font-size:5.2px;color:#b9c4c0;">Input Operators (Drag/Drop to reorder)</div><svg style="position:absolute;left:0;top:0" width="1079" height="607"><path d="M941.5 41 L948 48 M948 41 L941.5 48" stroke="#d8d8d8" stroke-width="1.3"/><path d="M940.5 42 L943 40" stroke="#d8d8d8" stroke-width="1.5"/><path d="M953 40.5 V48.5 M953 42.5 H958 M953 45 H958 M953 48 H958 M956 41 V48" stroke="#b8b8b8" stroke-width="0.8" fill="none"/><rect x="962.5" y="40.5" width="6" height="8" fill="#d8d8d8"/><path d="M963.5 42.5 H967.5 M963.5 44.5 H967.5 M963.5 46.5 H967.5" stroke="#999" stroke-width="0.5"/><rect x="982" y="40.5" width="8" height="8" fill="#ddd"/><rect x="983" y="41.5" width="6" height="1.5" fill="#e05a3a"/><rect x="983" y="44" width="6" height="1.5" fill="#e0c040"/><rect x="983" y="46.5" width="6" height="1.5" fill="#50a050"/><rect x="993" y="40.5" width="7" height="8" fill="#555" stroke="#bbb" stroke-width="0.6"/><path d="M995.5 41 V48 M997.5 41 V48" stroke="#ccc" stroke-width="0.6"/><rect x="1012" y="40.5" width="8" height="8" fill="#ddd"/><rect x="1013" y="44" width="4" height="3.5" fill="#555"/><rect x="1023" y="40.5" width="8" height="8" fill="#e0e0e0"/><path d="M1024 46 L1030 42" stroke="#666" stroke-width="0.8"/><rect x="1034" y="40" width="8" height="8.5" fill="#2f6fa8"/><circle cx="1037" cy="43" r="1.5" fill="#e0c040"/><path d="M1035 47 L1041 42" stroke="#50c0a0" stroke-width="1"/><rect x="1045" y="41.5" width="8" height="6" fill="#e0a020"/><rect x="1045" y="43.5" width="8" height="2" fill="#d04040"/><circle cx="1068" cy="43.5" r="2.7" fill="none" stroke="#ccc" stroke-width="0.9"/><path d="M1070 45.5 L1072.5 48" stroke="#ccc" stroke-width="1.2"/><rect x="1076" y="40.5" width="4" height="8" fill="#ccc"/><circle cx="1036.5" cy="57" r="2.3" fill="none" stroke="#ddd" stroke-width="1.6" stroke-dasharray="1 0.8"/><path d="M1045 53 H1044 V61 H1045 M1049 53 H1050 V61 H1049 M1046 57 H1048 M1046.2 54.5 V59.5 M1047.8 54.5 V59.5" stroke="#ccc" stroke-width="0.7" fill="none"/><circle cx="1056" cy="56.5" r="2.7" fill="none" stroke="#ccc" stroke-width="0.8"/><path d="M1058 58.5 L1060.5 61" stroke="#ccc" stroke-width="1.1"/><circle cx="1065" cy="57" r="3.2" fill="none" stroke="#ccc" stroke-width="0.7"/><path d="M1065 55.5 V59" stroke="#ccc" stroke-width="0.8"/><circle cx="1074.5" cy="57" r="3.2" fill="none" stroke="#ccc" stroke-width="0.7"/><circle cx="1068" cy="29.5" r="4.6" fill="none" stroke="#9aa8a4" stroke-width="0.7"/><circle cx="1079" cy="29.5" r="4.6" fill="#2a5a7a" stroke="#9aa8a4" stroke-width="0.7"/></svg><div style="position:absolute;left:0px;top:568px;width:1079px;height:39px;background:#2d2d2d;"></div><div style="position:absolute;left:0px;top:572px;width:1079px;height:2px;background:#3b3b3b;"></div><div style="position:absolute;left:6px;top:579px;width:57px;height:5px;background:#3a78b4;border-radius:2px 0 0 2px"></div><div style="position:absolute;left:6px;top:583.3px;width:961px;height:0.7px;background:#5f6d6b;"></div><svg style="position:absolute;left:0;top:0" width="1079" height="607"><rect x="6.80" y="581" width="0.8" height="4" fill="#9aa8a6"/><rect x="10.81" y="582.5" width="0.8" height="2.2" fill="#7d8b89"/><rect x="14.82" y="582.5" width="0.8" height="2.2" fill="#7d8b89"/><rect x="18.84" y="582.5" width="0.8" height="2.2" fill="#7d8b89"/><rect x="22.85" y="582.5" width="0.8" height="2.2" fill="#7d8b89"/><rect x="26.86" y="582.5" width="0.8" height="2.2" fill="#7d8b89"/><rect x="30.88" y="582.5" width="0.8" height="2.2" fill="#7d8b89"/><rect x="34.89" y="582.5" width="0.8" height="2.2" fill="#7d8b89"/><rect x="38.90" y="582.5" width="0.8" height="2.2" fill="#7d8b89"/><rect x="42.91" y="582.5" width="0.8" height="2.2" fill="#7d8b89"/><rect x="46.92" y="582.5" width="0.8" height="2.2" fill="#7d8b89"/><rect x="50.94" y="582.5" width="0.8" height="2.2" fill="#7d8b89"/><rect x="54.95" y="582.5" width="0.8" height="2.2" fill="#7d8b89"/><rect x="58.96" y="582.5" width="0.8" height="2.2" fill="#7d8b89"/><rect x="62.98" y="582.5" width="0.8" height="2.2" fill="#7d8b89"/><rect x="66.99" y="582.5" width="0.8" height="2.2" fill="#7d8b89"/><rect x="71.00" y="582.5" width="0.8" height="2.2" fill="#7d8b89"/><rect x="75.01" y="582.5" width="0.8" height="2.2" fill="#7d8b89"/><rect x="79.03" y="582.5" width="0.8" height="2.2" fill="#7d8b89"/><rect x="83.04" y="582.5" width="0.8" height="2.2" fill="#7d8b89"/><rect x="87.05" y="582.5" width="0.8" height="2.2" fill="#7d8b89"/><rect x="91.06" y="582.5" width="0.8" height="2.2" fill="#7d8b89"/><rect x="95.08" y="582.5" width="0.8" height="2.2" fill="#7d8b89"/><rect x="99.09" y="581" width="0.8" height="4" fill="#9aa8a6"/><rect x="103.10" y="582.5" width="0.8" height="2.2" fill="#7d8b89"/><rect x="107.11" y="582.5" width="0.8" height="2.2" fill="#7d8b89"/><rect x="111.12" y="582.5" width="0.8" height="2.2" fill="#7d8b89"/><rect x="115.14" y="582.5" width="0.8" height="2.2" fill="#7d8b89"/><rect x="119.15" y="582.5" width="0.8" height="2.2" fill="#7d8b89"/><rect x="123.16" y="582.5" width="0.8" height="2.2" fill="#7d8b89"/><rect x="127.17" y="582.5" width="0.8" height="2.2" fill="#7d8b89"/><rect x="131.19" y="582.5" width="0.8" height="2.2" fill="#7d8b89"/><rect x="135.20" y="582.5" width="0.8" height="2.2" fill="#7d8b89"/><rect x="139.21" y="582.5" width="0.8" height="2.2" fill="#7d8b89"/><rect x="143.23" y="582.5" width="0.8" height="2.2" fill="#7d8b89"/><rect x="147.24" y="582.5" width="0.8" height="2.2" fill="#7d8b89"/><rect x="151.25" y="582.5" width="0.8" height="2.2" fill="#7d8b89"/><rect x="155.26" y="582.5" width="0.8" height="2.2" fill="#7d8b89"/><rect x="159.28" y="582.5" width="0.8" height="2.2" fill="#7d8b89"/><rect x="163.29" y="582.5" width="0.8" height="2.2" fill="#7d8b89"/><rect x="167.30" y="582.5" width="0.8" height="2.2" fill="#7d8b89"/><rect x="171.31" y="582.5" width="0.8" height="2.2" fill="#7d8b89"/><rect x="175.33" y="582.5" width="0.8" height="2.2" fill="#7d8b89"/><rect x="179.34" y="582.5" width="0.8" height="2.2" fill="#7d8b89"/><rect x="183.35" y="582.5" width="0.8" height="2.2" fill="#7d8b89"/><rect x="187.36" y="582.5" width="0.8" height="2.2" fill="#7d8b89"/><rect x="191.38" y="582.5" width="0.8" height="2.2" fill="#7d8b89"/><rect x="195.39" y="581" width="0.8" height="4" fill="#9aa8a6"/><rect x="199.40" y="582.5" width="0.8" height="2.2" fill="#7d8b89"/><rect x="203.41" y="582.5" width="0.8" height="2.2" fill="#7d8b89"/><rect x="207.43" y="582.5" width="0.8" height="2.2" fill="#7d8b89"/><rect x="211.44" y="582.5" width="0.8" height="2.2" fill="#7d8b89"/><rect x="215.45" y="582.5" width="0.8" height="2.2" fill="#7d8b89"/><rect x="219.46" y="582.5" width="0.8" height="2.2" fill="#7d8b89"/><rect x="223.48" y="582.5" width="0.8" height="2.2" fill="#7d8b89"/><rect x="227.49" y="582.5" width="0.8" height="2.2" fill="#7d8b89"/><rect x="231.50" y="582.5" width="0.8" height="2.2" fill="#7d8b89"/><rect x="235.51" y="582.5" width="0.8" height="2.2" fill="#7d8b89"/><rect x="239.53" y="582.5" width="0.8" height="2.2" fill="#7d8b89"/><rect x="243.54" y="582.5" width="0.8" height="2.2" fill="#7d8b89"/><rect x="247.55" y="582.5" width="0.8" height="2.2" fill="#7d8b89"/><rect x="251.56" y="582.5" width="0.8" height="2.2" fill="#7d8b89"/><rect x="255.58" y="582.5" width="0.8" height="2.2" fill="#7d8b89"/><rect x="259.59" y="582.5" width="0.8" height="2.2" fill="#7d8b89"/><rect x="263.60" y="582.5" width="0.8" height="2.2" fill="#7d8b89"/><rect x="267.61" y="582.5" width="0.8" height="2.2" fill="#7d8b89"/><rect x="271.62" y="582.5" width="0.8" height="2.2" fill="#7d8b89"/><rect x="275.64" y="582.5" width="0.8" height="2.2" fill="#7d8b89"/><rect x="279.65" y="582.5" width="0.8" height="2.2" fill="#7d8b89"/><rect x="283.66" y="582.5" width="0.8" height="2.2" fill="#7d8b89"/><rect x="287.68" y="582.5" width="0.8" height="2.2" fill="#7d8b89"/><rect x="291.69" y="581" width="0.8" height="4" fill="#9aa8a6"/><rect x="295.70" y="582.5" width="0.8" height="2.2" fill="#7d8b89"/><rect x="299.71" y="582.5" width="0.8" height="2.2" fill="#7d8b89"/><rect x="303.73" y="582.5" width="0.8" height="2.2" fill="#7d8b89"/><rect x="307.74" y="582.5" width="0.8" height="2.2" fill="#7d8b89"/><rect x="311.75" y="582.5" width="0.8" height="2.2" fill="#7d8b89"/><rect x="315.76" y="582.5" width="0.8" height="2.2" fill="#7d8b89"/><rect x="319.78" y="582.5" width="0.8" height="2.2" fill="#7d8b89"/><rect x="323.79" y="582.5" width="0.8" height="2.2" fill="#7d8b89"/><rect x="327.80" y="582.5" width="0.8" height="2.2" fill="#7d8b89"/><rect x="331.81" y="582.5" width="0.8" height="2.2" fill="#7d8b89"/><rect x="335.83" y="582.5" width="0.8" height="2.2" fill="#7d8b89"/><rect x="339.84" y="582.5" width="0.8" height="2.2" fill="#7d8b89"/><rect x="343.85" y="582.5" width="0.8" height="2.2" fill="#7d8b89"/><rect x="347.86" y="582.5" width="0.8" height="2.2" fill="#7d8b89"/><rect x="351.88" y="582.5" width="0.8" height="2.2" fill="#7d8b89"/><rect x="355.89" y="582.5" width="0.8" height="2.2" fill="#7d8b89"/><rect x="359.90" y="582.5" width="0.8" height="2.2" fill="#7d8b89"/><rect x="363.91" y="582.5" width="0.8" height="2.2" fill="#7d8b89"/><rect x="367.93" y="582.5" width="0.8" height="2.2" fill="#7d8b89"/><rect x="371.94" y="582.5" width="0.8" height="2.2" fill="#7d8b89"/><rect x="375.95" y="582.5" width="0.8" height="2.2" fill="#7d8b89"/><rect x="379.96" y="582.5" width="0.8" height="2.2" fill="#7d8b89"/><rect x="383.98" y="582.5" width="0.8" height="2.2" fill="#7d8b89"/><rect x="387.99" y="581" width="0.8" height="4" fill="#9aa8a6"/><rect x="392.00" y="582.5" width="0.8" height="2.2" fill="#7d8b89"/><rect x="396.01" y="582.5" width="0.8" height="2.2" fill="#7d8b89"/><rect x="400.03" y="582.5" width="0.8" height="2.2" fill="#7d8b89"/><rect x="404.04" y="582.5" width="0.8" height="2.2" fill="#7d8b89"/><rect x="408.05" y="582.5" width="0.8" height="2.2" fill="#7d8b89"/><rect x="412.06" y="582.5" width="0.8" height="2.2" fill="#7d8b89"/><rect x="416.08" y="582.5" width="0.8" height="2.2" fill="#7d8b89"/><rect x="420.09" y="582.5" width="0.8" height="2.2" fill="#7d8b89"/><rect x="424.10" y="582.5" width="0.8" height="2.2" fill="#7d8b89"/><rect x="428.11" y="582.5" width="0.8" height="2.2" fill="#7d8b89"/><rect x="432.13" y="582.5" width="0.8" height="2.2" fill="#7d8b89"/><rect x="436.14" y="582.5" width="0.8" height="2.2" fill="#7d8b89"/><rect x="440.15" y="582.5" width="0.8" height="2.2" fill="#7d8b89"/><rect x="444.16" y="582.5" width="0.8" height="2.2" fill="#7d8b89"/><rect x="448.18" y="582.5" width="0.8" height="2.2" fill="#7d8b89"/><rect x="452.19" y="582.5" width="0.8" height="2.2" fill="#7d8b89"/><rect x="456.20" y="582.5" width="0.8" height="2.2" fill="#7d8b89"/><rect x="460.21" y="582.5" width="0.8" height="2.2" fill="#7d8b89"/><rect x="464.23" y="582.5" width="0.8" height="2.2" fill="#7d8b89"/><rect x="468.24" y="582.5" width="0.8" height="2.2" fill="#7d8b89"/><rect x="472.25" y="582.5" width="0.8" height="2.2" fill="#7d8b89"/><rect x="476.26" y="582.5" width="0.8" height="2.2" fill="#7d8b89"/><rect x="480.28" y="582.5" width="0.8" height="2.2" fill="#7d8b89"/><rect x="484.29" y="581" width="0.8" height="4" fill="#9aa8a6"/><rect x="488.30" y="582.5" width="0.8" height="2.2" fill="#7d8b89"/><rect x="492.31" y="582.5" width="0.8" height="2.2" fill="#7d8b89"/><rect x="496.33" y="582.5" width="0.8" height="2.2" fill="#7d8b89"/><rect x="500.34" y="582.5" width="0.8" height="2.2" fill="#7d8b89"/><rect x="504.35" y="582.5" width="0.8" height="2.2" fill="#7d8b89"/><rect x="508.36" y="582.5" width="0.8" height="2.2" fill="#7d8b89"/><rect x="512.38" y="582.5" width="0.8" height="2.2" fill="#7d8b89"/><rect x="516.39" y="582.5" width="0.8" height="2.2" fill="#7d8b89"/><rect x="520.40" y="582.5" width="0.8" height="2.2" fill="#7d8b89"/><rect x="524.41" y="582.5" width="0.8" height="2.2" fill="#7d8b89"/><rect x="528.42" y="582.5" width="0.8" height="2.2" fill="#7d8b89"/><rect x="532.44" y="582.5" width="0.8" height="2.2" fill="#7d8b89"/><rect x="536.45" y="582.5" width="0.8" height="2.2" fill="#7d8b89"/><rect x="540.46" y="582.5" width="0.8" height="2.2" fill="#7d8b89"/><rect x="544.48" y="582.5" width="0.8" height="2.2" fill="#7d8b89"/><rect x="548.49" y="582.5" width="0.8" height="2.2" fill="#7d8b89"/><rect x="552.50" y="582.5" width="0.8" height="2.2" fill="#7d8b89"/><rect x="556.51" y="582.5" width="0.8" height="2.2" fill="#7d8b89"/><rect x="560.52" y="582.5" width="0.8" height="2.2" fill="#7d8b89"/><rect x="564.54" y="582.5" width="0.8" height="2.2" fill="#7d8b89"/><rect x="568.55" y="582.5" width="0.8" height="2.2" fill="#7d8b89"/><rect x="572.56" y="582.5" width="0.8" height="2.2" fill="#7d8b89"/><rect x="576.57" y="582.5" width="0.8" height="2.2" fill="#7d8b89"/><rect x="580.59" y="581" width="0.8" height="4" fill="#9aa8a6"/><rect x="584.60" y="582.5" width="0.8" height="2.2" fill="#7d8b89"/><rect x="588.61" y="582.5" width="0.8" height="2.2" fill="#7d8b89"/><rect x="592.62" y="582.5" width="0.8" height="2.2" fill="#7d8b89"/><rect x="596.64" y="582.5" width="0.8" height="2.2" fill="#7d8b89"/><rect x="600.65" y="582.5" width="0.8" height="2.2" fill="#7d8b89"/><rect x="604.66" y="582.5" width="0.8" height="2.2" fill="#7d8b89"/><rect x="608.67" y="582.5" width="0.8" height="2.2" fill="#7d8b89"/><rect x="612.69" y="582.5" width="0.8" height="2.2" fill="#7d8b89"/><rect x="616.70" y="582.5" width="0.8" height="2.2" fill="#7d8b89"/><rect x="620.71" y="582.5" width="0.8" height="2.2" fill="#7d8b89"/><rect x="624.73" y="582.5" width="0.8" height="2.2" fill="#7d8b89"/><rect x="628.74" y="582.5" width="0.8" height="2.2" fill="#7d8b89"/><rect x="632.75" y="582.5" width="0.8" height="2.2" fill="#7d8b89"/><rect x="636.76" y="582.5" width="0.8" height="2.2" fill="#7d8b89"/><rect x="640.77" y="582.5" width="0.8" height="2.2" fill="#7d8b89"/><rect x="644.79" y="582.5" width="0.8" height="2.2" fill="#7d8b89"/><rect x="648.80" y="582.5" width="0.8" height="2.2" fill="#7d8b89"/><rect x="652.81" y="582.5" width="0.8" height="2.2" fill="#7d8b89"/><rect x="656.82" y="582.5" width="0.8" height="2.2" fill="#7d8b89"/><rect x="660.84" y="582.5" width="0.8" height="2.2" fill="#7d8b89"/><rect x="664.85" y="582.5" width="0.8" height="2.2" fill="#7d8b89"/><rect x="668.86" y="582.5" width="0.8" height="2.2" fill="#7d8b89"/><rect x="672.88" y="582.5" width="0.8" height="2.2" fill="#7d8b89"/><rect x="676.89" y="581" width="0.8" height="4" fill="#9aa8a6"/><rect x="680.90" y="582.5" width="0.8" height="2.2" fill="#7d8b89"/><rect x="684.91" y="582.5" width="0.8" height="2.2" fill="#7d8b89"/><rect x="688.92" y="582.5" width="0.8" height="2.2" fill="#7d8b89"/><rect x="692.94" y="582.5" width="0.8" height="2.2" fill="#7d8b89"/><rect x="696.95" y="582.5" width="0.8" height="2.2" fill="#7d8b89"/><rect x="700.96" y="582.5" width="0.8" height="2.2" fill="#7d8b89"/><rect x="704.98" y="582.5" width="0.8" height="2.2" fill="#7d8b89"/><rect x="708.99" y="582.5" width="0.8" height="2.2" fill="#7d8b89"/><rect x="713.00" y="582.5" width="0.8" height="2.2" fill="#7d8b89"/><rect x="717.01" y="582.5" width="0.8" height="2.2" fill="#7d8b89"/><rect x="721.02" y="582.5" width="0.8" height="2.2" fill="#7d8b89"/><rect x="725.04" y="582.5" width="0.8" height="2.2" fill="#7d8b89"/><rect x="729.05" y="582.5" width="0.8" height="2.2" fill="#7d8b89"/><rect x="733.06" y="582.5" width="0.8" height="2.2" fill="#7d8b89"/><rect x="737.07" y="582.5" width="0.8" height="2.2" fill="#7d8b89"/><rect x="741.09" y="582.5" width="0.8" height="2.2" fill="#7d8b89"/><rect x="745.10" y="582.5" width="0.8" height="2.2" fill="#7d8b89"/><rect x="749.11" y="582.5" width="0.8" height="2.2" fill="#7d8b89"/><rect x="753.12" y="582.5" width="0.8" height="2.2" fill="#7d8b89"/><rect x="757.14" y="582.5" width="0.8" height="2.2" fill="#7d8b89"/><rect x="761.15" y="582.5" width="0.8" height="2.2" fill="#7d8b89"/><rect x="765.16" y="582.5" width="0.8" height="2.2" fill="#7d8b89"/><rect x="769.17" y="582.5" width="0.8" height="2.2" fill="#7d8b89"/><rect x="773.19" y="581" width="0.8" height="4" fill="#9aa8a6"/><rect x="777.20" y="582.5" width="0.8" height="2.2" fill="#7d8b89"/><rect x="781.21" y="582.5" width="0.8" height="2.2" fill="#7d8b89"/><rect x="785.23" y="582.5" width="0.8" height="2.2" fill="#7d8b89"/><rect x="789.24" y="582.5" width="0.8" height="2.2" fill="#7d8b89"/><rect x="793.25" y="582.5" width="0.8" height="2.2" fill="#7d8b89"/><rect x="797.26" y="582.5" width="0.8" height="2.2" fill="#7d8b89"/><rect x="801.27" y="582.5" width="0.8" height="2.2" fill="#7d8b89"/><rect x="805.29" y="582.5" width="0.8" height="2.2" fill="#7d8b89"/><rect x="809.30" y="582.5" width="0.8" height="2.2" fill="#7d8b89"/><rect x="813.31" y="582.5" width="0.8" height="2.2" fill="#7d8b89"/><rect x="817.33" y="582.5" width="0.8" height="2.2" fill="#7d8b89"/><rect x="821.34" y="582.5" width="0.8" height="2.2" fill="#7d8b89"/><rect x="825.35" y="582.5" width="0.8" height="2.2" fill="#7d8b89"/><rect x="829.36" y="582.5" width="0.8" height="2.2" fill="#7d8b89"/><rect x="833.38" y="582.5" width="0.8" height="2.2" fill="#7d8b89"/><rect x="837.39" y="582.5" width="0.8" height="2.2" fill="#7d8b89"/><rect x="841.40" y="582.5" width="0.8" height="2.2" fill="#7d8b89"/><rect x="845.41" y="582.5" width="0.8" height="2.2" fill="#7d8b89"/><rect x="849.42" y="582.5" width="0.8" height="2.2" fill="#7d8b89"/><rect x="853.44" y="582.5" width="0.8" height="2.2" fill="#7d8b89"/><rect x="857.45" y="582.5" width="0.8" height="2.2" fill="#7d8b89"/><rect x="861.46" y="582.5" width="0.8" height="2.2" fill="#7d8b89"/><rect x="865.48" y="582.5" width="0.8" height="2.2" fill="#7d8b89"/><rect x="869.49" y="581" width="0.8" height="4" fill="#9aa8a6"/><rect x="873.50" y="582.5" width="0.8" height="2.2" fill="#7d8b89"/><rect x="877.51" y="582.5" width="0.8" height="2.2" fill="#7d8b89"/><rect x="881.52" y="582.5" width="0.8" height="2.2" fill="#7d8b89"/><rect x="885.54" y="582.5" width="0.8" height="2.2" fill="#7d8b89"/><rect x="889.55" y="582.5" width="0.8" height="2.2" fill="#7d8b89"/><rect x="893.56" y="582.5" width="0.8" height="2.2" fill="#7d8b89"/><rect x="897.58" y="582.5" width="0.8" height="2.2" fill="#7d8b89"/><rect x="901.59" y="582.5" width="0.8" height="2.2" fill="#7d8b89"/><rect x="905.60" y="582.5" width="0.8" height="2.2" fill="#7d8b89"/><rect x="909.61" y="582.5" width="0.8" height="2.2" fill="#7d8b89"/><rect x="913.62" y="582.5" width="0.8" height="2.2" fill="#7d8b89"/><rect x="917.64" y="582.5" width="0.8" height="2.2" fill="#7d8b89"/><rect x="921.65" y="582.5" width="0.8" height="2.2" fill="#7d8b89"/><rect x="925.66" y="582.5" width="0.8" height="2.2" fill="#7d8b89"/><rect x="929.67" y="582.5" width="0.8" height="2.2" fill="#7d8b89"/><rect x="933.69" y="582.5" width="0.8" height="2.2" fill="#7d8b89"/><rect x="937.70" y="582.5" width="0.8" height="2.2" fill="#7d8b89"/><rect x="941.71" y="582.5" width="0.8" height="2.2" fill="#7d8b89"/><rect x="945.73" y="582.5" width="0.8" height="2.2" fill="#7d8b89"/><rect x="949.74" y="582.5" width="0.8" height="2.2" fill="#7d8b89"/><rect x="953.75" y="582.5" width="0.8" height="2.2" fill="#7d8b89"/><rect x="957.76" y="582.5" width="0.8" height="2.2" fill="#7d8b89"/><rect x="961.77" y="582.5" width="0.8" height="2.2" fill="#7d8b89"/><rect x="965.79" y="581" width="0.8" height="4" fill="#9aa8a6"/><path d="M50 573.8 H60.8 V580.6 H57 L55.4 582.6 L53.8 580.6 H50 Z" fill="#252525" stroke="#8a9a98" stroke-width="0.7"/><path d="M47.5 596.3 L50.5 598.3 L47.5 600.3 Z" fill="#9aaaa8"/><path d="M932.5 596.3 L929.5 598.3 L932.5 600.3 Z" fill="#9aaaa8"/></svg><div class="t" style="left:98.0875px;top:574px;font-size:4px;color:#7c8a88;">24</div><div class="t" style="left:194.38750000000002px;top:574px;font-size:4px;color:#7c8a88;">48</div><div class="t" style="left:290.6875px;top:574px;font-size:4px;color:#7c8a88;">72</div><div class="t" style="left:386.9875px;top:574px;font-size:4px;color:#7c8a88;">96</div><div class="t" style="left:483.2875px;top:574px;font-size:4px;color:#7c8a88;">120</div><div class="t" style="left:579.5875px;top:574px;font-size:4px;color:#7c8a88;">144</div><div class="t" style="left:675.8874999999999px;top:574px;font-size:4px;color:#7c8a88;">168</div><div class="t" style="left:772.1875px;top:574px;font-size:4px;color:#7c8a88;">192</div><div class="t" style="left:868.4875px;top:574px;font-size:4px;color:#7c8a88;">216</div><div class="t" style="left:7.8px;top:573.5px;font-size:4px;color:#7c8a88;">1</div><div class="t" style="left:965.5px;top:573.5px;font-size:4px;color:#7c8a88;">240</div><div class="t" style="left:52.3px;top:574.5px;font-size:5px;color:#ccd;">11</div><div style="position:absolute;left:0px;top:577.5px;width:4px;height:12px;background:#474747;"></div><div style="position:absolute;left:0px;top:581.5px;width:3px;height:3px;background:#ddd;border-radius:1px"></div><div class="t" style="left:8px;top:596px;font-size:5.4px;color:#b8c4c0;">1</div><div class="t" style="left:28.7px;top:596px;font-size:5.4px;color:#b8c4c0;">1</div><div style="position:absolute;left:50px;top:597.6px;width:879px;height:1.4px;background:#8a9e9a;"></div><div class="t" style="left:933.5px;top:596px;font-size:5.4px;color:#c0c8c6;">248</div><div class="t" style="left:952.5px;top:596px;font-size:5.4px;color:#c0c8c6;">248</div><svg style="position:absolute;left:0;top:0" width="1079" height="607"><path d="M975 586 Q980 578 986 583 Q990 586 994 582" stroke="#3c3c3c" stroke-width="4" fill="none"/><circle cx="982" cy="586" r="2" fill="none" stroke="#999" stroke-width="0.7"/><path d="M980.5 587.5 L977.5 590.5" stroke="#999" stroke-width="0.8"/><path d="M991 585 L994 585 L992.5 587 Z" fill="#aaa"/></svg><div style="position:absolute;left:1000px;top:577px;width:10px;height:11px;background:#3a3a3a;border:0.6px solid #555;box-sizing:border-box"></div><div style="position:absolute;left:1002px;top:579px;width:6px;height:6px;background:#d8d8d8;"></div><div style="position:absolute;left:1000px;top:590px;width:10px;height:11px;background:#3a3a3a;border:0.6px solid #555;box-sizing:border-box"></div><div style="position:absolute;left:1001.5px;top:594px;width:7px;height:2px;background:#e0b030;"></div><div style="position:absolute;left:1013px;top:577px;width:66px;height:11px;background:#3c3c3c;"></div><div class="t" style="left:1021.5px;top:580.3px;font-size:5.2px;color:#b8c4c0;">0 keys, 0/0 channels</div><div style="position:absolute;left:1012px;top:590px;width:65px;height:11px;background:#3c3c3c;"></div><div class="t" style="left:1018px;top:593px;font-size:5.2px;color:#b8c4c0;">Key All Channels</div><div style="position:absolute;left:965px;top:605px;width:45px;height:2px;background:#3c3c3c;"></div><div style="position:absolute;left:1037px;top:605px;width:40px;height:2px;background:#3c3c3c;"></div></div>
</body></html>
